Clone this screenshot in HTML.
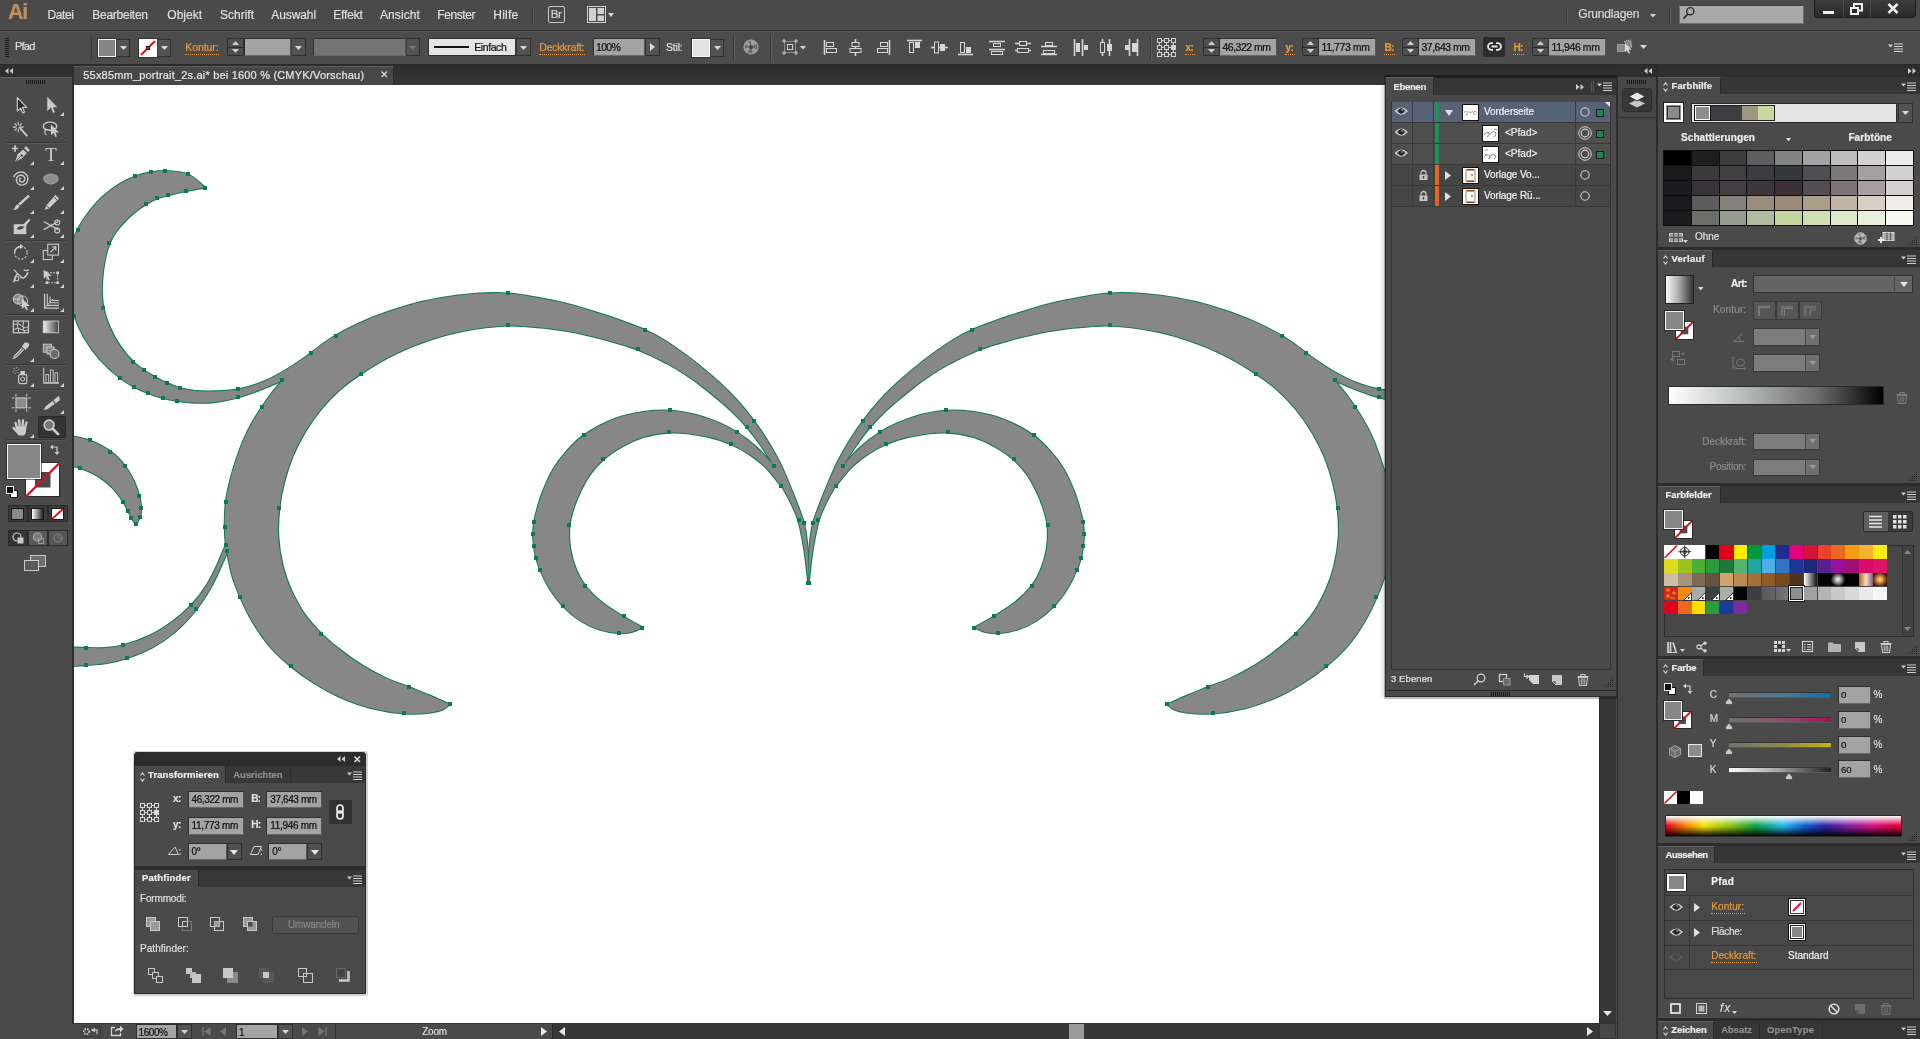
<!DOCTYPE html>
<html lang="de"><head><meta charset="utf-8"><title>55x85mm_portrait_2s.ai* bei 1600 % (CMYK/Vorschau)</title>
<style>
html,body{margin:0;padding:0}
body{width:1920px;height:1039px;overflow:hidden;position:relative;background:#4b4b4b;font-family:"Liberation Sans",sans-serif;}
.a{position:absolute;box-sizing:border-box}
.t{position:absolute;white-space:nowrap;-webkit-text-stroke:0.22px currentColor;}
svg{overflow:visible}
</style></head><body><div id="app" style="position:absolute;left:0;top:0;width:1920px;height:1039px;will-change:transform">
<div class="a" style="left:0px;top:0px;width:1920px;height:30px;background:#4a4a4a;"></div><div class="a" style="left:0px;top:30px;width:1920px;height:1px;background:#2b2b2b;"></div><span class="t" style="left:8.0px;top:2.4px;font-size:21.5px;line-height:21.5px;color:#c48d5f;letter-spacing:-1.25px;font-weight:bold;">Ai</span><span class="t" style="left:47.5px;top:8.8px;font-size:12px;line-height:12px;color:#dedede;letter-spacing:-0.40px;">Datei</span><span class="t" style="left:92.3px;top:8.8px;font-size:12px;line-height:12px;color:#dedede;letter-spacing:-0.26px;">Bearbeiten</span><span class="t" style="left:167.3px;top:8.8px;font-size:12px;line-height:12px;color:#dedede;letter-spacing:0.00px;">Objekt</span><span class="t" style="left:220.0px;top:8.8px;font-size:12px;line-height:12px;color:#dedede;letter-spacing:-0.00px;">Schrift</span><span class="t" style="left:271.3px;top:8.8px;font-size:12px;line-height:12px;color:#dedede;letter-spacing:-0.09px;">Auswahl</span><span class="t" style="left:333.3px;top:8.8px;font-size:12px;line-height:12px;color:#dedede;letter-spacing:-0.18px;">Effekt</span><span class="t" style="left:380.0px;top:8.8px;font-size:12px;line-height:12px;color:#dedede;letter-spacing:0.09px;">Ansicht</span><span class="t" style="left:437.3px;top:8.8px;font-size:12px;line-height:12px;color:#dedede;letter-spacing:-0.43px;">Fenster</span><span class="t" style="left:493.3px;top:8.8px;font-size:12px;line-height:12px;color:#dedede;letter-spacing:0.20px;">Hilfe</span><div class="a" style="left:532px;top:8px;width:1px;height:16px;background:#3a3a3a;"></div><div class="a" style="left:533px;top:8px;width:1px;height:16px;background:#5a5a5a;"></div><div class="a" style="left:548px;top:6px;width:17px;height:17px;background:transparent;border:1px solid #c8c8c8;border-radius:2px"></div><span class="t" style="left:550.7px;top:9.1px;font-size:11.5px;line-height:11.5px;color:#d6d6d6;letter-spacing:-0.25px;">Br</span><svg class="a" style="left:587px;top:6px;" width="19" height="17" viewBox="0 0 19 17"><rect x="0.5" y="0.5" width="18" height="16" fill="none" stroke="#d0d0d0"/><rect x="2" y="2" width="7" height="13" fill="#d0d0d0"/><rect x="10.5" y="2" width="6.5" height="6" fill="#d0d0d0"/><rect x="10.5" y="9.5" width="6.5" height="5.5" fill="#d0d0d0"/></svg><svg class="a" style="left:608px;top:13px;" width="6" height="4" viewBox="0 0 6 4"><path d="M0 0H6 L3 4Z" fill="#d8d8d8"/></svg><div class="a" style="left:1566px;top:6px;width:1px;height:18px;background:#3c3c3c;"></div><div class="a" style="left:1567px;top:6px;width:1px;height:18px;background:#585858;"></div><span class="t" style="left:1578.3px;top:8.1px;font-size:12px;line-height:12px;color:#d4d4d4;letter-spacing:-0.17px;">Grundlagen</span><svg class="a" style="left:1650px;top:13.5px;" width="6" height="3.5" viewBox="0 0 6 3.5"><path d="M0 0H6 L3 3.5Z" fill="#d8d8d8"/></svg><div class="a" style="left:1669px;top:6px;width:1px;height:18px;background:#3c3c3c;"></div><div class="a" style="left:1670px;top:6px;width:1px;height:18px;background:#585858;"></div><div class="a" style="left:1679px;top:5px;width:125px;height:19px;background:#a9a9a9;border:1px solid #6d6d6d;border-top-color:#3d3d3d"></div><svg class="a" style="left:1682px;top:6px;" width="14" height="14" viewBox="0 0 14 14"><circle cx="8.3" cy="5.2" r="3.6" fill="none" stroke="#2a2a2a" stroke-width="1.4"/><path d="M5.8 8L1.5 12.6" stroke="#2a2a2a" stroke-width="1.8"/></svg><div class="a" style="left:1814px;top:0px;width:102px;height:18px;background:#2a2a2a;border-radius:0 0 4px 4px;border:1px solid #1c1c1c;border-top:none;background:linear-gradient(#3c3c3c,#2a2a2a)"></div><div class="a" style="left:1843px;top:0px;width:1px;height:17px;background:#4a4a4a;"></div><div class="a" style="left:1870px;top:0px;width:1px;height:17px;background:#4a4a4a;"></div><div class="a" style="left:1823px;top:11px;width:11px;height:3px;background:#f0f0f0;"></div><svg class="a" style="left:1850px;top:3px;" width="13" height="12" viewBox="0 0 13 12"><rect x="4" y="1" width="8" height="6.5" fill="none" stroke="#f0f0f0" stroke-width="2"/><rect x="1" y="5" width="7" height="6" fill="#2a2a2a" stroke="#f0f0f0" stroke-width="2"/></svg><svg class="a" style="left:1887px;top:3px;" width="12" height="11" viewBox="0 0 12 11"><path d="M1.5 1L10.5 10M10.5 1L1.5 10" stroke="#f0f0f0" stroke-width="2.6"/></svg><div class="a" style="left:0px;top:31px;width:1920px;height:33px;background:#4c4c4c;"></div><div class="a" style="left:0px;top:31px;width:1920px;height:1px;background:#5a5a5a;"></div><div class="a" style="left:0px;top:64px;width:1920px;height:1px;background:#2b2b2b;"></div><div class="a" style="left:5px;top:38px;width:4px;height:19px;background:transparent;background:repeating-linear-gradient(#1e1e1e 0 1px,transparent 1px 2px)"></div><span class="t" style="left:15.0px;top:41.0px;font-size:11px;line-height:11px;color:#dedede;letter-spacing:-0.78px;">Pfad</span><div class="a" style="left:91px;top:36px;width:1px;height:24px;background:#3a3a3a;"></div><div class="a" style="left:97.5px;top:38.5px;width:18px;height:18px;background:#858585;border:1px solid #f4f4f4;outline:1px solid #333"></div><div class="a" style="left:116px;top:38.5px;width:14px;height:18px;background:#535353;border:1px solid #303030;border-left-color:#3c3c3c"></div><svg class="a" style="left:119.5px;top:46px;" width="7" height="4" viewBox="0 0 7 4"><path d="M0 0H7 L3.5 4Z" fill="#d8d8d8"/></svg><div class="a" style="left:138.5px;top:38.5px;width:18px;height:18px;background:#fff;outline:1px solid #333"></div><svg class="a" style="left:138.5px;top:38.5px;" width="18" height="18" viewBox="0 0 18 18"><path d="M2 16L16 2" stroke="#d8121c" stroke-width="2"/><rect x="7.5" y="7.5" width="3" height="3" fill="none" stroke="#111"/></svg><div class="a" style="left:157px;top:38.5px;width:14px;height:18px;background:#535353;border:1px solid #303030;border-left-color:#3c3c3c"></div><svg class="a" style="left:160.5px;top:46px;" width="7" height="4" viewBox="0 0 7 4"><path d="M0 0H7 L3.5 4Z" fill="#d8d8d8"/></svg><span class="t" style="left:185.3px;top:42.1px;font-size:10.5px;line-height:10.5px;color:#e8983a;letter-spacing:-0.09px;">Kontur:</span><div class="a" style="left:185px;top:53.5px;width:34px;height:1px;background:transparent;border-top:1px dotted #e8983a"></div><div class="a" style="left:226.5px;top:38px;width:17px;height:18px;background:#4e4e4e;border:1px solid #2c2c2c;border-radius:2px 0 0 2px"></div><svg class="a" style="left:231.5px;top:41px;" width="7" height="4" viewBox="0 0 7 4"><path d="M0 4H7L3.5 0Z" fill="#d0d0d0"/></svg><svg class="a" style="left:231.5px;top:49px;" width="7" height="4" viewBox="0 0 7 4"><path d="M0 0H7L3.5 4Z" fill="#d0d0d0"/></svg><div class="a" style="left:227.5px;top:46.5px;width:15px;height:1px;background:#2c2c2c;"></div><div class="a" style="left:243.5px;top:37.5px;width:47px;height:18.8px;background:#a3a3a3;border:1px solid #2e2e2e;border-bottom-color:#6a6a6a;border-right-color:#555"></div><div class="a" style="left:290.5px;top:38px;width:15px;height:18px;background:#535353;border:1px solid #303030;border-left-color:#3c3c3c"></div><svg class="a" style="left:294.5px;top:45.5px;" width="7" height="4" viewBox="0 0 7 4"><path d="M0 0H7 L3.5 4Z" fill="#d8d8d8"/></svg><div class="a" style="left:313px;top:37.5px;width:93px;height:18.8px;background:#747474;border:1px solid #2e2e2e;border-bottom-color:#6a6a6a;border-right-color:#555"></div><div class="a" style="left:405.5px;top:38px;width:14px;height:18px;background:#535353;border:1px solid #303030;border-left-color:#3c3c3c"></div><svg class="a" style="left:409px;top:45.5px;" width="7" height="4" viewBox="0 0 7 4"><path d="M0 0H7 L3.5 4Z" fill="#777"/></svg><div class="a" style="left:427.5px;top:38px;width:88px;height:18px;background:#e4e4e4;border:1px solid #2e2e2e"></div><div class="a" style="left:433.5px;top:46px;width:35px;height:2px;background:#111;"></div><span class="t" style="left:474.3px;top:41.7px;font-size:10.5px;line-height:10.5px;color:#111;letter-spacing:-0.43px;">Einfach</span><div class="a" style="left:515.5px;top:38px;width:15px;height:18px;background:#535353;border:1px solid #303030;border-left-color:#3c3c3c"></div><svg class="a" style="left:519.5px;top:45.5px;" width="7" height="4" viewBox="0 0 7 4"><path d="M0 0H7 L3.5 4Z" fill="#d8d8d8"/></svg><span class="t" style="left:539.3px;top:42.1px;font-size:10.5px;line-height:10.5px;color:#e8983a;letter-spacing:-0.23px;">Deckkraft:</span><div class="a" style="left:539px;top:53.5px;width:46px;height:1px;background:transparent;border-top:1px dotted #e8983a"></div><div class="a" style="left:592.5px;top:37.5px;width:52px;height:18.8px;background:#a3a3a3;border:1px solid #2e2e2e;border-bottom-color:#6a6a6a;border-right-color:#555"></div><span class="t" style="left:596.0px;top:41.5px;font-size:10.5px;line-height:10.5px;color:#111;letter-spacing:-0.71px;">100%</span><div class="a" style="left:644.5px;top:38px;width:15px;height:18px;background:#535353;border:1px solid #303030"></div><svg class="a" style="left:650px;top:43px;" width="5" height="8" viewBox="0 0 5 8"><path d="M0 0V8 L5 4Z" fill="#d8d8d8"/></svg><span class="t" style="left:666.0px;top:41.6px;font-size:10.5px;line-height:10.5px;color:#dedede;letter-spacing:-0.20px;">Stil:</span><div class="a" style="left:691.5px;top:38.5px;width:18px;height:18px;background:#e2e2e2;border:1px solid #f8f8f8;outline:1px solid #333"></div><div class="a" style="left:710px;top:38.5px;width:14px;height:18px;background:#535353;border:1px solid #303030;border-left-color:#3c3c3c"></div><svg class="a" style="left:713.5px;top:46px;" width="7" height="4" viewBox="0 0 7 4"><path d="M0 0H7 L3.5 4Z" fill="#d8d8d8"/></svg><div class="a" style="left:732.5px;top:35px;width:1px;height:26px;background:#3a3a3a;"></div><div class="a" style="left:733.5px;top:35px;width:1px;height:26px;background:#5a5a5a;"></div><svg class="a" style="left:743px;top:39px;" width="16" height="16" viewBox="0 0 16 16"><circle cx="8" cy="8" r="7" fill="#6c6c6c" stroke="#b4b4b4" stroke-width="1"/><path d="M8 8L8 1A7 7 0 0 1 14 4.5ZM8 8L14.5 10.5A7 7 0 0 1 10 14.7ZM8 8L4 14A7 7 0 0 1 1.2 9.5ZM8 8L1.5 5A7 7 0 0 1 5 1.7Z" fill="#9c9c9c"/><circle cx="8" cy="8" r="2" fill="#444"/></svg><div class="a" style="left:770px;top:35px;width:1px;height:26px;background:#3a3a3a;"></div><div class="a" style="left:771px;top:35px;width:1px;height:26px;background:#5a5a5a;"></div><svg class="a" style="left:782px;top:39px;" width="16" height="16" viewBox="0 0 16 16"><rect x="2.5" y="2.5" width="11" height="11" fill="none" stroke="#c8c8c8" stroke-dasharray="1 1"/><rect x="5.5" y="5.5" width="5" height="5" fill="none" stroke="#d0d0d0"/><path d="M0 2H4M2 0V4M12 2H16M14 0V4M0 14H4M2 12V16M12 14H16M14 12V16" stroke="#c8c8c8"/></svg><svg class="a" style="left:799.5px;top:46px;" width="6" height="3.5" viewBox="0 0 6 3.5"><path d="M0 0H6 L3 3.5Z" fill="#d8d8d8"/></svg><svg class="a" style="left:823px;top:39px;" width="18" height="17" viewBox="0 0 18 17"><path d="M1.5 1V16" stroke="#d6d6d6" stroke-width="1.6"/><rect x="3.5" y="3.5" width="7" height="4" fill="none" stroke="#d6d6d6"/><rect x="3.5" y="9.500" width="10" height="4" fill="none" stroke="#d6d6d6"/></svg><svg class="a" style="left:847px;top:39px;" width="18" height="17" viewBox="0 0 18 17"><path d="M8.5 0V17" stroke="#d6d6d6" stroke-width="1.6"/><rect x="5" y="3.5" width="7" height="4" fill="#4b4b4b" stroke="#d6d6d6"/><rect x="3" y="9.500" width="11" height="4" fill="#4b4b4b" stroke="#d6d6d6"/></svg><svg class="a" style="left:874px;top:39px;" width="18" height="17" viewBox="0 0 18 17"><path d="M15.500 1V16" stroke="#d6d6d6" stroke-width="1.6"/><rect x="6.500" y="3.5" width="7" height="4" fill="none" stroke="#d6d6d6"/><rect x="3.5" y="9.500" width="10" height="4" fill="none" stroke="#d6d6d6"/></svg><svg class="a" style="left:906px;top:39px;" width="18" height="17" viewBox="0 0 18 17"><path d="M1 1.5H16" stroke="#d6d6d6" stroke-width="1.6"/><rect x="3.5" y="3.5" width="4" height="10" fill="none" stroke="#d6d6d6"/><rect x="9.500" y="3.5" width="4" height="5" fill="#d6d6d6" stroke="#d6d6d6"/></svg><svg class="a" style="left:931px;top:39px;" width="18" height="17" viewBox="0 0 18 17"><path d="M0 8.5H17" stroke="#d6d6d6" stroke-width="1.6"/><rect x="3.5" y="3" width="4" height="11" fill="#4b4b4b" stroke="#d6d6d6"/><rect x="9.500" y="5.500" width="4" height="6" fill="#d6d6d6" stroke="#d6d6d6"/></svg><svg class="a" style="left:957px;top:39px;" width="18" height="17" viewBox="0 0 18 17"><path d="M1 15.500H16" stroke="#d6d6d6" stroke-width="1.6"/><rect x="3.5" y="3.5" width="4" height="10" fill="none" stroke="#d6d6d6"/><rect x="9.500" y="8.500" width="4" height="5" fill="#d6d6d6" stroke="#d6d6d6"/></svg><svg class="a" style="left:988px;top:39px;" width="18" height="17" viewBox="0 0 18 17"><path d="M1 2.500H17M1 10.500H17" stroke="#d6d6d6" stroke-width="1.6"/><rect x="5.500" y="4.500" width="7" height="3" fill="none" stroke="#d6d6d6"/><rect x="3.5" y="12.500" width="11" height="3" fill="none" stroke="#d6d6d6"/></svg><svg class="a" style="left:1014px;top:39px;" width="18" height="17" viewBox="0 0 18 17"><path d="M1 4.500H17M1 11.500H17" stroke="#d6d6d6" stroke-width="1.6"/><rect x="5.500" y="2.500" width="7" height="4" fill="#4b4b4b" stroke="#d6d6d6"/><rect x="3.5" y="9.500" width="11" height="4" fill="#4b4b4b" stroke="#d6d6d6"/></svg><svg class="a" style="left:1040px;top:39px;" width="18" height="17" viewBox="0 0 18 17"><path d="M1 7.500H17M1 15.500H17" stroke="#d6d6d6" stroke-width="1.6"/><rect x="5.500" y="3.500" width="7" height="3" fill="none" stroke="#d6d6d6"/><rect x="3.5" y="11.500" width="11" height="3" fill="none" stroke="#d6d6d6"/></svg><svg class="a" style="left:1072px;top:39px;" width="18" height="17" viewBox="0 0 18 17"><path d="M2.500 0V17M10.500 0V17" stroke="#d6d6d6" stroke-width="1.6"/><rect x="4.500" y="4.500" width="3" height="8" fill="#d6d6d6" stroke="#d6d6d6"/><rect x="12.500" y="6.500" width="3" height="4" fill="#d6d6d6" stroke="#d6d6d6"/></svg><svg class="a" style="left:1098px;top:39px;" width="18" height="17" viewBox="0 0 18 17"><path d="M4.500 0V17M11.500 0V17" stroke="#d6d6d6" stroke-width="1.6"/><rect x="2.500" y="3.500" width="4" height="10" fill="#4b4b4b" stroke="#d6d6d6"/><rect x="9.500" y="5.500" width="4" height="6" fill="#d6d6d6" stroke="#d6d6d6"/></svg><svg class="a" style="left:1123px;top:39px;" width="18" height="17" viewBox="0 0 18 17"><path d="M6.500 0V17M14.500 0V17" stroke="#d6d6d6" stroke-width="1.6"/><rect x="2.500" y="6.500" width="3" height="4" fill="#d6d6d6" stroke="#d6d6d6"/><rect x="9.500" y="4.500" width="4" height="8" fill="#d6d6d6" stroke="#d6d6d6"/></svg><div class="a" style="left:1150px;top:35px;width:1px;height:26px;background:#3a3a3a;"></div><div class="a" style="left:1151px;top:35px;width:1px;height:26px;background:#5a5a5a;"></div><svg class="a" style="left:1157px;top:38px;" width="19" height="19" viewBox="0 0 19 19"><rect x="0.5" y="0.5" width="4" height="4" fill="none" stroke="#d0d0d0"/><rect x="0.5" y="7.5" width="4" height="4" fill="none" stroke="#d0d0d0"/><rect x="0.5" y="14.5" width="4" height="4" fill="none" stroke="#d0d0d0"/><rect x="7.5" y="0.5" width="4" height="4" fill="none" stroke="#d0d0d0"/><rect x="7.5" y="7.5" width="4" height="4" fill="none" stroke="#d0d0d0"/><rect x="7.5" y="14.5" width="4" height="4" fill="none" stroke="#d0d0d0"/><rect x="14.5" y="0.5" width="4" height="4" fill="none" stroke="#d0d0d0"/><rect x="14.5" y="7.5" width="4" height="4" fill="none" stroke="#d0d0d0"/><rect x="14.5" y="14.5" width="4" height="4" fill="none" stroke="#d0d0d0"/><path d="M5 2.500H7M12 2.500H14M5 9.500H7M12 9.500H14M5 16.500H7M12 16.500H14M2.500 5V7M2.500 12V14M9.500 5V7M9.500 12V14M16.500 5V7M16.500 12V14" stroke="#d0d0d0"/><rect x="14.500" y="7.500" width="4" height="4" fill="#d0d0d0"/></svg><span class="t" style="left:1185.5px;top:42.5px;font-size:10px;line-height:10px;color:#e8983a;letter-spacing:-0.45px;font-weight:bold;">x:</span><div class="a" style="left:1185px;top:53.5px;width:10px;height:1px;background:transparent;border-top:1px dotted #e8983a"></div><div class="a" style="left:1202.5px;top:38px;width:17px;height:18px;background:#4e4e4e;border:1px solid #2c2c2c;border-radius:2px 0 0 2px"></div><svg class="a" style="left:1207.5px;top:41px;" width="7" height="4" viewBox="0 0 7 4"><path d="M0 4H7L3.5 0Z" fill="#d0d0d0"/></svg><svg class="a" style="left:1207.5px;top:49px;" width="7" height="4" viewBox="0 0 7 4"><path d="M0 0H7L3.5 4Z" fill="#d0d0d0"/></svg><div class="a" style="left:1203.5px;top:46.5px;width:15px;height:1px;background:#2c2c2c;"></div><div class="a" style="left:1219px;top:37.5px;width:57.5px;height:18.8px;background:#a3a3a3;border:1px solid #2e2e2e;border-bottom-color:#6a6a6a;border-right-color:#555"></div><span class="t" style="left:1222.5px;top:41.5px;font-size:10.5px;line-height:10.5px;color:#111;letter-spacing:-0.50px;">46,322 mm</span><span class="t" style="left:1285.5px;top:42.5px;font-size:10px;line-height:10px;color:#e8983a;letter-spacing:-0.45px;font-weight:bold;">y:</span><div class="a" style="left:1285px;top:53.5px;width:10px;height:1px;background:transparent;border-top:1px dotted #e8983a"></div><div class="a" style="left:1301.5px;top:38px;width:17px;height:18px;background:#4e4e4e;border:1px solid #2c2c2c;border-radius:2px 0 0 2px"></div><svg class="a" style="left:1306.5px;top:41px;" width="7" height="4" viewBox="0 0 7 4"><path d="M0 4H7L3.5 0Z" fill="#d0d0d0"/></svg><svg class="a" style="left:1306.5px;top:49px;" width="7" height="4" viewBox="0 0 7 4"><path d="M0 0H7L3.5 4Z" fill="#d0d0d0"/></svg><div class="a" style="left:1302.5px;top:46.5px;width:15px;height:1px;background:#2c2c2c;"></div><div class="a" style="left:1318px;top:37.5px;width:57.5px;height:18.8px;background:#a3a3a3;border:1px solid #2e2e2e;border-bottom-color:#6a6a6a;border-right-color:#555"></div><span class="t" style="left:1321.5px;top:41.5px;font-size:10.5px;line-height:10.5px;color:#111;letter-spacing:-0.42px;">11,773 mm</span><span class="t" style="left:1384.5px;top:42.5px;font-size:10px;line-height:10px;color:#e8983a;letter-spacing:-0.78px;font-weight:bold;">B:</span><div class="a" style="left:1384px;top:53.5px;width:11px;height:1px;background:transparent;border-top:1px dotted #e8983a"></div><div class="a" style="left:1401.5px;top:38px;width:17px;height:18px;background:#4e4e4e;border:1px solid #2c2c2c;border-radius:2px 0 0 2px"></div><svg class="a" style="left:1406.5px;top:41px;" width="7" height="4" viewBox="0 0 7 4"><path d="M0 4H7L3.5 0Z" fill="#d0d0d0"/></svg><svg class="a" style="left:1406.5px;top:49px;" width="7" height="4" viewBox="0 0 7 4"><path d="M0 0H7L3.5 4Z" fill="#d0d0d0"/></svg><div class="a" style="left:1402.5px;top:46.5px;width:15px;height:1px;background:#2c2c2c;"></div><div class="a" style="left:1418px;top:37.5px;width:57.5px;height:18.8px;background:#a3a3a3;border:1px solid #2e2e2e;border-bottom-color:#6a6a6a;border-right-color:#555"></div><span class="t" style="left:1421.5px;top:41.5px;font-size:10.5px;line-height:10.5px;color:#111;letter-spacing:-0.50px;">37,643 mm</span><div class="a" style="left:1483px;top:37px;width:22px;height:20px;background:#2c2c2c;border-radius:2px"></div><svg class="a" style="left:1486.5px;top:42.3px;" width="15" height="9" viewBox="0 0 15 9"><path d="M6 1.200H4.300A3.200 3.200 0 0 0 4.300 7.800H6M9 1.200H10.700A3.200 3.200 0 0 1 10.700 7.800H9M4.500 4.500H10.500" fill="none" stroke="#e6e6e6" stroke-width="1.800"/></svg><span class="t" style="left:1513.5px;top:42.5px;font-size:10px;line-height:10px;color:#e8983a;letter-spacing:-0.78px;font-weight:bold;">H:</span><div class="a" style="left:1513px;top:53.5px;width:11px;height:1px;background:transparent;border-top:1px dotted #e8983a"></div><div class="a" style="left:1531.5px;top:38px;width:17px;height:18px;background:#4e4e4e;border:1px solid #2c2c2c;border-radius:2px 0 0 2px"></div><svg class="a" style="left:1536.5px;top:41px;" width="7" height="4" viewBox="0 0 7 4"><path d="M0 4H7L3.5 0Z" fill="#d0d0d0"/></svg><svg class="a" style="left:1536.5px;top:49px;" width="7" height="4" viewBox="0 0 7 4"><path d="M0 0H7L3.5 4Z" fill="#d0d0d0"/></svg><div class="a" style="left:1532.5px;top:46.5px;width:15px;height:1px;background:#2c2c2c;"></div><div class="a" style="left:1548px;top:37.5px;width:57.5px;height:18.8px;background:#a3a3a3;border:1px solid #2e2e2e;border-bottom-color:#6a6a6a;border-right-color:#555"></div><span class="t" style="left:1551.5px;top:41.5px;font-size:10.5px;line-height:10.5px;color:#111;letter-spacing:-0.42px;">11,946 mm</span><svg class="a" style="left:1616px;top:38px;" width="19" height="18" viewBox="0 0 19 18"><rect x="1.500" y="6.500" width="7" height="7" fill="#8a8a8a" stroke="#c8c8c8" stroke-dasharray="1 1"/><path d="M8 3.500L14.500 2L16 9L12 10" fill="#8a8a8a" stroke="#c8c8c8" stroke-dasharray="1 1"/><path d="M9 5L15.500 11.500L12.500 11.700L14 15L12.500 15.700L11 12.500L9 14Z" fill="#d8d8d8"/></svg><svg class="a" style="left:1640px;top:45px;" width="7" height="4" viewBox="0 0 7 4"><path d="M0 0H7 L3.5 4Z" fill="#d8d8d8"/></svg><svg class="a" style="left:1888px;top:43px;" width="16" height="9" viewBox="0 0 16 9"><path d="M0 1.500H5L2.500 4.500Z" fill="#cfcfcf"/><path d="M6 1H15M6 3.500H15M6 6H15M6 8.500H15" stroke="#cfcfcf" stroke-width="1"/></svg><div class="a" style="left:0px;top:65px;width:1920px;height:20px;background:#343434;background:linear-gradient(#2b2b2b,#373737)"></div><div class="a" style="left:74px;top:66px;width:320px;height:19px;background:#474747;border-top:1px solid #5e5e5e;border-right:1px solid #2a2a2a"></div><span class="t" style="left:83.3px;top:69.7px;font-size:11px;line-height:11px;color:#e4e4e4;letter-spacing:0.19px;">55x85mm_portrait_2s.ai* bei 1600 % (CMYK/Vorschau)</span><svg class="a" style="left:381px;top:71px;" width="7" height="7" viewBox="0 0 7 7"><path d="M0.500 0.500L6 6M6 0.500L0.500 6" stroke="#d8d8d8" stroke-width="1.3"/></svg><div class="a" style="left:0px;top:65px;width:72px;height:974px;background:#4a4a4a;"></div><div class="a" style="left:0px;top:65px;width:72px;height:12px;background:#2f2f2f;"></div><svg class="a" style="left:5px;top:68px;" width="8" height="6" viewBox="0 0 8 6"><path d="M3.500 0V6L0 3ZM8 0V6L4.500 3Z" fill="#c8c8c8"/></svg><div class="a" style="left:0px;top:77px;width:72px;height:1px;background:#5c5c5c;"></div><div class="a" style="left:26px;top:80px;width:20px;height:4px;background:transparent;background:repeating-linear-gradient(90deg,#1c1c1c 0 1px,transparent 1px 2px)"></div><div class="a" style="left:6px;top:142.3px;width:60px;height:1px;background:#3a3a3a;"></div><div class="a" style="left:6px;top:143.3px;width:60px;height:1px;background:#565656;"></div><div class="a" style="left:6px;top:239.5px;width:60px;height:1px;background:#3a3a3a;"></div><div class="a" style="left:6px;top:240.5px;width:60px;height:1px;background:#565656;"></div><div class="a" style="left:6px;top:314px;width:60px;height:1px;background:#3a3a3a;"></div><div class="a" style="left:6px;top:315px;width:60px;height:1px;background:#565656;"></div><div class="a" style="left:6px;top:364px;width:60px;height:1px;background:#3a3a3a;"></div><div class="a" style="left:6px;top:365px;width:60px;height:1px;background:#565656;"></div><div class="a" style="left:6px;top:389px;width:60px;height:1px;background:#3a3a3a;"></div><div class="a" style="left:6px;top:390px;width:60px;height:1px;background:#565656;"></div><div class="a" style="left:6px;top:438.5px;width:60px;height:1px;background:#3a3a3a;"></div><div class="a" style="left:6px;top:439.5px;width:60px;height:1px;background:#565656;"></div><div class="a" style="left:37.5px;top:416px;width:28px;height:22px;background:#343434;border-radius:2px;border:1px solid #2a2a2a"></div><svg class="a" style="left:10.6px;top:94.9px" width="19.8" height="19.8" viewBox="0 0 22 22"><path d="M7 3V18L10.500 14.500L13 20L15 19L12.700 13.700H17.500Z" fill="#2a2a2a" stroke="#cbcbcb" stroke-width="1.3" stroke-linejoin="round"/></svg><svg class="a" style="left:40.6px;top:94.9px" width="19.8" height="19.8" viewBox="0 0 22 22"><path d="M7 2V18L11 14L13.500 20L15.500 19L13 13.500H18Z" fill="#cbcbcb"/></svg><svg class="a" style="left:59.5px;top:111.8px;" width="4" height="4" viewBox="0 0 4 4"><path d="M4 0V4H0Z" fill="#d0d0d0"/></svg><svg class="a" style="left:10.6px;top:119.4px" width="19.8" height="19.8" viewBox="0 0 22 22"><path d="M9 9L18 19" stroke="#cbcbcb" stroke-width="2.2"/><path d="M8 3V7M8 11V15M2 9H6M10 9H14M4 5L6.500 7.500M12 5L9.500 7.500M4 13L6.500 10.500" stroke="#cbcbcb" stroke-width="1.2"/></svg><svg class="a" style="left:40.6px;top:119.4px" width="19.8" height="19.8" viewBox="0 0 22 22"><ellipse cx="10" cy="8" rx="7.500" ry="4.500" fill="none" stroke="#cbcbcb" stroke-width="1.5"/><path d="M5 11.500Q3 15 6 18" fill="none" stroke="#cbcbcb" stroke-width="1.3"/><path d="M11 6V18L14 15.500L16 20L17.700 19.200L16 15H20Z" fill="#cbcbcb"/></svg><svg class="a" style="left:10.6px;top:144px" width="19.8" height="19.8" viewBox="0 0 22 22"><path d="M1 5H8M4.500 1.500V8.500" stroke="#cbcbcb" stroke-width="1.900"/><path d="M4.500 20L7.500 11.500L13.500 6L17.500 10L12 16Z" fill="#cbcbcb"/><path d="M14.500 4.500L16.500 2.500L21 7L19 9Z" fill="#cbcbcb"/><path d="M5 19.500L11 13.500" stroke="#4a4a4a" stroke-width="1"/><circle cx="11.800" cy="12.700" r="1.300" fill="#4a4a4a"/></svg><svg class="a" style="left:29.5px;top:160.9px;" width="4" height="4" viewBox="0 0 4 4"><path d="M4 0V4H0Z" fill="#d0d0d0"/></svg><svg class="a" style="left:40.6px;top:144px" width="19.8" height="19.8" viewBox="0 0 22 22"><text x="11" y="19" font-family="Liberation Serif,serif" font-size="21" fill="#cbcbcb" text-anchor="middle">T</text></svg><svg class="a" style="left:59.5px;top:160.9px;" width="4" height="4" viewBox="0 0 4 4"><path d="M4 0V4H0Z" fill="#d0d0d0"/></svg><svg class="a" style="left:10.6px;top:169.1px" width="19.8" height="19.8" viewBox="0 0 22 22"><path d="M3.0 9.2L3.9 7.4L5.1 5.8L6.6 4.6L8.4 3.8L10.2 3.4L12.1 3.5L13.9 3.9L15.5 4.8L16.8 6.0L17.8 7.4L18.5 9.0L18.7 10.7L18.6 12.3L18.1 13.9L17.3 15.3L16.2 16.4L14.9 17.2L13.4 17.7L12.0 17.9L10.5 17.7L9.2 17.2L8.0 16.4L7.1 15.4L6.4 14.2L6.1 13.0L6.0 11.7L6.2 10.4L6.7 9.3L7.4 8.4L8.4 7.6L9.4 7.1L10.5 6.9L11.5 6.9L12.6 7.1L13.5 7.6L14.2 8.3L14.8 9.0L15.2 9.9L15.3 10.8L15.2 11.7L15.0 12.5L14.5 13.2L14.0 13.8L13.3 14.2L12.6 14.4L11.9 14.4L11.2 14.3L10.6 14.1L10.1 13.7L9.8 13.2L9.5 12.7L9.4 12.2L9.4 11.7L9.6 11.2L9.8 10.8L10.1 10.5L10.4 10.3L10.8 10.2L11.1 10.2L11.4 10.3" fill="none" stroke="#cbcbcb" stroke-width="1.5"/></svg><svg class="a" style="left:29.5px;top:186px;" width="4" height="4" viewBox="0 0 4 4"><path d="M4 0V4H0Z" fill="#d0d0d0"/></svg><svg class="a" style="left:40.6px;top:169.1px" width="19.8" height="19.8" viewBox="0 0 22 22"><ellipse cx="11" cy="11" rx="8" ry="5.500" fill="#8e8e8e" stroke="#9c9c9c" stroke-width="1.2"/></svg><svg class="a" style="left:59.5px;top:186px;" width="4" height="4" viewBox="0 0 4 4"><path d="M4 0V4H0Z" fill="#d0d0d0"/></svg><svg class="a" style="left:10.6px;top:193.1px" width="19.8" height="19.8" viewBox="0 0 22 22"><path d="M19 2L21 4L10 14L8 12Z" fill="#cbcbcb"/><path d="M7.500 12.500L9.500 14.500Q8 19 2 19Q5 17 5 14.500Q6 13 7.500 12.500Z" fill="#cbcbcb"/></svg><svg class="a" style="left:29.5px;top:210px;" width="4" height="4" viewBox="0 0 4 4"><path d="M4 0V4H0Z" fill="#d0d0d0"/></svg><svg class="a" style="left:40.6px;top:193.1px" width="19.8" height="19.8" viewBox="0 0 22 22"><path d="M16 2L20 6L9 17L4 19L6 14Z" fill="#cbcbcb"/><path d="M6 14L9 17" stroke="#4a4a4a" stroke-width="1"/><path d="M14 4L18 8" stroke="#4a4a4a" stroke-width="1"/></svg><svg class="a" style="left:59.5px;top:210px;" width="4" height="4" viewBox="0 0 4 4"><path d="M4 0V4H0Z" fill="#d0d0d0"/></svg><svg class="a" style="left:10.6px;top:217.1px" width="19.8" height="19.8" viewBox="0 0 22 22"><path d="M3 8H17V19H3Z" fill="#cbcbcb"/><path d="M6 13Q10 8 15 11Q11 16 6 13Z" fill="#4a4a4a"/><path d="M13 9L20 2L21.500 3.500L15 11Z" fill="#cbcbcb"/></svg><svg class="a" style="left:29.5px;top:234px;" width="4" height="4" viewBox="0 0 4 4"><path d="M4 0V4H0Z" fill="#d0d0d0"/></svg><svg class="a" style="left:40.6px;top:217.1px" width="19.8" height="19.8" viewBox="0 0 22 22"><path d="M3 5L19 14M3 14L19 5" stroke="#cbcbcb" stroke-width="1.5"/><circle cx="18" cy="6" r="2.700" fill="none" stroke="#cbcbcb" stroke-width="1.3"/><circle cx="18" cy="15" r="2.700" fill="none" stroke="#cbcbcb" stroke-width="1.3"/></svg><svg class="a" style="left:59.5px;top:234px;" width="4" height="4" viewBox="0 0 4 4"><path d="M4 0V4H0Z" fill="#d0d0d0"/></svg><svg class="a" style="left:10.6px;top:242.1px" width="19.8" height="19.8" viewBox="0 0 22 22"><circle cx="11" cy="12" r="7" fill="none" stroke="#cbcbcb" stroke-width="1.4" stroke-dasharray="2 2"/><path d="M4 12A7 7 0 0 1 11 5" fill="none" stroke="#cbcbcb" stroke-width="1.5"/><path d="M10 2L14 5L10 8Z" fill="#cbcbcb"/></svg><svg class="a" style="left:29.5px;top:259px;" width="4" height="4" viewBox="0 0 4 4"><path d="M4 0V4H0Z" fill="#d0d0d0"/></svg><svg class="a" style="left:40.6px;top:242.1px" width="19.8" height="19.8" viewBox="0 0 22 22"><rect x="2.500" y="9.500" width="10" height="10" fill="none" stroke="#cbcbcb" stroke-width="1.2"/><rect x="7.500" y="2.500" width="12" height="12" fill="#4a4a4a" stroke="#cbcbcb" stroke-width="1.2"/><path d="M10.500 11.500L16 6M12.500 5.500H16.500V9.500" fill="none" stroke="#cbcbcb" stroke-width="1.3"/></svg><svg class="a" style="left:59.5px;top:259px;" width="4" height="4" viewBox="0 0 4 4"><path d="M4 0V4H0Z" fill="#d0d0d0"/></svg><svg class="a" style="left:10.6px;top:266.7px" width="19.8" height="19.8" viewBox="0 0 22 22"><path d="M3 17Q6 4 10 10Q14 16 19 6" fill="none" stroke="#cbcbcb" stroke-width="1.6"/><circle cx="6.500" cy="13" r="2.200" fill="none" stroke="#cbcbcb" stroke-width="1.2"/><path d="M3 3L8 8M14 3Q17 5 20 3" stroke="#cbcbcb" stroke-width="1.200" fill="none"/></svg><svg class="a" style="left:29.5px;top:283.6px;" width="4" height="4" viewBox="0 0 4 4"><path d="M4 0V4H0Z" fill="#d0d0d0"/></svg><svg class="a" style="left:40.6px;top:266.7px" width="19.8" height="19.8" viewBox="0 0 22 22"><rect x="6.500" y="6.500" width="12" height="11" fill="none" stroke="#cbcbcb" stroke-width="1.2" stroke-dasharray="2 1.500"/><path d="M5 5H8V8H5ZM17 5H20V8H17ZM5 16H8V19H5ZM17 16H20V19H17Z" fill="#cbcbcb"/><path d="M3 3V13L6 10.500L8 15L9.700 14.200L8 10H12Z" fill="#cbcbcb"/></svg><svg class="a" style="left:59.5px;top:283.6px;" width="4" height="4" viewBox="0 0 4 4"><path d="M4 0V4H0Z" fill="#d0d0d0"/></svg><svg class="a" style="left:10.6px;top:291.1px" width="19.8" height="19.8" viewBox="0 0 22 22"><circle cx="8" cy="9" r="5.500" fill="#8a8a8a" stroke="#cbcbcb" stroke-width="1.100"/><circle cx="13" cy="11" r="5.500" fill="none" stroke="#cbcbcb" stroke-width="1.100"/><path d="M3 9H10" stroke="#fff" stroke-width="1" stroke-dasharray="1 1"/><path d="M12 8V20L15 17.500L17 21.500L18.700 20.700L17 16.700H21Z" fill="#cbcbcb"/></svg><svg class="a" style="left:29.5px;top:308px;" width="4" height="4" viewBox="0 0 4 4"><path d="M4 0V4H0Z" fill="#d0d0d0"/></svg><svg class="a" style="left:40.6px;top:291.1px" width="19.8" height="19.8" viewBox="0 0 22 22"><path d="M4 3V19H20" fill="none" stroke="#cbcbcb" stroke-width="1.4"/><path d="M7 3V16H20M10 6V13H20M13 9V10.500H20" fill="none" stroke="#cbcbcb" stroke-width="1.2"/><path d="M4 19L13 9" stroke="#cbcbcb" stroke-width="1"/></svg><svg class="a" style="left:59.5px;top:308px;" width="4" height="4" viewBox="0 0 4 4"><path d="M4 0V4H0Z" fill="#d0d0d0"/></svg><svg class="a" style="left:10.6px;top:317.1px" width="19.8" height="19.8" viewBox="0 0 22 22"><rect x="2.500" y="4.500" width="17" height="13" fill="none" stroke="#cbcbcb" stroke-width="1.3"/><path d="M2.500 9Q8 6 12 10T19.500 10M2.500 14Q8 11 12 14T19.500 14M8 4.500Q6 10 9 17.500M14 4.500Q12 10 15 17.500" fill="none" stroke="#cbcbcb" stroke-width="1.100"/></svg><svg class="a" style="left:40.6px;top:317.1px" width="19.8" height="19.8" viewBox="0 0 22 22"><defs><linearGradient id="tg"><stop offset="0" stop-color="#f0f0f0"/><stop offset="1" stop-color="#404040"/></linearGradient></defs><rect x="2.500" y="4.500" width="17" height="13" fill="url(#tg)" stroke="#cbcbcb" stroke-width="1"/></svg><svg class="a" style="left:10.6px;top:340.9px" width="19.8" height="19.8" viewBox="0 0 22 22"><path d="M15 2Q18 1 20 3Q21 5 19 7L16 10L12 6Z" fill="#cbcbcb"/><path d="M12.500 8L4 16.500L3 19L5.500 18L14 9.500" fill="none" stroke="#cbcbcb" stroke-width="1.400"/></svg><svg class="a" style="left:29.5px;top:357.8px;" width="4" height="4" viewBox="0 0 4 4"><path d="M4 0V4H0Z" fill="#d0d0d0"/></svg><svg class="a" style="left:40.6px;top:340.9px" width="19.8" height="19.8" viewBox="0 0 22 22"><rect x="2.500" y="3.500" width="9" height="9" fill="#8a8a8a" stroke="#cbcbcb"/><rect x="6.500" y="6.500" width="8" height="8" fill="#8a8a8a" stroke="#cbcbcb"/><circle cx="15" cy="14.500" r="5" fill="#6a6a6a" stroke="#cbcbcb" stroke-width="1.200"/></svg><svg class="a" style="left:10.6px;top:366.1px" width="19.8" height="19.8" viewBox="0 0 22 22"><rect x="8.500" y="9.500" width="9" height="10" rx="1.500" fill="none" stroke="#cbcbcb" stroke-width="1.300"/><rect x="10.500" y="5.500" width="5" height="4" fill="#cbcbcb"/><circle cx="13" cy="14.500" r="2.200" fill="none" stroke="#cbcbcb" stroke-width="1.100"/><path d="M3 3H4M6 2H7M2 6H3M5 5H6M7 7H8M4 8H5M8 4H9" stroke="#cbcbcb" stroke-width="1.100"/></svg><svg class="a" style="left:29.5px;top:383px;" width="4" height="4" viewBox="0 0 4 4"><path d="M4 0V4H0Z" fill="#d0d0d0"/></svg><svg class="a" style="left:40.6px;top:366.1px" width="19.8" height="19.8" viewBox="0 0 22 22"><path d="M3 2V19H20" fill="none" stroke="#cbcbcb" stroke-width="1.200"/><rect x="5.500" y="9.500" width="3" height="9" fill="none" stroke="#cbcbcb"/><rect x="10.500" y="4.500" width="3" height="14" fill="none" stroke="#cbcbcb"/><rect x="15.500" y="7.500" width="3" height="11" fill="none" stroke="#cbcbcb"/></svg><svg class="a" style="left:59.5px;top:383px;" width="4" height="4" viewBox="0 0 4 4"><path d="M4 0V4H0Z" fill="#d0d0d0"/></svg><svg class="a" style="left:10.6px;top:392.9px" width="19.8" height="19.8" viewBox="0 0 22 22"><rect x="5.500" y="5.500" width="12" height="11" fill="#8a8a8a" stroke="#cbcbcb" stroke-width="1.200"/><path d="M1 5.500H4M19 5.500H22M1 16.500H4M19 16.500H22M5.500 1V4M5.500 18V21M17.500 1V4M17.500 18V21" stroke="#cbcbcb" stroke-width="1.100"/></svg><svg class="a" style="left:40.6px;top:392.9px" width="19.8" height="19.8" viewBox="0 0 22 22"><path d="M20 3L21 8L7 18L3 19L5 15Z" fill="#cbcbcb"/><path d="M13 8L16 12" stroke="#4a4a4a" stroke-width="1.200"/></svg><svg class="a" style="left:59.5px;top:409.8px;" width="4" height="4" viewBox="0 0 4 4"><path d="M4 0V4H0Z" fill="#d0d0d0"/></svg><svg class="a" style="left:10.6px;top:416.9px" width="19.8" height="19.8" viewBox="0 0 22 22"><g fill="#cbcbcb"><rect x="5.200" y="5" width="2.600" height="9" rx="1.300" transform="rotate(-14 6.500 12)"/><rect x="8.300" y="2.500" width="2.600" height="10" rx="1.300" transform="rotate(-5 9.600 11)"/><rect x="11.400" y="2.500" width="2.600" height="10" rx="1.300" transform="rotate(5 12.700 11)"/><rect x="14.300" y="4.500" width="2.500" height="9" rx="1.250" transform="rotate(15 15.500 12)"/><path d="M5.500 10.500H17V14Q17 18 14.500 20.500H8.500Q7.500 18.500 4 15.500L1.800 12.800Q1 11.300 2.400 10.800Q3.500 10.600 4.300 11.600L5.500 13Z"/></g></svg><svg class="a" style="left:29.5px;top:433.8px;" width="4" height="4" viewBox="0 0 4 4"><path d="M4 0V4H0Z" fill="#d0d0d0"/></svg><svg class="a" style="left:40.6px;top:416.9px" width="19.8" height="19.8" viewBox="0 0 22 22"><circle cx="9" cy="9" r="5.500" fill="#777" stroke="#cbcbcb" stroke-width="1.800"/><path d="M13 13L19 19" stroke="#cbcbcb" stroke-width="3" stroke-linecap="round"/></svg><div class="a" style="left:24.5px;top:461.5px;width:35.5px;height:35.5px;background:#fff;border:1px solid #2a2a2a"></div><svg class="a" style="left:24.5px;top:461.5px;" width="35.5" height="35.5" viewBox="0 0 35.5 35.5"><rect x="10" y="10" width="15.500" height="15.500" fill="#4a4a4a"/><path d="M1 34.500L34.500 1" stroke="#d8121c" stroke-width="2.400"/></svg><div class="a" style="left:6.5px;top:444px;width:34.5px;height:34.5px;background:#868686;border:1px solid #f4f4f4;box-shadow:0 0 0 1px rgba(30,30,30,0.6)"></div><svg class="a" style="left:50px;top:444px;" width="11" height="11" viewBox="0 0 11 11"><path d="M2 3H7V9" fill="none" stroke="#cbcbcb" stroke-width="1.200"/><path d="M0 3L3 0.500V5.500ZM7 11L4.500 8H9.500Z" fill="#cbcbcb"/></svg><svg class="a" style="left:6px;top:486px;" width="12" height="12" viewBox="0 0 12 12"><rect x="4.500" y="4.500" width="7" height="7" fill="#fff" stroke="#111"/><rect x="0.500" y="0.500" width="7" height="7" fill="#111" stroke="#e8e8e8"/></svg><div class="a" style="left:8px;top:505px;width:20px;height:17px;background:#3c3c3c;border:1px solid #2c2c2c"></div><div class="a" style="left:28px;top:505px;width:20px;height:17px;background:#3c3c3c;border:1px solid #2c2c2c"></div><div class="a" style="left:48px;top:505px;width:20px;height:17px;background:#3c3c3c;border:1px solid #2c2c2c"></div><div class="a" style="left:11px;top:507.5px;width:13px;height:12px;background:#8a8a8a;border:1px solid #1a1a1a"></div><div class="a" style="left:31px;top:507.5px;width:13px;height:12px;background:transparent;border:1px solid #1a1a1a;background:linear-gradient(90deg,#fff,#222)"></div><div class="a" style="left:51px;top:507.5px;width:13px;height:12px;background:#fff;border:1px solid #1a1a1a"></div><svg class="a" style="left:51px;top:507.5px;" width="13" height="12" viewBox="0 0 13 12"><path d="M1 11L12 1" stroke="#d8121c" stroke-width="1.800"/></svg><div class="a" style="left:8px;top:530px;width:20px;height:16px;background:#343434;border:1px solid #2a2a2a"></div><div class="a" style="left:28px;top:530px;width:20px;height:16px;background:#5a5a5a;border:1px solid #2c2c2c"></div><div class="a" style="left:48px;top:530px;width:20px;height:16px;background:#565656;border:1px solid #2c2c2c"></div><svg class="a" style="left:12px;top:532px;" width="13" height="12" viewBox="0 0 13 12"><circle cx="5" cy="5" r="4" fill="none" stroke="#cbcbcb" stroke-width="1.200"/><rect x="5.500" y="5.500" width="6" height="6" fill="#cbcbcb"/></svg><svg class="a" style="left:32px;top:532px;" width="13" height="12" viewBox="0 0 13 12"><circle cx="5.500" cy="5" r="4" fill="#777" stroke="#aaa" stroke-width="1.200"/><rect x="6.500" y="6.500" width="5" height="5" fill="none" stroke="#999"/></svg><svg class="a" style="left:52px;top:532px;" width="13" height="12" viewBox="0 0 13 12"><circle cx="6" cy="6" r="4" fill="none" stroke="#7a7a7a" stroke-width="1.200"/><path d="M6 2V6H10" stroke="#7a7a7a" fill="none"/></svg><svg class="a" style="left:24px;top:555px;" width="22" height="17" viewBox="0 0 22 17"><rect x="6.500" y="0.500" width="15" height="11" fill="#6e6e6e" stroke="#cbcbcb"/><rect x="0.500" y="5.500" width="14" height="10" fill="#5a5a5a" stroke="#cbcbcb"/></svg><svg class="a" style="left:74px;top:85px;overflow:hidden" width="1525" height="938" viewBox="74 85 1525 938"><rect x="0" y="0" width="1920" height="1039" fill="#fff"/><g stroke="#0e7a58" stroke-width="2.1" fill="#0e7a58" stroke-linejoin="round"><path d="M449.8 704.4C447.6 706.0 445.9 707.9 443.2 709.2C439.5 710.9 434.7 711.9 429.4 712.7C422.2 713.6 413.0 714.0 404.0 713.4C393.9 712.7 382.3 711.0 371.7 708.3C360.8 705.5 349.4 701.3 339.4 696.8C330.3 692.7 322.1 688.0 314.0 682.9C306.0 677.9 298.4 672.6 291.2 666.6C283.8 660.6 276.6 654.2 270.3 646.9C263.7 639.4 257.7 630.3 252.6 621.8C247.8 613.8 243.9 605.4 240.4 597.4C237.2 590.0 234.4 583.1 232.2 575.5C229.9 567.7 228.1 556.7 227.1 551.3C226.5 548.5 226.2 547.6 225.9 545.0C225.4 540.6 224.9 533.8 224.8 527.4C224.7 519.7 224.9 510.3 225.9 502.0C226.9 494.0 228.7 486.4 230.7 478.7C232.6 470.9 234.9 463.4 237.7 455.6C240.6 447.2 244.1 438.4 248.2 430.3C252.3 422.1 257.0 414.5 262.3 406.5C268.2 397.9 274.7 389.0 282.3 380.5C290.7 371.1 301.5 360.8 311.0 353.0C319.2 346.2 326.4 341.1 335.6 335.6C346.2 329.3 359.6 323.0 371.6 318.0C383.2 313.2 394.7 309.3 406.4 305.9C417.9 302.6 429.4 300.0 441.0 298.0C452.5 296.0 464.4 294.6 475.7 293.8C486.5 293.1 497.9 292.9 507.5 293.5C515.3 293.9 522.0 295.1 528.9 296.2C535.5 297.2 541.7 298.4 548.1 299.7C554.5 301.1 561.0 302.5 567.4 304.1C573.8 305.7 580.2 307.5 586.6 309.4C593.0 311.3 599.5 313.4 605.9 315.6C612.3 317.7 618.7 319.9 625.1 322.3C631.8 324.8 638.8 327.3 645.3 330.3C651.6 333.2 657.7 336.3 663.5 339.8C669.3 343.3 674.6 347.2 680.1 351.1C685.6 355.0 690.6 358.6 696.4 363.2C703.5 368.9 712.4 376.2 719.5 382.8C726.2 388.9 732.1 394.9 737.9 401.3C743.7 407.8 749.2 414.6 754.2 421.4C759.2 428.0 763.7 434.8 768.0 441.7C772.2 448.5 776.1 455.5 779.6 462.5C783.0 469.4 785.9 476.3 788.8 483.3C791.7 490.2 794.6 497.2 797.2 504.0C799.6 510.5 802.1 516.3 803.9 523.3C805.8 531.2 806.9 540.0 807.6 549.2C808.5 559.8 808.1 571.9 808.4 583.3L808.4 583.3C807.0 571.9 806.0 560.1 804.2 549.2C802.5 538.9 800.7 528.0 798.1 519.7C796.1 513.3 793.7 508.7 791.1 503.1C788.4 497.4 784.8 491.7 782.0 485.7C779.0 479.5 777.1 472.7 773.8 466.2C770.3 459.5 765.8 452.7 761.4 446.2C756.9 439.7 752.2 433.3 747.1 427.3C742.0 421.4 737.0 416.2 731.0 410.5C724.1 404.0 715.8 397.0 707.9 390.8C700.4 384.9 692.0 378.8 684.8 374.0C678.8 370.1 673.4 366.8 668.0 363.9C663.2 361.2 658.9 359.2 654.1 356.9C648.8 354.4 642.6 351.5 637.4 349.5C633.1 347.7 629.7 346.8 625.1 345.3C619.4 343.6 612.3 341.5 605.9 339.7C599.5 338.0 593.0 336.4 586.6 334.9C580.2 333.4 573.8 332.1 567.4 331.0C561.0 329.9 554.5 328.9 548.1 328.2C541.7 327.4 535.5 326.9 528.9 326.4C521.9 326.0 515.8 325.2 507.5 325.5C495.5 326.0 477.7 328.1 464.2 330.8C451.9 333.1 440.9 336.2 429.5 340.0C417.8 343.9 406.1 348.5 394.9 354.0C383.4 359.6 371.1 367.0 361.2 373.5C353.0 378.9 346.3 383.9 339.5 389.9C332.8 395.8 326.6 402.4 320.9 409.4C315.0 416.5 309.5 424.4 304.7 432.5C299.9 440.6 295.5 449.3 292.0 457.9C288.6 466.2 286.0 474.8 283.9 483.3C281.8 491.6 280.2 499.9 279.3 508.5C278.3 517.5 277.7 526.8 278.2 536.2C278.8 546.0 280.5 556.9 282.8 566.2C284.9 574.5 287.4 581.7 290.8 589.4C294.6 597.8 299.5 607.1 304.8 614.7C309.8 621.8 315.5 627.9 321.3 633.7C327.0 639.4 332.9 644.3 339.4 649.4C346.5 655.0 354.6 660.8 362.5 665.7C370.1 670.3 377.8 674.5 385.7 678.1C393.4 681.7 401.7 684.3 409.3 687.3C416.3 690.1 422.8 692.6 429.5 695.4C436.3 698.2 443.0 701.4 449.8 704.4Z"/><path d="M1167.2 704.4C1169.4 706.0 1171.1 707.9 1173.8 709.2C1177.5 710.9 1182.3 711.9 1187.6 712.7C1194.8 713.6 1204.0 714.0 1213.0 713.4C1223.1 712.7 1234.7 711.0 1245.3 708.3C1256.2 705.5 1267.6 701.3 1277.6 696.8C1286.7 692.7 1294.9 688.0 1303.0 682.9C1311.0 677.9 1318.6 672.6 1325.8 666.6C1333.2 660.6 1340.4 654.2 1346.7 646.9C1353.3 639.4 1359.3 630.3 1364.4 621.8C1369.2 613.8 1373.1 605.4 1376.6 597.4C1379.8 590.0 1382.6 583.1 1384.8 575.5C1387.1 567.7 1388.9 556.7 1389.9 551.3C1390.5 548.5 1390.8 547.6 1391.1 545.0C1391.6 540.6 1392.1 533.8 1392.2 527.4C1392.3 519.7 1392.1 510.3 1391.1 502.0C1390.1 494.0 1388.3 486.4 1386.3 478.7C1384.4 470.9 1382.1 463.4 1379.3 455.6C1376.4 447.2 1372.9 438.4 1368.8 430.3C1364.7 422.1 1360.0 414.5 1354.7 406.5C1348.8 397.9 1342.3 389.0 1334.7 380.5C1326.3 371.1 1315.5 360.8 1306.0 353.0C1297.8 346.2 1290.6 341.1 1281.4 335.6C1270.8 329.3 1257.4 323.0 1245.4 318.0C1233.8 313.2 1222.3 309.3 1210.6 305.9C1199.1 302.6 1187.6 300.0 1176.0 298.0C1164.5 296.0 1152.6 294.6 1141.3 293.8C1130.5 293.1 1119.1 292.9 1109.5 293.5C1101.7 293.9 1095.0 295.1 1088.1 296.2C1081.5 297.2 1075.3 298.4 1068.9 299.7C1062.5 301.1 1056.0 302.5 1049.6 304.1C1043.2 305.7 1036.8 307.5 1030.4 309.4C1024.0 311.3 1017.5 313.4 1011.1 315.6C1004.7 317.7 998.3 319.9 991.9 322.3C985.2 324.8 978.2 327.3 971.7 330.3C965.4 333.2 959.3 336.3 953.5 339.8C947.7 343.3 942.4 347.2 936.9 351.1C931.4 355.0 926.4 358.6 920.6 363.2C913.5 368.9 904.6 376.2 897.5 382.8C890.8 388.9 884.9 394.9 879.1 401.3C873.3 407.8 867.8 414.6 862.8 421.4C857.8 428.0 853.3 434.8 849.0 441.7C844.8 448.5 840.9 455.5 837.4 462.5C834.0 469.4 831.1 476.3 828.2 483.3C825.3 490.2 822.4 497.2 819.8 504.0C817.4 510.5 814.9 516.3 813.1 523.3C811.2 531.2 810.1 540.0 809.4 549.2C808.5 559.8 808.9 571.9 808.6 583.3L808.6 583.3C810.0 571.9 811.0 560.1 812.8 549.2C814.5 538.9 816.3 528.0 818.9 519.7C820.9 513.3 823.3 508.7 825.9 503.1C828.6 497.4 832.2 491.7 835.0 485.7C838.0 479.5 839.9 472.7 843.2 466.2C846.7 459.5 851.2 452.7 855.6 446.2C860.1 439.7 864.8 433.3 869.9 427.3C875.0 421.4 880.0 416.2 886.0 410.5C892.9 404.0 901.2 397.0 909.1 390.8C916.6 384.9 925.0 378.8 932.2 374.0C938.2 370.1 943.6 366.8 949.0 363.9C953.8 361.2 958.1 359.2 962.9 356.9C968.2 354.4 974.4 351.5 979.6 349.5C983.9 347.7 987.3 346.8 991.9 345.3C997.6 343.6 1004.7 341.5 1011.1 339.7C1017.5 338.0 1024.0 336.4 1030.4 334.9C1036.8 333.4 1043.2 332.1 1049.6 331.0C1056.0 329.9 1062.5 328.9 1068.9 328.2C1075.3 327.4 1081.5 326.9 1088.1 326.4C1095.1 326.0 1101.2 325.2 1109.5 325.5C1121.5 326.0 1139.3 328.1 1152.8 330.8C1165.1 333.1 1176.1 336.2 1187.5 340.0C1199.2 343.9 1210.9 348.5 1222.1 354.0C1233.6 359.6 1245.9 367.0 1255.8 373.5C1264.0 378.9 1270.7 383.9 1277.5 389.9C1284.2 395.8 1290.4 402.4 1296.1 409.4C1302.0 416.5 1307.5 424.4 1312.3 432.5C1317.1 440.6 1321.5 449.3 1325.0 457.9C1328.4 466.2 1331.0 474.8 1333.1 483.3C1335.2 491.6 1336.8 499.9 1337.7 508.5C1338.7 517.5 1339.3 526.8 1338.8 536.2C1338.2 546.0 1336.5 556.9 1334.2 566.2C1332.1 574.5 1329.6 581.7 1326.2 589.4C1322.4 597.8 1317.5 607.1 1312.2 614.7C1307.2 621.8 1301.5 627.9 1295.7 633.7C1290.0 639.4 1284.1 644.3 1277.6 649.4C1270.5 655.0 1262.4 660.8 1254.5 665.7C1246.9 670.3 1239.2 674.5 1231.3 678.1C1223.6 681.7 1215.3 684.3 1207.7 687.3C1200.7 690.1 1194.2 692.6 1187.5 695.4C1180.7 698.2 1174.0 701.4 1167.2 704.4Z"/><path d="M774.3 466.0C768.4 459.8 762.8 453.0 756.5 447.4C750.4 441.9 743.7 436.7 737.2 432.6C731.4 428.8 725.9 426.1 719.5 423.3C712.4 420.2 704.4 417.2 696.4 415.1C688.1 412.9 679.2 411.2 670.5 410.7C661.5 410.2 652.3 410.8 643.2 412.0C634.0 413.4 624.8 415.1 615.5 418.7C605.0 422.6 592.2 429.4 583.6 435.4C576.8 440.3 572.0 445.3 567.0 450.9C561.9 456.6 557.2 462.8 553.2 469.5C549.0 476.6 545.4 485.3 542.6 492.5C540.2 498.6 538.5 504.6 537.0 510.0C535.8 514.4 534.8 518.2 534.2 522.3C533.5 526.3 533.2 530.4 533.2 534.4C533.1 538.4 533.5 542.3 534.0 546.3C534.5 550.4 535.2 554.5 536.3 558.5C537.4 562.5 538.6 566.0 540.4 570.2C542.7 575.8 546.0 582.7 549.7 588.7C553.6 594.8 558.2 601.1 563.4 606.4C568.6 611.8 574.7 617.0 580.9 620.9C586.8 624.6 592.9 627.6 599.4 629.6C605.8 631.7 613.5 632.9 619.3 633.1C623.9 633.3 627.7 632.8 631.6 631.9C635.4 631.0 638.9 629.0 642.5 627.5L642.5 627.5C636.1 623.9 629.8 620.6 623.3 616.6C616.2 612.2 608.2 607.6 601.8 602.3C595.7 597.4 589.8 591.8 585.4 586.1C581.5 581.0 578.7 575.9 576.3 570.1C573.6 563.7 571.5 556.5 570.3 549.3C569.1 541.7 568.7 532.8 569.5 525.5C570.1 519.2 571.8 513.8 573.7 508.0C575.6 502.0 578.1 495.9 580.9 490.3C583.6 484.7 586.5 479.2 590.2 474.1C594.0 468.9 598.3 464.0 603.4 459.5C608.9 454.6 615.8 450.0 622.5 446.3C629.1 442.6 635.9 439.4 643.4 437.1C651.5 434.7 659.9 432.9 669.4 432.6C680.9 432.2 696.7 434.4 707.9 436.8C716.7 438.7 724.0 441.3 731.2 444.4C737.8 447.2 743.8 450.5 749.5 454.3C755.3 458.1 760.5 462.2 765.6 467.2C771.2 472.6 776.1 479.7 781.4 486.0L786.0 480.0Z"/><path d="M842.7 466.0C848.6 459.8 854.2 453.0 860.5 447.4C866.6 441.9 873.3 436.7 879.8 432.6C885.6 428.8 891.1 426.1 897.5 423.3C904.6 420.2 912.6 417.2 920.6 415.1C928.9 412.9 937.8 411.2 946.5 410.7C955.5 410.2 964.7 410.8 973.8 412.0C983.0 413.4 992.2 415.1 1001.5 418.7C1012.0 422.6 1024.8 429.4 1033.4 435.4C1040.2 440.3 1045.0 445.3 1050.0 450.9C1055.1 456.6 1059.8 462.8 1063.8 469.5C1068.0 476.6 1071.6 485.3 1074.4 492.5C1076.8 498.6 1078.5 504.6 1080.0 510.0C1081.2 514.4 1082.2 518.2 1082.8 522.3C1083.5 526.3 1083.8 530.4 1083.8 534.4C1083.9 538.4 1083.5 542.3 1083.0 546.3C1082.5 550.4 1081.8 554.5 1080.7 558.5C1079.6 562.5 1078.4 566.0 1076.6 570.2C1074.3 575.8 1071.0 582.7 1067.3 588.7C1063.4 594.8 1058.8 601.1 1053.6 606.4C1048.4 611.8 1042.3 617.0 1036.1 620.9C1030.2 624.6 1024.1 627.6 1017.6 629.6C1011.2 631.7 1003.5 632.9 997.7 633.1C993.1 633.3 989.3 632.8 985.4 631.9C981.6 631.0 978.1 629.0 974.5 627.5L974.5 627.5C980.9 623.9 987.2 620.6 993.7 616.6C1000.8 612.2 1008.8 607.6 1015.2 602.3C1021.3 597.4 1027.2 591.8 1031.6 586.1C1035.5 581.0 1038.3 575.9 1040.7 570.1C1043.4 563.7 1045.5 556.5 1046.7 549.3C1047.9 541.7 1048.3 532.8 1047.5 525.5C1046.9 519.2 1045.2 513.8 1043.3 508.0C1041.4 502.0 1038.9 495.9 1036.1 490.3C1033.4 484.7 1030.5 479.2 1026.8 474.1C1023.0 468.9 1018.7 464.0 1013.6 459.5C1008.1 454.6 1001.2 450.0 994.5 446.3C987.9 442.6 981.1 439.4 973.6 437.1C965.5 434.7 957.1 432.9 947.6 432.6C936.1 432.2 920.3 434.4 909.1 436.8C900.3 438.7 893.0 441.3 885.8 444.4C879.2 447.2 873.2 450.5 867.5 454.3C861.7 458.1 856.5 462.2 851.4 467.2C845.8 472.6 840.9 479.7 835.6 486.0L831.0 480.0Z"/><path d="M205.3 187.5C199.6 183.2 194.7 177.3 188.3 174.6C181.6 171.7 172.2 171.2 165.5 171.0C160.2 170.8 156.1 171.5 151.3 172.3C146.1 173.2 140.6 174.4 135.3 176.4C129.8 178.4 124.3 181.2 119.1 184.5C113.5 187.9 107.5 192.5 102.7 196.8C98.4 200.7 94.7 204.9 91.3 209.1C88.2 212.8 85.4 216.8 83.0 220.5C81.0 223.6 79.4 226.1 77.7 229.6C75.6 234.0 73.6 238.9 72.1 245.1C70.0 253.7 68.1 267.2 67.9 277.0C67.8 285.3 68.8 293.0 70.1 299.9C71.1 305.9 72.4 310.6 74.5 316.3C77.0 323.2 80.6 331.2 84.6 338.1C88.8 345.2 93.5 352.0 99.2 358.5C105.3 365.4 113.7 373.0 120.3 378.0C125.3 381.9 129.6 384.4 134.4 387.0C139.0 389.4 143.7 391.4 148.5 393.2C153.3 395.1 158.3 396.8 163.2 398.1C167.9 399.3 172.4 400.3 177.3 401.0C182.6 401.8 188.6 402.4 194.0 402.6C199.0 402.9 203.7 402.9 208.5 402.6C213.4 402.3 218.2 401.7 223.1 400.8C228.2 399.9 232.9 398.8 238.4 397.3C244.9 395.4 252.5 392.7 259.6 390.0C267.1 387.2 274.7 383.7 282.2 380.6L335.4 335.6C327.2 341.5 319.5 347.3 310.9 353.3C301.5 359.8 290.6 367.6 281.3 372.8C273.7 377.2 266.9 380.5 259.6 383.2C252.6 385.9 245.0 388.0 238.4 389.3C232.9 390.4 228.2 390.6 223.1 391.0C218.2 391.4 213.4 391.5 208.5 391.5C203.6 391.5 198.7 391.4 194.0 390.9C189.4 390.3 184.9 389.4 180.4 388.2C176.0 386.9 171.5 385.2 167.3 383.3C163.2 381.6 159.2 379.5 155.3 377.4C151.5 375.2 147.7 372.9 144.1 370.4C140.4 367.8 137.0 365.5 133.4 362.0C128.8 357.6 123.6 351.4 119.6 345.4C115.6 339.5 112.1 332.9 109.4 326.5C106.8 320.5 104.8 314.4 103.5 308.3C102.3 302.5 102.0 296.6 101.8 290.9C101.7 285.4 102.1 280.0 102.7 274.5C103.2 269.0 104.0 263.4 105.2 258.2C106.3 253.1 107.6 248.0 109.5 243.5C111.2 239.3 113.4 235.6 115.8 232.0C118.2 228.5 120.9 225.4 124.0 222.2C127.3 218.6 131.5 214.7 135.4 211.6C139.0 208.7 142.7 206.2 146.4 204.0C150.0 201.8 153.7 199.8 157.4 198.3C161.0 196.9 164.2 196.3 168.3 195.2C173.5 193.8 180.2 192.1 186.3 190.9C192.5 189.6 199.0 188.6 205.3 187.5Z"/><path d="M1411.7 187.5C1417.4 183.2 1422.3 177.3 1428.7 174.6C1435.4 171.7 1444.8 171.2 1451.5 171.0C1456.8 170.8 1460.9 171.5 1465.7 172.3C1470.9 173.2 1476.4 174.4 1481.7 176.4C1487.2 178.4 1492.7 181.2 1497.9 184.5C1503.5 187.9 1509.5 192.5 1514.3 196.8C1518.6 200.7 1522.3 204.9 1525.7 209.1C1528.8 212.8 1531.6 216.8 1534.0 220.5C1536.0 223.6 1537.6 226.1 1539.3 229.6C1541.4 234.0 1543.4 238.9 1544.9 245.1C1547.0 253.7 1548.9 267.2 1549.1 277.0C1549.2 285.3 1548.2 293.0 1546.9 299.9C1545.9 305.9 1544.6 310.6 1542.5 316.3C1540.0 323.2 1536.4 331.2 1532.4 338.1C1528.2 345.2 1523.5 352.0 1517.8 358.5C1511.7 365.4 1503.3 373.0 1496.7 378.0C1491.7 381.9 1487.4 384.4 1482.6 387.0C1478.0 389.4 1473.3 391.4 1468.5 393.2C1463.7 395.1 1458.7 396.8 1453.8 398.1C1449.1 399.3 1444.6 400.3 1439.7 401.0C1434.4 401.8 1428.4 402.4 1423.0 402.6C1418.0 402.9 1413.3 402.9 1408.5 402.6C1403.6 402.3 1398.8 401.7 1393.9 400.8C1388.8 399.9 1384.1 398.8 1378.6 397.3C1372.1 395.4 1364.5 392.7 1357.4 390.0C1349.9 387.2 1342.3 383.7 1334.8 380.6L1281.6 335.6C1289.8 341.5 1297.5 347.3 1306.1 353.3C1315.5 359.8 1326.4 367.6 1335.7 372.8C1343.3 377.2 1350.1 380.5 1357.4 383.2C1364.4 385.9 1372.0 388.0 1378.6 389.3C1384.1 390.4 1388.8 390.6 1393.9 391.0C1398.8 391.4 1403.6 391.5 1408.5 391.5C1413.4 391.5 1418.3 391.4 1423.0 390.9C1427.6 390.3 1432.1 389.4 1436.6 388.2C1441.0 386.9 1445.5 385.2 1449.7 383.3C1453.8 381.6 1457.8 379.5 1461.7 377.4C1465.5 375.2 1469.3 372.9 1472.9 370.4C1476.6 367.8 1480.0 365.5 1483.6 362.0C1488.2 357.6 1493.4 351.4 1497.4 345.4C1501.4 339.5 1504.9 332.9 1507.6 326.5C1510.2 320.5 1512.2 314.4 1513.5 308.3C1514.7 302.5 1515.0 296.6 1515.2 290.9C1515.3 285.4 1514.9 280.0 1514.3 274.5C1513.8 269.0 1513.0 263.4 1511.8 258.2C1510.7 253.1 1509.4 248.0 1507.5 243.5C1505.8 239.3 1503.6 235.6 1501.2 232.0C1498.8 228.5 1496.1 225.4 1493.0 222.2C1489.7 218.6 1485.5 214.7 1481.6 211.6C1478.0 208.7 1474.3 206.2 1470.6 204.0C1467.0 201.8 1463.3 199.8 1459.6 198.3C1456.0 196.9 1452.8 196.3 1448.7 195.2C1443.5 193.8 1436.8 192.1 1430.7 190.9C1424.5 189.6 1418.0 188.6 1411.7 187.5Z"/><path d="M60.0 432.0C64.7 433.6 69.4 435.4 74.2 436.8C79.2 438.2 84.1 438.4 89.5 440.4C96.1 442.8 104.3 446.9 110.3 451.4C116.1 455.6 121.2 461.1 125.2 466.3C128.7 470.9 131.2 475.5 133.6 480.4C135.9 485.4 138.0 491.3 139.3 496.3C140.3 500.4 141.1 504.3 141.1 508.0C141.2 511.1 140.8 514.1 139.9 516.9C139.1 519.6 137.3 521.8 136.0 524.3L136.0 524.3C134.5 522.2 132.8 520.1 131.5 517.9C130.2 515.7 129.5 513.4 128.3 511.0C126.8 508.2 125.4 505.2 123.4 501.9C120.6 497.7 117.0 492.2 112.9 488.0C108.6 483.6 103.5 479.4 98.1 476.0C92.6 472.7 84.8 469.6 80.4 468.0C77.8 467.0 76.6 466.6 74.0 466.1C70.3 465.4 64.7 465.4 60.0 465.0Z"/><path d="M1557.0 432.0C1552.3 433.6 1547.6 435.4 1542.8 436.8C1537.8 438.2 1532.9 438.4 1527.5 440.4C1520.9 442.8 1512.7 446.9 1506.7 451.4C1500.9 455.6 1495.8 461.1 1491.8 466.3C1488.3 470.9 1485.8 475.5 1483.4 480.4C1481.1 485.4 1479.0 491.3 1477.7 496.3C1476.7 500.4 1475.9 504.3 1475.9 508.0C1475.8 511.1 1476.2 514.1 1477.1 516.9C1477.9 519.6 1479.7 521.8 1481.0 524.3L1481.0 524.3C1482.5 522.2 1484.2 520.1 1485.5 517.9C1486.8 515.7 1487.5 513.4 1488.7 511.0C1490.2 508.2 1491.6 505.2 1493.6 501.9C1496.4 497.7 1500.0 492.2 1504.1 488.0C1508.4 483.6 1513.5 479.4 1518.9 476.0C1524.4 472.7 1532.2 469.6 1536.6 468.0C1539.2 467.0 1540.4 466.6 1543.0 466.1C1546.7 465.4 1552.3 465.4 1557.0 465.0Z"/><path d="M232.0 540.0C230.1 541.7 228.0 542.6 226.2 545.1C223.3 549.0 221.1 556.8 218.1 563.1C214.8 570.1 211.3 578.0 206.9 585.0C202.4 592.1 197.1 599.1 191.3 605.3C185.5 611.4 178.9 617.0 172.0 622.1C165.1 627.1 157.9 631.7 150.0 635.5C141.7 639.5 131.5 643.1 123.3 645.2C116.8 646.9 111.2 647.5 105.0 648.0C98.9 648.5 91.9 648.2 86.3 648.1C81.8 648.0 78.8 647.8 74.0 647.5C67.3 647.2 58.0 646.5 50.0 646.0L50.0 668.0C58.0 667.3 67.3 666.5 74.0 666.0C78.8 665.6 81.7 665.5 86.3 665.1C92.3 664.6 100.2 664.1 107.0 663.0C113.9 661.8 120.3 660.3 127.3 658.0C135.3 655.4 144.2 651.8 152.1 647.5C160.1 643.1 167.7 638.0 174.9 631.9C182.6 625.5 190.2 617.2 196.3 609.4C202.0 602.2 206.7 594.5 211.0 587.0C214.9 580.1 218.2 572.5 221.1 566.1C223.6 560.8 225.6 555.9 227.5 551.3C229.1 547.3 230.5 543.8 232.0 540.0Z"/><path d="M1385.0 540.0C1386.9 541.7 1389.0 542.6 1390.8 545.1C1393.7 549.0 1395.9 556.8 1398.9 563.1C1402.2 570.1 1405.7 578.0 1410.1 585.0C1414.6 592.1 1419.9 599.1 1425.7 605.3C1431.5 611.4 1438.1 617.0 1445.0 622.1C1451.9 627.1 1459.1 631.7 1467.0 635.5C1475.3 639.5 1485.5 643.1 1493.7 645.2C1500.2 646.9 1505.8 647.5 1512.0 648.0C1518.1 648.5 1525.1 648.2 1530.7 648.1C1535.2 648.0 1538.2 647.8 1543.0 647.5C1549.7 647.2 1559.0 646.5 1567.0 646.0L1567.0 668.0C1559.0 667.3 1549.7 666.5 1543.0 666.0C1538.2 665.6 1535.3 665.5 1530.7 665.1C1524.7 664.6 1516.8 664.1 1510.0 663.0C1503.1 661.8 1496.7 660.3 1489.7 658.0C1481.7 655.4 1472.8 651.8 1464.9 647.5C1456.9 643.1 1449.3 638.0 1442.1 631.9C1434.4 625.5 1426.8 617.2 1420.7 609.4C1415.0 602.2 1410.3 594.5 1406.0 587.0C1402.1 580.1 1398.8 572.5 1395.9 566.1C1393.4 560.8 1391.4 555.9 1389.5 551.3C1387.9 547.3 1386.5 543.8 1385.0 540.0Z"/></g><g fill="#878787"><path d="M449.8 704.4C447.6 706.0 445.9 707.9 443.2 709.2C439.5 710.9 434.7 711.9 429.4 712.7C422.2 713.6 413.0 714.0 404.0 713.4C393.9 712.7 382.3 711.0 371.7 708.3C360.8 705.5 349.4 701.3 339.4 696.8C330.3 692.7 322.1 688.0 314.0 682.9C306.0 677.9 298.4 672.6 291.2 666.6C283.8 660.6 276.6 654.2 270.3 646.9C263.7 639.4 257.7 630.3 252.6 621.8C247.8 613.8 243.9 605.4 240.4 597.4C237.2 590.0 234.4 583.1 232.2 575.5C229.9 567.7 228.1 556.7 227.1 551.3C226.5 548.5 226.2 547.6 225.9 545.0C225.4 540.6 224.9 533.8 224.8 527.4C224.7 519.7 224.9 510.3 225.9 502.0C226.9 494.0 228.7 486.4 230.7 478.7C232.6 470.9 234.9 463.4 237.7 455.6C240.6 447.2 244.1 438.4 248.2 430.3C252.3 422.1 257.0 414.5 262.3 406.5C268.2 397.9 274.7 389.0 282.3 380.5C290.7 371.1 301.5 360.8 311.0 353.0C319.2 346.2 326.4 341.1 335.6 335.6C346.2 329.3 359.6 323.0 371.6 318.0C383.2 313.2 394.7 309.3 406.4 305.9C417.9 302.6 429.4 300.0 441.0 298.0C452.5 296.0 464.4 294.6 475.7 293.8C486.5 293.1 497.9 292.9 507.5 293.5C515.3 293.9 522.0 295.1 528.9 296.2C535.5 297.2 541.7 298.4 548.1 299.7C554.5 301.1 561.0 302.5 567.4 304.1C573.8 305.7 580.2 307.5 586.6 309.4C593.0 311.3 599.5 313.4 605.9 315.6C612.3 317.7 618.7 319.9 625.1 322.3C631.8 324.8 638.8 327.3 645.3 330.3C651.6 333.2 657.7 336.3 663.5 339.8C669.3 343.3 674.6 347.2 680.1 351.1C685.6 355.0 690.6 358.6 696.4 363.2C703.5 368.9 712.4 376.2 719.5 382.8C726.2 388.9 732.1 394.9 737.9 401.3C743.7 407.8 749.2 414.6 754.2 421.4C759.2 428.0 763.7 434.8 768.0 441.7C772.2 448.5 776.1 455.5 779.6 462.5C783.0 469.4 785.9 476.3 788.8 483.3C791.7 490.2 794.6 497.2 797.2 504.0C799.6 510.5 802.1 516.3 803.9 523.3C805.8 531.2 806.9 540.0 807.6 549.2C808.5 559.8 808.1 571.9 808.4 583.3L808.4 583.3C807.0 571.9 806.0 560.1 804.2 549.2C802.5 538.9 800.7 528.0 798.1 519.7C796.1 513.3 793.7 508.7 791.1 503.1C788.4 497.4 784.8 491.7 782.0 485.7C779.0 479.5 777.1 472.7 773.8 466.2C770.3 459.5 765.8 452.7 761.4 446.2C756.9 439.7 752.2 433.3 747.1 427.3C742.0 421.4 737.0 416.2 731.0 410.5C724.1 404.0 715.8 397.0 707.9 390.8C700.4 384.9 692.0 378.8 684.8 374.0C678.8 370.1 673.4 366.8 668.0 363.9C663.2 361.2 658.9 359.2 654.1 356.9C648.8 354.4 642.6 351.5 637.4 349.5C633.1 347.7 629.7 346.8 625.1 345.3C619.4 343.6 612.3 341.5 605.9 339.7C599.5 338.0 593.0 336.4 586.6 334.9C580.2 333.4 573.8 332.1 567.4 331.0C561.0 329.9 554.5 328.9 548.1 328.2C541.7 327.4 535.5 326.9 528.9 326.4C521.9 326.0 515.8 325.2 507.5 325.5C495.5 326.0 477.7 328.1 464.2 330.8C451.9 333.1 440.9 336.2 429.5 340.0C417.8 343.9 406.1 348.5 394.9 354.0C383.4 359.6 371.1 367.0 361.2 373.5C353.0 378.9 346.3 383.9 339.5 389.9C332.8 395.8 326.6 402.4 320.9 409.4C315.0 416.5 309.5 424.4 304.7 432.5C299.9 440.6 295.5 449.3 292.0 457.9C288.6 466.2 286.0 474.8 283.9 483.3C281.8 491.6 280.2 499.9 279.3 508.5C278.3 517.5 277.7 526.8 278.2 536.2C278.8 546.0 280.5 556.9 282.8 566.2C284.9 574.5 287.4 581.7 290.8 589.4C294.6 597.8 299.5 607.1 304.8 614.7C309.8 621.8 315.5 627.9 321.3 633.7C327.0 639.4 332.9 644.3 339.4 649.4C346.5 655.0 354.6 660.8 362.5 665.7C370.1 670.3 377.8 674.5 385.7 678.1C393.4 681.7 401.7 684.3 409.3 687.3C416.3 690.1 422.8 692.6 429.5 695.4C436.3 698.2 443.0 701.4 449.8 704.4Z"/><path d="M1167.2 704.4C1169.4 706.0 1171.1 707.9 1173.8 709.2C1177.5 710.9 1182.3 711.9 1187.6 712.7C1194.8 713.6 1204.0 714.0 1213.0 713.4C1223.1 712.7 1234.7 711.0 1245.3 708.3C1256.2 705.5 1267.6 701.3 1277.6 696.8C1286.7 692.7 1294.9 688.0 1303.0 682.9C1311.0 677.9 1318.6 672.6 1325.8 666.6C1333.2 660.6 1340.4 654.2 1346.7 646.9C1353.3 639.4 1359.3 630.3 1364.4 621.8C1369.2 613.8 1373.1 605.4 1376.6 597.4C1379.8 590.0 1382.6 583.1 1384.8 575.5C1387.1 567.7 1388.9 556.7 1389.9 551.3C1390.5 548.5 1390.8 547.6 1391.1 545.0C1391.6 540.6 1392.1 533.8 1392.2 527.4C1392.3 519.7 1392.1 510.3 1391.1 502.0C1390.1 494.0 1388.3 486.4 1386.3 478.7C1384.4 470.9 1382.1 463.4 1379.3 455.6C1376.4 447.2 1372.9 438.4 1368.8 430.3C1364.7 422.1 1360.0 414.5 1354.7 406.5C1348.8 397.9 1342.3 389.0 1334.7 380.5C1326.3 371.1 1315.5 360.8 1306.0 353.0C1297.8 346.2 1290.6 341.1 1281.4 335.6C1270.8 329.3 1257.4 323.0 1245.4 318.0C1233.8 313.2 1222.3 309.3 1210.6 305.9C1199.1 302.6 1187.6 300.0 1176.0 298.0C1164.5 296.0 1152.6 294.6 1141.3 293.8C1130.5 293.1 1119.1 292.9 1109.5 293.5C1101.7 293.9 1095.0 295.1 1088.1 296.2C1081.5 297.2 1075.3 298.4 1068.9 299.7C1062.5 301.1 1056.0 302.5 1049.6 304.1C1043.2 305.7 1036.8 307.5 1030.4 309.4C1024.0 311.3 1017.5 313.4 1011.1 315.6C1004.7 317.7 998.3 319.9 991.9 322.3C985.2 324.8 978.2 327.3 971.7 330.3C965.4 333.2 959.3 336.3 953.5 339.8C947.7 343.3 942.4 347.2 936.9 351.1C931.4 355.0 926.4 358.6 920.6 363.2C913.5 368.9 904.6 376.2 897.5 382.8C890.8 388.9 884.9 394.9 879.1 401.3C873.3 407.8 867.8 414.6 862.8 421.4C857.8 428.0 853.3 434.8 849.0 441.7C844.8 448.5 840.9 455.5 837.4 462.5C834.0 469.4 831.1 476.3 828.2 483.3C825.3 490.2 822.4 497.2 819.8 504.0C817.4 510.5 814.9 516.3 813.1 523.3C811.2 531.2 810.1 540.0 809.4 549.2C808.5 559.8 808.9 571.9 808.6 583.3L808.6 583.3C810.0 571.9 811.0 560.1 812.8 549.2C814.5 538.9 816.3 528.0 818.9 519.7C820.9 513.3 823.3 508.7 825.9 503.1C828.6 497.4 832.2 491.7 835.0 485.7C838.0 479.5 839.9 472.7 843.2 466.2C846.7 459.5 851.2 452.7 855.6 446.2C860.1 439.7 864.8 433.3 869.9 427.3C875.0 421.4 880.0 416.2 886.0 410.5C892.9 404.0 901.2 397.0 909.1 390.8C916.6 384.9 925.0 378.8 932.2 374.0C938.2 370.1 943.6 366.8 949.0 363.9C953.8 361.2 958.1 359.2 962.9 356.9C968.2 354.4 974.4 351.5 979.6 349.5C983.9 347.7 987.3 346.8 991.9 345.3C997.6 343.6 1004.7 341.5 1011.1 339.7C1017.5 338.0 1024.0 336.4 1030.4 334.9C1036.8 333.4 1043.2 332.1 1049.6 331.0C1056.0 329.9 1062.5 328.9 1068.9 328.2C1075.3 327.4 1081.5 326.9 1088.1 326.4C1095.1 326.0 1101.2 325.2 1109.5 325.5C1121.5 326.0 1139.3 328.1 1152.8 330.8C1165.1 333.1 1176.1 336.2 1187.5 340.0C1199.2 343.9 1210.9 348.5 1222.1 354.0C1233.6 359.6 1245.9 367.0 1255.8 373.5C1264.0 378.9 1270.7 383.9 1277.5 389.9C1284.2 395.8 1290.4 402.4 1296.1 409.4C1302.0 416.5 1307.5 424.4 1312.3 432.5C1317.1 440.6 1321.5 449.3 1325.0 457.9C1328.4 466.2 1331.0 474.8 1333.1 483.3C1335.2 491.6 1336.8 499.9 1337.7 508.5C1338.7 517.5 1339.3 526.8 1338.8 536.2C1338.2 546.0 1336.5 556.9 1334.2 566.2C1332.1 574.5 1329.6 581.7 1326.2 589.4C1322.4 597.8 1317.5 607.1 1312.2 614.7C1307.2 621.8 1301.5 627.9 1295.7 633.7C1290.0 639.4 1284.1 644.3 1277.6 649.4C1270.5 655.0 1262.4 660.8 1254.5 665.7C1246.9 670.3 1239.2 674.5 1231.3 678.1C1223.6 681.7 1215.3 684.3 1207.7 687.3C1200.7 690.1 1194.2 692.6 1187.5 695.4C1180.7 698.2 1174.0 701.4 1167.2 704.4Z"/><path d="M774.3 466.0C768.4 459.8 762.8 453.0 756.5 447.4C750.4 441.9 743.7 436.7 737.2 432.6C731.4 428.8 725.9 426.1 719.5 423.3C712.4 420.2 704.4 417.2 696.4 415.1C688.1 412.9 679.2 411.2 670.5 410.7C661.5 410.2 652.3 410.8 643.2 412.0C634.0 413.4 624.8 415.1 615.5 418.7C605.0 422.6 592.2 429.4 583.6 435.4C576.8 440.3 572.0 445.3 567.0 450.9C561.9 456.6 557.2 462.8 553.2 469.5C549.0 476.6 545.4 485.3 542.6 492.5C540.2 498.6 538.5 504.6 537.0 510.0C535.8 514.4 534.8 518.2 534.2 522.3C533.5 526.3 533.2 530.4 533.2 534.4C533.1 538.4 533.5 542.3 534.0 546.3C534.5 550.4 535.2 554.5 536.3 558.5C537.4 562.5 538.6 566.0 540.4 570.2C542.7 575.8 546.0 582.7 549.7 588.7C553.6 594.8 558.2 601.1 563.4 606.4C568.6 611.8 574.7 617.0 580.9 620.9C586.8 624.6 592.9 627.6 599.4 629.6C605.8 631.7 613.5 632.9 619.3 633.1C623.9 633.3 627.7 632.8 631.6 631.9C635.4 631.0 638.9 629.0 642.5 627.5L642.5 627.5C636.1 623.9 629.8 620.6 623.3 616.6C616.2 612.2 608.2 607.6 601.8 602.3C595.7 597.4 589.8 591.8 585.4 586.1C581.5 581.0 578.7 575.9 576.3 570.1C573.6 563.7 571.5 556.5 570.3 549.3C569.1 541.7 568.7 532.8 569.5 525.5C570.1 519.2 571.8 513.8 573.7 508.0C575.6 502.0 578.1 495.9 580.9 490.3C583.6 484.7 586.5 479.2 590.2 474.1C594.0 468.9 598.3 464.0 603.4 459.5C608.9 454.6 615.8 450.0 622.5 446.3C629.1 442.6 635.9 439.4 643.4 437.1C651.5 434.7 659.9 432.9 669.4 432.6C680.9 432.2 696.7 434.4 707.9 436.8C716.7 438.7 724.0 441.3 731.2 444.4C737.8 447.2 743.8 450.5 749.5 454.3C755.3 458.1 760.5 462.2 765.6 467.2C771.2 472.6 776.1 479.7 781.4 486.0L786.0 480.0Z"/><path d="M842.7 466.0C848.6 459.8 854.2 453.0 860.5 447.4C866.6 441.9 873.3 436.7 879.8 432.6C885.6 428.8 891.1 426.1 897.5 423.3C904.6 420.2 912.6 417.2 920.6 415.1C928.9 412.9 937.8 411.2 946.5 410.7C955.5 410.2 964.7 410.8 973.8 412.0C983.0 413.4 992.2 415.1 1001.5 418.7C1012.0 422.6 1024.8 429.4 1033.4 435.4C1040.2 440.3 1045.0 445.3 1050.0 450.9C1055.1 456.6 1059.8 462.8 1063.8 469.5C1068.0 476.6 1071.6 485.3 1074.4 492.5C1076.8 498.6 1078.5 504.6 1080.0 510.0C1081.2 514.4 1082.2 518.2 1082.8 522.3C1083.5 526.3 1083.8 530.4 1083.8 534.4C1083.9 538.4 1083.5 542.3 1083.0 546.3C1082.5 550.4 1081.8 554.5 1080.7 558.5C1079.6 562.5 1078.4 566.0 1076.6 570.2C1074.3 575.8 1071.0 582.7 1067.3 588.7C1063.4 594.8 1058.8 601.1 1053.6 606.4C1048.4 611.8 1042.3 617.0 1036.1 620.9C1030.2 624.6 1024.1 627.6 1017.6 629.6C1011.2 631.7 1003.5 632.9 997.7 633.1C993.1 633.3 989.3 632.8 985.4 631.9C981.6 631.0 978.1 629.0 974.5 627.5L974.5 627.5C980.9 623.9 987.2 620.6 993.7 616.6C1000.8 612.2 1008.8 607.6 1015.2 602.3C1021.3 597.4 1027.2 591.8 1031.6 586.1C1035.5 581.0 1038.3 575.9 1040.7 570.1C1043.4 563.7 1045.5 556.5 1046.7 549.3C1047.9 541.7 1048.3 532.8 1047.5 525.5C1046.9 519.2 1045.2 513.8 1043.3 508.0C1041.4 502.0 1038.9 495.9 1036.1 490.3C1033.4 484.7 1030.5 479.2 1026.8 474.1C1023.0 468.9 1018.7 464.0 1013.6 459.5C1008.1 454.6 1001.2 450.0 994.5 446.3C987.9 442.6 981.1 439.4 973.6 437.1C965.5 434.7 957.1 432.9 947.6 432.6C936.1 432.2 920.3 434.4 909.1 436.8C900.3 438.7 893.0 441.3 885.8 444.4C879.2 447.2 873.2 450.5 867.5 454.3C861.7 458.1 856.5 462.2 851.4 467.2C845.8 472.6 840.9 479.7 835.6 486.0L831.0 480.0Z"/><path d="M205.3 187.5C199.6 183.2 194.7 177.3 188.3 174.6C181.6 171.7 172.2 171.2 165.5 171.0C160.2 170.8 156.1 171.5 151.3 172.3C146.1 173.2 140.6 174.4 135.3 176.4C129.8 178.4 124.3 181.2 119.1 184.5C113.5 187.9 107.5 192.5 102.7 196.8C98.4 200.7 94.7 204.9 91.3 209.1C88.2 212.8 85.4 216.8 83.0 220.5C81.0 223.6 79.4 226.1 77.7 229.6C75.6 234.0 73.6 238.9 72.1 245.1C70.0 253.7 68.1 267.2 67.9 277.0C67.8 285.3 68.8 293.0 70.1 299.9C71.1 305.9 72.4 310.6 74.5 316.3C77.0 323.2 80.6 331.2 84.6 338.1C88.8 345.2 93.5 352.0 99.2 358.5C105.3 365.4 113.7 373.0 120.3 378.0C125.3 381.9 129.6 384.4 134.4 387.0C139.0 389.4 143.7 391.4 148.5 393.2C153.3 395.1 158.3 396.8 163.2 398.1C167.9 399.3 172.4 400.3 177.3 401.0C182.6 401.8 188.6 402.4 194.0 402.6C199.0 402.9 203.7 402.9 208.5 402.6C213.4 402.3 218.2 401.7 223.1 400.8C228.2 399.9 232.9 398.8 238.4 397.3C244.9 395.4 252.5 392.7 259.6 390.0C267.1 387.2 274.7 383.7 282.2 380.6L335.4 335.6C327.2 341.5 319.5 347.3 310.9 353.3C301.5 359.8 290.6 367.6 281.3 372.8C273.7 377.2 266.9 380.5 259.6 383.2C252.6 385.9 245.0 388.0 238.4 389.3C232.9 390.4 228.2 390.6 223.1 391.0C218.2 391.4 213.4 391.5 208.5 391.5C203.6 391.5 198.7 391.4 194.0 390.9C189.4 390.3 184.9 389.4 180.4 388.2C176.0 386.9 171.5 385.2 167.3 383.3C163.2 381.6 159.2 379.5 155.3 377.4C151.5 375.2 147.7 372.9 144.1 370.4C140.4 367.8 137.0 365.5 133.4 362.0C128.8 357.6 123.6 351.4 119.6 345.4C115.6 339.5 112.1 332.9 109.4 326.5C106.8 320.5 104.8 314.4 103.5 308.3C102.3 302.5 102.0 296.6 101.8 290.9C101.7 285.4 102.1 280.0 102.7 274.5C103.2 269.0 104.0 263.4 105.2 258.2C106.3 253.1 107.6 248.0 109.5 243.5C111.2 239.3 113.4 235.6 115.8 232.0C118.2 228.5 120.9 225.4 124.0 222.2C127.3 218.6 131.5 214.7 135.4 211.6C139.0 208.7 142.7 206.2 146.4 204.0C150.0 201.8 153.7 199.8 157.4 198.3C161.0 196.9 164.2 196.3 168.3 195.2C173.5 193.8 180.2 192.1 186.3 190.9C192.5 189.6 199.0 188.6 205.3 187.5Z"/><path d="M1411.7 187.5C1417.4 183.2 1422.3 177.3 1428.7 174.6C1435.4 171.7 1444.8 171.2 1451.5 171.0C1456.8 170.8 1460.9 171.5 1465.7 172.3C1470.9 173.2 1476.4 174.4 1481.7 176.4C1487.2 178.4 1492.7 181.2 1497.9 184.5C1503.5 187.9 1509.5 192.5 1514.3 196.8C1518.6 200.7 1522.3 204.9 1525.7 209.1C1528.8 212.8 1531.6 216.8 1534.0 220.5C1536.0 223.6 1537.6 226.1 1539.3 229.6C1541.4 234.0 1543.4 238.9 1544.9 245.1C1547.0 253.7 1548.9 267.2 1549.1 277.0C1549.2 285.3 1548.2 293.0 1546.9 299.9C1545.9 305.9 1544.6 310.6 1542.5 316.3C1540.0 323.2 1536.4 331.2 1532.4 338.1C1528.2 345.2 1523.5 352.0 1517.8 358.5C1511.7 365.4 1503.3 373.0 1496.7 378.0C1491.7 381.9 1487.4 384.4 1482.6 387.0C1478.0 389.4 1473.3 391.4 1468.5 393.2C1463.7 395.1 1458.7 396.8 1453.8 398.1C1449.1 399.3 1444.6 400.3 1439.7 401.0C1434.4 401.8 1428.4 402.4 1423.0 402.6C1418.0 402.9 1413.3 402.9 1408.5 402.6C1403.6 402.3 1398.8 401.7 1393.9 400.8C1388.8 399.9 1384.1 398.8 1378.6 397.3C1372.1 395.4 1364.5 392.7 1357.4 390.0C1349.9 387.2 1342.3 383.7 1334.8 380.6L1281.6 335.6C1289.8 341.5 1297.5 347.3 1306.1 353.3C1315.5 359.8 1326.4 367.6 1335.7 372.8C1343.3 377.2 1350.1 380.5 1357.4 383.2C1364.4 385.9 1372.0 388.0 1378.6 389.3C1384.1 390.4 1388.8 390.6 1393.9 391.0C1398.8 391.4 1403.6 391.5 1408.5 391.5C1413.4 391.5 1418.3 391.4 1423.0 390.9C1427.6 390.3 1432.1 389.4 1436.6 388.2C1441.0 386.9 1445.5 385.2 1449.7 383.3C1453.8 381.6 1457.8 379.5 1461.7 377.4C1465.5 375.2 1469.3 372.9 1472.9 370.4C1476.6 367.8 1480.0 365.5 1483.6 362.0C1488.2 357.6 1493.4 351.4 1497.4 345.4C1501.4 339.5 1504.9 332.9 1507.6 326.5C1510.2 320.5 1512.2 314.4 1513.5 308.3C1514.7 302.5 1515.0 296.6 1515.2 290.9C1515.3 285.4 1514.9 280.0 1514.3 274.5C1513.8 269.0 1513.0 263.4 1511.8 258.2C1510.7 253.1 1509.4 248.0 1507.5 243.5C1505.8 239.3 1503.6 235.6 1501.2 232.0C1498.8 228.5 1496.1 225.4 1493.0 222.2C1489.7 218.6 1485.5 214.7 1481.6 211.6C1478.0 208.7 1474.3 206.2 1470.6 204.0C1467.0 201.8 1463.3 199.8 1459.6 198.3C1456.0 196.9 1452.8 196.3 1448.7 195.2C1443.5 193.8 1436.8 192.1 1430.7 190.9C1424.5 189.6 1418.0 188.6 1411.7 187.5Z"/><path d="M60.0 432.0C64.7 433.6 69.4 435.4 74.2 436.8C79.2 438.2 84.1 438.4 89.5 440.4C96.1 442.8 104.3 446.9 110.3 451.4C116.1 455.6 121.2 461.1 125.2 466.3C128.7 470.9 131.2 475.5 133.6 480.4C135.9 485.4 138.0 491.3 139.3 496.3C140.3 500.4 141.1 504.3 141.1 508.0C141.2 511.1 140.8 514.1 139.9 516.9C139.1 519.6 137.3 521.8 136.0 524.3L136.0 524.3C134.5 522.2 132.8 520.1 131.5 517.9C130.2 515.7 129.5 513.4 128.3 511.0C126.8 508.2 125.4 505.2 123.4 501.9C120.6 497.7 117.0 492.2 112.9 488.0C108.6 483.6 103.5 479.4 98.1 476.0C92.6 472.7 84.8 469.6 80.4 468.0C77.8 467.0 76.6 466.6 74.0 466.1C70.3 465.4 64.7 465.4 60.0 465.0Z"/><path d="M1557.0 432.0C1552.3 433.6 1547.6 435.4 1542.8 436.8C1537.8 438.2 1532.9 438.4 1527.5 440.4C1520.9 442.8 1512.7 446.9 1506.7 451.4C1500.9 455.6 1495.8 461.1 1491.8 466.3C1488.3 470.9 1485.8 475.5 1483.4 480.4C1481.1 485.4 1479.0 491.3 1477.7 496.3C1476.7 500.4 1475.9 504.3 1475.9 508.0C1475.8 511.1 1476.2 514.1 1477.1 516.9C1477.9 519.6 1479.7 521.8 1481.0 524.3L1481.0 524.3C1482.5 522.2 1484.2 520.1 1485.5 517.9C1486.8 515.7 1487.5 513.4 1488.7 511.0C1490.2 508.2 1491.6 505.2 1493.6 501.9C1496.4 497.7 1500.0 492.2 1504.1 488.0C1508.4 483.6 1513.5 479.4 1518.9 476.0C1524.4 472.7 1532.2 469.6 1536.6 468.0C1539.2 467.0 1540.4 466.6 1543.0 466.1C1546.7 465.4 1552.3 465.4 1557.0 465.0Z"/><path d="M232.0 540.0C230.1 541.7 228.0 542.6 226.2 545.1C223.3 549.0 221.1 556.8 218.1 563.1C214.8 570.1 211.3 578.0 206.9 585.0C202.4 592.1 197.1 599.1 191.3 605.3C185.5 611.4 178.9 617.0 172.0 622.1C165.1 627.1 157.9 631.7 150.0 635.5C141.7 639.5 131.5 643.1 123.3 645.2C116.8 646.9 111.2 647.5 105.0 648.0C98.9 648.5 91.9 648.2 86.3 648.1C81.8 648.0 78.8 647.8 74.0 647.5C67.3 647.2 58.0 646.5 50.0 646.0L50.0 668.0C58.0 667.3 67.3 666.5 74.0 666.0C78.8 665.6 81.7 665.5 86.3 665.1C92.3 664.6 100.2 664.1 107.0 663.0C113.9 661.8 120.3 660.3 127.3 658.0C135.3 655.4 144.2 651.8 152.1 647.5C160.1 643.1 167.7 638.0 174.9 631.9C182.6 625.5 190.2 617.2 196.3 609.4C202.0 602.2 206.7 594.5 211.0 587.0C214.9 580.1 218.2 572.5 221.1 566.1C223.6 560.8 225.6 555.9 227.5 551.3C229.1 547.3 230.5 543.8 232.0 540.0Z"/><path d="M1385.0 540.0C1386.9 541.7 1389.0 542.6 1390.8 545.1C1393.7 549.0 1395.9 556.8 1398.9 563.1C1402.2 570.1 1405.7 578.0 1410.1 585.0C1414.6 592.1 1419.9 599.1 1425.7 605.3C1431.5 611.4 1438.1 617.0 1445.0 622.1C1451.9 627.1 1459.1 631.7 1467.0 635.5C1475.3 639.5 1485.5 643.1 1493.7 645.2C1500.2 646.9 1505.8 647.5 1512.0 648.0C1518.1 648.5 1525.1 648.2 1530.7 648.1C1535.2 648.0 1538.2 647.8 1543.0 647.5C1549.7 647.2 1559.0 646.5 1567.0 646.0L1567.0 668.0C1559.0 667.3 1549.7 666.5 1543.0 666.0C1538.2 665.6 1535.3 665.5 1530.7 665.1C1524.7 664.6 1516.8 664.1 1510.0 663.0C1503.1 661.8 1496.7 660.3 1489.7 658.0C1481.7 655.4 1472.8 651.8 1464.9 647.5C1456.9 643.1 1449.3 638.0 1442.1 631.9C1434.4 625.5 1426.8 617.2 1420.7 609.4C1415.0 602.2 1410.3 594.5 1406.0 587.0C1402.1 580.1 1398.8 572.5 1395.9 566.1C1393.4 560.8 1391.4 555.9 1389.5 551.3C1387.9 547.3 1386.5 543.8 1385.0 540.0Z"/></g><path d="M72 314h4v4h-4zM76 228h4v4h-4zM78 466h4v4h-4zM84 646h4v4h-4zM84 663h4v4h-4zM88 438h4v4h-4zM101 306h4v4h-4zM107 241h4v4h-4zM108 450h4v4h-4zM118 376h4v4h-4zM121 500h4v4h-4zM121 643h4v4h-4zM123 464h4v4h-4zM125 656h4v4h-4zM126 509h4v4h-4zM129 516h4v4h-4zM131 360h4v4h-4zM132 385h4v4h-4zM133 174h4v4h-4zM134 522h4v4h-4zM137 494h4v4h-4zM138 515h4v4h-4zM139 506h4v4h-4zM142 368h4v4h-4zM144 202h4v4h-4zM146 391h4v4h-4zM149 170h4v4h-4zM153 375h4v4h-4zM155 196h4v4h-4zM161 396h4v4h-4zM163 169h4v4h-4zM165 381h4v4h-4zM166 193h4v4h-4zM175 399h4v4h-4zM178 386h4v4h-4zM184 189h4v4h-4zM186 172h4v4h-4zM189 603h4v4h-4zM194 607h4v4h-4zM203 186h4v4h-4zM223 525h4v4h-4zM224 500h4v4h-4zM224 543h4v4h-4zM225 549h4v4h-4zM236 387h4v4h-4zM236 395h4v4h-4zM238 595h4v4h-4zM260 405h4v4h-4zM277 506h4v4h-4zM280 378h4v4h-4zM289 664h4v4h-4zM309 351h4v4h-4zM319 632h4v4h-4zM334 334h4v4h-4zM359 372h4v4h-4zM402 711h4v4h-4zM407 685h4v4h-4zM448 702h4v4h-4zM506 291h4v4h-4zM506 323h4v4h-4zM531 532h4v4h-4zM532 520h4v4h-4zM532 544h4v4h-4zM534 556h4v4h-4zM538 568h4v4h-4zM561 604h4v4h-4zM567 523h4v4h-4zM582 433h4v4h-4zM583 584h4v4h-4zM601 457h4v4h-4zM617 631h4v4h-4zM622 614h4v4h-4zM636 347h4v4h-4zM640 626h4v4h-4zM643 328h4v4h-4zM667 430h4v4h-4zM668 408h4v4h-4zM729 442h4v4h-4zM735 430h4v4h-4zM745 425h4v4h-4zM752 419h4v4h-4zM772 464h4v4h-4zM779 484h4v4h-4zM797 518h4v4h-4zM802 521h4v4h-4zM806 581h4v4h-4zM807 581h4v4h-4zM811 521h4v4h-4zM816 518h4v4h-4zM834 484h4v4h-4zM841 464h4v4h-4zM861 419h4v4h-4zM868 425h4v4h-4zM878 430h4v4h-4zM884 442h4v4h-4zM944 408h4v4h-4zM946 430h4v4h-4zM970 328h4v4h-4zM972 626h4v4h-4zM978 347h4v4h-4zM992 614h4v4h-4zM996 631h4v4h-4zM1012 457h4v4h-4zM1030 584h4v4h-4zM1032 433h4v4h-4zM1046 523h4v4h-4zM1052 604h4v4h-4zM1075 568h4v4h-4zM1079 556h4v4h-4zM1081 520h4v4h-4zM1081 544h4v4h-4zM1082 532h4v4h-4zM1108 291h4v4h-4zM1108 323h4v4h-4zM1165 702h4v4h-4zM1206 685h4v4h-4zM1211 711h4v4h-4zM1254 372h4v4h-4zM1280 334h4v4h-4zM1294 632h4v4h-4zM1304 351h4v4h-4zM1324 664h4v4h-4zM1333 378h4v4h-4zM1336 506h4v4h-4zM1353 405h4v4h-4zM1374 595h4v4h-4zM1377 387h4v4h-4zM1377 395h4v4h-4zM1388 549h4v4h-4zM1389 500h4v4h-4zM1389 543h4v4h-4zM1390 525h4v4h-4zM1410 186h4v4h-4zM1419 607h4v4h-4zM1424 603h4v4h-4zM1426 172h4v4h-4zM1429 189h4v4h-4zM1435 386h4v4h-4zM1438 399h4v4h-4zM1447 193h4v4h-4zM1448 381h4v4h-4zM1450 169h4v4h-4zM1452 396h4v4h-4zM1458 196h4v4h-4zM1460 375h4v4h-4zM1464 170h4v4h-4zM1466 391h4v4h-4zM1468 202h4v4h-4zM1471 368h4v4h-4zM1474 506h4v4h-4zM1475 515h4v4h-4zM1476 494h4v4h-4zM1479 522h4v4h-4zM1480 174h4v4h-4zM1481 385h4v4h-4zM1482 360h4v4h-4zM1484 516h4v4h-4zM1487 509h4v4h-4zM1488 656h4v4h-4zM1490 464h4v4h-4zM1492 500h4v4h-4zM1492 643h4v4h-4zM1495 376h4v4h-4zM1505 450h4v4h-4zM1506 241h4v4h-4zM1512 306h4v4h-4zM1526 438h4v4h-4zM1529 646h4v4h-4zM1529 663h4v4h-4zM1535 466h4v4h-4zM1537 228h4v4h-4zM1540 314h4v4h-4z" fill="#0a7b52"/></svg><div class="a" style="left:72px;top:65px;width:2px;height:974px;background:#2e2e2e;"></div><div class="a" style="left:72px;top:1023px;width:1545px;height:16px;background:#4a4a4a;"></div><div class="a" style="left:72px;top:1023px;width:1545px;height:1px;background:#333;"></div><svg class="a" style="left:81px;top:1026px;" width="20" height="11" viewBox="0 0 20 11"><rect x="0.500" y="0.500" width="19" height="10" rx="1.500" fill="none" stroke="#3a3a3a"/><circle cx="5.500" cy="5.500" r="2.600" fill="none" stroke="#d2d2d2" stroke-width="1.600" stroke-dasharray="1.500 1"/><path d="M11 4H16V8M14 2.500L11 4L14 5.500" fill="none" stroke="#d2d2d2" stroke-width="1.100"/></svg><svg class="a" style="left:110px;top:1025px;" width="14" height="12" viewBox="0 0 14 12"><path d="M5 2.500H1.500V10.500H10.500V8" fill="none" stroke="#d2d2d2" stroke-width="1.300"/><path d="M5 7Q5 3 10 3V0.500L13.500 4L10 7.500V5Q7 5 5 7Z" fill="#d2d2d2"/></svg><div class="a" style="left:136px;top:1024px;width:41px;height:15px;background:#a3a3a3;border:1px solid #2e2e2e"></div><span class="t" style="left:138.5px;top:1027.5px;font-size:10px;line-height:10px;color:#111;letter-spacing:-0.43px;">1600%</span><div class="a" style="left:177px;top:1024px;width:15px;height:15px;background:#535353;border:1px solid #303030"></div><svg class="a" style="left:181px;top:1030px;" width="7" height="4" viewBox="0 0 7 4"><path d="M0 0H7 L3.5 4Z" fill="#d8d8d8"/></svg><svg class="a" style="left:202px;top:1027px;" width="9" height="9" viewBox="0 0 9 9"><path d="M1 0V9" stroke="#767676" stroke-width="1.400"/><path d="M8.500 0V9L2.500 4.500Z" fill="#767676"/></svg><svg class="a" style="left:220px;top:1027px;" width="6" height="9" viewBox="0 0 6 9"><path d="M6 0V9 L0 4.5Z" fill="#767676"/></svg><div class="a" style="left:236px;top:1024px;width:42px;height:15px;background:#a3a3a3;border:1px solid #2e2e2e"></div><span class="t" style="left:239.0px;top:1027.5px;font-size:10px;line-height:10px;color:#111;">1</span><div class="a" style="left:278px;top:1024px;width:15px;height:15px;background:#535353;border:1px solid #303030"></div><svg class="a" style="left:282px;top:1030px;" width="7" height="4" viewBox="0 0 7 4"><path d="M0 0H7 L3.5 4Z" fill="#d8d8d8"/></svg><svg class="a" style="left:302px;top:1027px;" width="6" height="9" viewBox="0 0 6 9"><path d="M0 0V9 L6 4.5Z" fill="#767676"/></svg><svg class="a" style="left:318px;top:1027px;" width="9" height="9" viewBox="0 0 9 9"><path d="M8 0V9" stroke="#767676" stroke-width="1.400"/><path d="M0.500 0V9L6.500 4.500Z" fill="#767676"/></svg><div class="a" style="left:335px;top:1024px;width:1px;height:15px;background:#333;"></div><span class="t" style="left:422.3px;top:1027.2px;font-size:10px;line-height:10px;color:#dedede;letter-spacing:-0.29px;">Zoom</span><svg class="a" style="left:541px;top:1027px;" width="6" height="9" viewBox="0 0 6 9"><path d="M0 0V9 L6 4.5Z" fill="#e8e8e8"/></svg><div class="a" style="left:552px;top:1024px;width:1047px;height:15px;background:#373737;border-left:1px solid #2a2a2a"></div><svg class="a" style="left:559px;top:1027px;" width="6" height="9" viewBox="0 0 6 9"><path d="M6 0V9 L0 4.5Z" fill="#e8e8e8"/></svg><svg class="a" style="left:1587px;top:1027px;" width="6" height="9" viewBox="0 0 6 9"><path d="M0 0V9 L6 4.5Z" fill="#e8e8e8"/></svg><div class="a" style="left:1069px;top:1024px;width:15px;height:15px;background:#9a9a9a;"></div><div class="a" style="left:1599px;top:697px;width:17px;height:326px;background:#373737;border-left:1px solid #2a2a2a"></div><svg class="a" style="left:1603px;top:1011px;" width="9" height="5" viewBox="0 0 9 5"><path d="M0 0H9 L4.5 5Z" fill="#e8e8e8"/></svg><div class="a" style="left:1599px;top:1023px;width:17px;height:16px;background:#474747;border:1px solid #333"></div><div class="a" style="left:1384px;top:75px;width:234px;height:624px;background:rgba(0,0,0,0.25);"></div><div class="a" style="left:1385px;top:76px;width:232px;height:621px;background:#4a4a4a;border:1px solid #2c2c2c"></div><div class="a" style="left:1386px;top:77px;width:230px;height:18px;background:#363636;"></div><div class="a" style="left:1385px;top:74.5px;width:232px;height:3.5px;background:#1e1e1e;"></div><div class="a" style="left:1379px;top:85px;width:6px;height:612px;background:transparent;background:linear-gradient(90deg,rgba(0,0,0,0),rgba(0,0,0,0.130))"></div><div class="a" style="left:1386px;top:77px;width:48px;height:18px;background:#4a4a4a;border-top:1px solid #606060;border-right:1px solid #2a2a2a"></div><span class="t" style="left:1393.5px;top:82.0px;font-size:9.5px;line-height:9.5px;color:#e6e6e6;letter-spacing:-0.30px;font-weight:bold;">Ebenen</span><svg class="a" style="left:1576px;top:83.5px;" width="8" height="6" viewBox="0 0 8 6"><path d="M0 0V6L3.500 3ZM4.500 0V6L8 3Z" fill="#cfcfcf"/></svg><div class="a" style="left:1591px;top:81px;width:1px;height:11px;background:#555;"></div><div class="a" style="left:1593px;top:81px;width:1px;height:11px;background:#555;"></div><svg class="a" style="left:1597px;top:82px;" width="16" height="9" viewBox="0 0 16 9"><path d="M0 1.500H5L2.500 4.500Z" fill="#cfcfcf"/><path d="M6 1H15M6 3.500H15M6 6H15M6 8.500H15" stroke="#cfcfcf" stroke-width="1"/></svg><div class="a" style="left:1391px;top:101.5px;width:219.5px;height:568px;background:#4a4a4a;border:1px solid #333"></div><div class="a" style="left:1392px;top:102px;width:217.5px;height:21px;background:#586276;border-bottom:1px solid #383838"></div><div class="a" style="left:1412px;top:102px;width:1px;height:21px;background:#3a3a3a;"></div><div class="a" style="left:1433px;top:102px;width:1px;height:21px;background:#3a3a3a;"></div><div class="a" style="left:1575px;top:102px;width:1px;height:21px;background:#3a3a3a;"></div><div class="a" style="left:1434.5px;top:102px;width:4px;height:20px;background:#1a9254;"></div><svg class="a" style="left:1577.4px;top:104.3px;" width="16" height="16" viewBox="0 0 16 16"><circle cx="8" cy="8" r="4.200" fill="none" stroke="#d0d0d0" stroke-width="1.100"/></svg><div class="a" style="left:1596px;top:108.5px;width:8px;height:8px;background:#17894f;border:1px solid #1a1a1a"></div><svg class="a" style="left:1395px;top:106.7px" width="12.5" height="8.03571" viewBox="0 0 14 9"><path d="M0.600 4.500Q7 -2.300 13.400 4.500Q7 11.300 0.600 4.500Z" fill="none" stroke="#d6d6d6" stroke-width="1.350"/><circle cx="7" cy="4.400" r="2.900" fill="#242424"/><circle cx="8" cy="3.300" r="0.900" fill="#d6d6d6"/></svg><div class="a" style="left:1392px;top:123px;width:217.5px;height:21px;background:#4f4f4f;border-bottom:1px solid #383838"></div><div class="a" style="left:1412px;top:123px;width:1px;height:21px;background:#3a3a3a;"></div><div class="a" style="left:1433px;top:123px;width:1px;height:21px;background:#3a3a3a;"></div><div class="a" style="left:1575px;top:123px;width:1px;height:21px;background:#3a3a3a;"></div><div class="a" style="left:1434.5px;top:123px;width:4px;height:20px;background:#1a9254;"></div><svg class="a" style="left:1577.4px;top:125.3px;" width="16" height="16" viewBox="0 0 16 16"><circle cx="8" cy="8" r="6.300" fill="none" stroke="#d0d0d0" stroke-width="1"/><circle cx="8" cy="8" r="3.800" fill="none" stroke="#d0d0d0" stroke-width="1.200"/></svg><div class="a" style="left:1596px;top:129.5px;width:8px;height:8px;background:#17894f;border:1px solid #1a1a1a"></div><svg class="a" style="left:1395px;top:127.7px" width="12.5" height="8.03571" viewBox="0 0 14 9"><path d="M0.600 4.500Q7 -2.300 13.400 4.500Q7 11.300 0.600 4.500Z" fill="none" stroke="#d6d6d6" stroke-width="1.350"/><circle cx="7" cy="4.400" r="2.900" fill="#242424"/><circle cx="8" cy="3.300" r="0.900" fill="#d6d6d6"/></svg><div class="a" style="left:1392px;top:144px;width:217.5px;height:21px;background:#4f4f4f;border-bottom:1px solid #383838"></div><div class="a" style="left:1412px;top:144px;width:1px;height:21px;background:#3a3a3a;"></div><div class="a" style="left:1433px;top:144px;width:1px;height:21px;background:#3a3a3a;"></div><div class="a" style="left:1575px;top:144px;width:1px;height:21px;background:#3a3a3a;"></div><div class="a" style="left:1434.5px;top:144px;width:4px;height:20px;background:#1a9254;"></div><svg class="a" style="left:1577.4px;top:146.3px;" width="16" height="16" viewBox="0 0 16 16"><circle cx="8" cy="8" r="6.300" fill="none" stroke="#d0d0d0" stroke-width="1"/><circle cx="8" cy="8" r="3.800" fill="none" stroke="#d0d0d0" stroke-width="1.200"/></svg><div class="a" style="left:1596px;top:150.5px;width:8px;height:8px;background:#17894f;border:1px solid #1a1a1a"></div><svg class="a" style="left:1395px;top:148.7px" width="12.5" height="8.03571" viewBox="0 0 14 9"><path d="M0.600 4.500Q7 -2.300 13.400 4.500Q7 11.300 0.600 4.500Z" fill="none" stroke="#d6d6d6" stroke-width="1.350"/><circle cx="7" cy="4.400" r="2.900" fill="#242424"/><circle cx="8" cy="3.300" r="0.900" fill="#d6d6d6"/></svg><div class="a" style="left:1392px;top:165px;width:217.5px;height:21px;background:#464646;border-bottom:1px solid #383838"></div><div class="a" style="left:1412px;top:165px;width:1px;height:21px;background:#3a3a3a;"></div><div class="a" style="left:1433px;top:165px;width:1px;height:21px;background:#3a3a3a;"></div><div class="a" style="left:1575px;top:165px;width:1px;height:21px;background:#3a3a3a;"></div><div class="a" style="left:1434.5px;top:165px;width:4px;height:20px;background:#e8641e;"></div><svg class="a" style="left:1577.4px;top:167.3px;" width="16" height="16" viewBox="0 0 16 16"><circle cx="8" cy="8" r="4.200" fill="none" stroke="#d0d0d0" stroke-width="1.100"/></svg><svg class="a" style="left:1418.5px;top:170px;" width="9" height="10" viewBox="0 0 9 10"><path d="M2 4.500V3A2.500 2.500 0 0 1 7 3V4.500" fill="none" stroke="#c4c4c4" stroke-width="1.300"/><rect x="0.500" y="4.500" width="8" height="5.500" fill="#c4c4c4"/><rect x="3.800" y="6" width="1.400" height="2.500" fill="#444"/></svg><div class="a" style="left:1392px;top:186px;width:217.5px;height:21px;background:#464646;border-bottom:1px solid #383838"></div><div class="a" style="left:1412px;top:186px;width:1px;height:21px;background:#3a3a3a;"></div><div class="a" style="left:1433px;top:186px;width:1px;height:21px;background:#3a3a3a;"></div><div class="a" style="left:1575px;top:186px;width:1px;height:21px;background:#3a3a3a;"></div><div class="a" style="left:1434.5px;top:186px;width:4px;height:20px;background:#e8641e;"></div><svg class="a" style="left:1577.4px;top:188.3px;" width="16" height="16" viewBox="0 0 16 16"><circle cx="8" cy="8" r="4.200" fill="none" stroke="#d0d0d0" stroke-width="1.100"/></svg><svg class="a" style="left:1418.5px;top:191px;" width="9" height="10" viewBox="0 0 9 10"><path d="M2 4.500V3A2.500 2.500 0 0 1 7 3V4.500" fill="none" stroke="#c4c4c4" stroke-width="1.300"/><rect x="0.500" y="4.500" width="8" height="5.500" fill="#c4c4c4"/><rect x="3.800" y="6" width="1.400" height="2.500" fill="#444"/></svg><svg class="a" style="left:1604.5px;top:102px;" width="5" height="5" viewBox="0 0 5 5"><path d="M0 0H5V5Z" fill="#e8e8e8"/></svg><svg class="a" style="left:1444.5px;top:109.5px;" width="8" height="6" viewBox="0 0 8 6"><path d="M0 0H8 L4 6Z" fill="#e0e0e0"/></svg><svg class="a" style="left:1445px;top:170.5px;" width="6" height="9" viewBox="0 0 6 9"><path d="M0 0V9 L6 4.5Z" fill="#e0e0e0"/></svg><svg class="a" style="left:1445px;top:191.5px;" width="6" height="9" viewBox="0 0 6 9"><path d="M0 0V9 L6 4.5Z" fill="#e0e0e0"/></svg><div class="a" style="left:1461.5px;top:103.8px;width:17px;height:17px;background:#fff;border:1px solid #111"></div><svg class="a" style="left:1461.5px;top:103.8px;" width="17" height="17" viewBox="0 0 17 17"><path d="M2 8.500Q4 6 5.500 8.500Q7 6 8.500 9Q10 6 11.500 8.500Q13 6 15 8.500M3 10Q5 11 6 9.500M11 9.500Q12 11 14 10" fill="none" stroke="#888" stroke-width="0.800"/></svg><div class="a" style="left:1481.5px;top:124.8px;width:17px;height:17px;background:#fff;border:1px solid #111"></div><svg class="a" style="left:1481.5px;top:124.8px;" width="17" height="17" viewBox="0 0 17 17"><path d="M2 10Q4 6 7 8Q8 11 5 12M8 9Q11 5 14 8Q14 11 12 12M12 5Q14 3 15 5" fill="none" stroke="#777" stroke-width="0.900"/></svg><div class="a" style="left:1481.5px;top:145.8px;width:17px;height:17px;background:#fff;border:1px solid #111"></div><svg class="a" style="left:1481.5px;top:145.8px;" width="17" height="17" viewBox="0 0 17 17"><path d="M3 5Q4 3 6 4M2 11Q5 7 8 10Q8 13 6 13M8 10Q11 7 14 10Q14 12 12 13M4 8Q3 9 4 10" fill="none" stroke="#777" stroke-width="0.900"/></svg><div class="a" style="left:1461.5px;top:166.8px;width:17px;height:17px;background:#fff;border:1px solid #111"></div><svg class="a" style="left:1461.5px;top:166.8px;" width="17" height="17" viewBox="0 0 17 17"><rect x="4" y="2.500" width="9" height="12" fill="none" stroke="#c8a070" stroke-width="1.300"/><rect x="5" y="2" width="7" height="1.500" fill="#7a4a2a"/><rect x="5" y="13.500" width="7" height="1.500" fill="#7a4a2a"/><rect x="9" y="7" width="2" height="2" fill="#8aa0c0"/></svg><div class="a" style="left:1461.5px;top:187.8px;width:17px;height:17px;background:#fff;border:1px solid #111"></div><svg class="a" style="left:1461.5px;top:187.8px;" width="17" height="17" viewBox="0 0 17 17"><rect x="4" y="2.500" width="9" height="12" fill="none" stroke="#c8a070" stroke-width="1.300"/><rect x="5" y="2" width="7" height="1.500" fill="#7a4a2a"/><rect x="5" y="13.500" width="7" height="1.500" fill="#7a4a2a"/><rect x="9" y="7" width="2" height="2" fill="#8aa0c0"/></svg><span class="t" style="left:1484.0px;top:106.5px;font-size:10px;line-height:10px;color:#eeeeee;letter-spacing:-0.05px;">Vorderseite</span><span class="t" style="left:1505.0px;top:127.5px;font-size:10px;line-height:10px;color:#eeeeee;letter-spacing:0.02px;">&lt;Pfad&gt;</span><span class="t" style="left:1505.0px;top:148.5px;font-size:10px;line-height:10px;color:#eeeeee;letter-spacing:0.02px;">&lt;Pfad&gt;</span><span class="t" style="left:1484.0px;top:169.5px;font-size:10px;line-height:10px;color:#eeeeee;letter-spacing:-0.08px;">Vorlage Vo...</span><span class="t" style="left:1484.0px;top:190.5px;font-size:10px;line-height:10px;color:#eeeeee;letter-spacing:-0.10px;">Vorlage Rü...</span><span class="t" style="left:1391.0px;top:674.0px;font-size:9.5px;line-height:9.5px;color:#e0e0e0;letter-spacing:0.09px;">3 Ebenen</span><svg class="a" style="left:1473px;top:673px;" width="13" height="13" viewBox="0 0 13 13"><circle cx="8" cy="5" r="3.800" fill="none" stroke="#d2d2d2" stroke-width="1.300"/><path d="M5.500 7.500L1 12" stroke="#d2d2d2" stroke-width="1.500"/></svg><svg class="a" style="left:1498.5px;top:674px;" width="12" height="12" viewBox="0 0 12 12"><rect x="0.500" y="0.500" width="7" height="7" fill="#4a4a4a" stroke="#d2d2d2" stroke-width="1.300"/><rect x="4.500" y="4.500" width="6.500" height="6.500" fill="#6a6a6a" stroke="#9a9a9a"/></svg><svg class="a" style="left:1524px;top:673px;" width="15" height="12" viewBox="0 0 15 12"><path d="M5 2H15V11H9L5 7Z" fill="#d2d2d2"/><path d="M0.500 0.500V3.500H4M2.500 2L4.500 3.500L2.500 5.500" fill="none" stroke="#d2d2d2" stroke-width="1.200"/></svg><svg class="a" style="left:1551px;top:674px;" width="12" height="12" viewBox="0 0 12 12"><path d="M1 1H11V11H5L1 7Z" fill="#c8c8c8"/><path d="M1 7H5V11Z" fill="#4b4b4b" stroke="#c8c8c8" stroke-width="0.8"/></svg><svg class="a" style="left:1577px;top:673px;" width="12" height="13" viewBox="0 0 12 13"><path d="M0.500 3.500H11.500M4 3V1.500H8V3" fill="none" stroke="#c8c8c8" stroke-width="1.2"/><path d="M1.500 4.500H10.500L9.500 12.500H2.500Z" fill="none" stroke="#c8c8c8" stroke-width="1.1"/><path d="M4.300 5.500V11.500M6 5.500V11.500M7.700 5.500V11.500" stroke="#c8c8c8" stroke-width="0.9"/></svg><div class="a" style="left:1386px;top:689.5px;width:230px;height:1px;background:#2c2c2c;"></div><div class="a" style="left:1491px;top:692px;width:20px;height:4px;background:transparent;background:repeating-linear-gradient(90deg,#1c1c1c 0 1px,transparent 1px 2px)"></div><svg class="a" style="left:1604px;top:678px;" width="10" height="10" viewBox="0 0 10 10"><path d="M8 0h1v1h-1zM6 2h1v1h-1zM8 2h1v1h-1zM4 4h1v1h-1zM6 4h1v1h-1zM8 4h1v1h-1zM2 6h1v1h-1zM4 6h1v1h-1zM6 6h1v1h-1zM8 6h1v1h-1zM0 8h1v1h-1zM2 8h1v1h-1zM4 8h1v1h-1zM6 8h1v1h-1zM8 8h1v1h-1z" fill="#262626"/></svg><div class="a" style="left:1617px;top:65px;width:41px;height:974px;background:#474747;border-left:1px solid #2c2c2c;border-right:2px solid #2c2c2c"></div><div class="a" style="left:1617px;top:65px;width:39px;height:12px;background:#2f2f2f;"></div><svg class="a" style="left:1644px;top:68px;" width="8" height="6" viewBox="0 0 8 6"><path d="M3.500 0V6L0 3ZM8 0V6L4.500 3Z" fill="#cfcfcf"/></svg><div class="a" style="left:1627px;top:80px;width:20px;height:4px;background:transparent;background:repeating-linear-gradient(90deg,#1c1c1c 0 1px,transparent 1px 2px)"></div><div class="a" style="left:1622px;top:88px;width:30px;height:24px;background:#383838;border-radius:3px;border:1px solid #2c2c2c"></div><svg class="a" style="left:1628px;top:91px;" width="18" height="18" viewBox="0 0 18 18"><path d="M9 8.500L1 12.500L9 16.500L17 12.500Z" fill="#c8c8c8"/><path d="M9 1L1 5.500L9 10L17 5.500Z" fill="#e8e8e8" stroke="#383838" stroke-width="1"/></svg><div class="a" style="left:1617px;top:116.5px;width:39px;height:1px;background:#333;"></div><div class="a" style="left:1658px;top:65px;width:262px;height:12px;background:#2f2f2f;"></div><svg class="a" style="left:1908px;top:68px;" width="8" height="6" viewBox="0 0 8 6"><path d="M0 0V6L3.500 3ZM4.500 0V6L8 3Z" fill="#cfcfcf"/></svg><div class="a" style="left:1658px;top:77px;width:262px;height:170px;background:#4a4a4a;"></div><div class="a" style="left:1658px;top:247px;width:262px;height:3px;background:#2c2c2c;"></div><div class="a" style="left:1658px;top:77px;width:262px;height:17px;background:#363636;"></div><div class="a" style="left:1658px;top:77px;width:62.5px;height:17px;background:#4a4a4a;border-top:1px solid #5e5e5e;border-right:1px solid #2a2a2a"></div><svg class="a" style="left:1901px;top:81.5px;" width="16" height="9" viewBox="0 0 16 9"><path d="M0 1.500H5L2.500 4.500Z" fill="#cfcfcf"/><path d="M6 1H15M6 3.500H15M6 6H15M6 8.500H15" stroke="#cfcfcf" stroke-width="1"/></svg><svg class="a" style="left:1663px;top:81.5px;" width="5" height="10" viewBox="0 0 5 10"><path d="M0.500 3.500L2.500 1L4.500 3.500M0.500 6.500L2.500 9L4.500 6.500" fill="none" stroke="#d8d8d8" stroke-width="1.1"/></svg><span class="t" style="left:1671.6px;top:81.0px;font-size:9.5px;line-height:9.5px;color:#ececec;letter-spacing:0.05px;font-weight:bold;">Farbhilfe</span><div class="a" style="left:1663.5px;top:102.5px;width:19.5px;height:19.5px;background:#8c8c8c;border:2px solid #fff;outline:1px solid #222"></div><div class="a" style="left:1667px;top:106px;width:12.5px;height:12.5px;background:#8c8c8c;border:1px solid #333"></div><div class="a" style="left:1691px;top:102.5px;width:205.5px;height:20.5px;background:#e4e4e4;border:1px solid #2a2a2a"></div><div class="a" style="left:1693.5px;top:104.5px;width:81.5px;height:16.5px;background:#222;"></div><div class="a" style="left:1710px;top:105.5px;width:32px;height:14.5px;background:#3e3e44;"></div><div class="a" style="left:1742px;top:105.5px;width:16px;height:14.5px;background:#a09482;"></div><div class="a" style="left:1758px;top:105.5px;width:16px;height:14.5px;background:#c8d8a0;"></div><div class="a" style="left:1694.5px;top:105.5px;width:15.5px;height:14.5px;background:#8e8e8e;border:1px solid #fff;outline:1px solid #111"></div><div class="a" style="left:1897.5px;top:102.5px;width:15px;height:20.5px;background:#535353;border:1px solid #303030"></div><svg class="a" style="left:1901.5px;top:111px;" width="7" height="4" viewBox="0 0 7 4"><path d="M0 0H7 L3.5 4Z" fill="#d8d8d8"/></svg><span class="t" style="left:1681.0px;top:132.5px;font-size:10px;line-height:10px;color:#ececec;letter-spacing:0.09px;font-weight:bold;">Schattierungen</span><svg class="a" style="left:1786px;top:137.5px;" width="5" height="3.5" viewBox="0 0 5 3.5"><path d="M0 0H5 L2.5 3.5Z" fill="#d8d8d8"/></svg><span class="t" style="left:1848.4px;top:132.5px;font-size:10px;line-height:10px;color:#ececec;letter-spacing:0.10px;font-weight:bold;">Farbtöne</span><div class="a" style="left:1663px;top:150px;width:250.93px;height:75.7px;background:#0e0e0e;"></div><div class="a" style="left:1664px;top:151px;width:26.8px;height:13.9px;background:#000000;"></div><div class="a" style="left:1691.8px;top:151px;width:26.8px;height:13.9px;background:#1e1e1e;"></div><div class="a" style="left:1719.5px;top:151px;width:26.8px;height:13.9px;background:#3e3e3e;"></div><div class="a" style="left:1747.3px;top:151px;width:26.8px;height:13.9px;background:#5e5e5e;"></div><div class="a" style="left:1775.1px;top:151px;width:26.8px;height:13.9px;background:#848484;"></div><div class="a" style="left:1802.8px;top:151px;width:26.8px;height:13.9px;background:#a2a2a2;"></div><div class="a" style="left:1830.6px;top:151px;width:26.8px;height:13.9px;background:#bcbcbc;"></div><div class="a" style="left:1858.4px;top:151px;width:26.8px;height:13.9px;background:#d2d2d2;"></div><div class="a" style="left:1886.2px;top:151px;width:26.8px;height:13.9px;background:#ececec;"></div><div class="a" style="left:1664px;top:165.9px;width:26.8px;height:13.9px;background:#1a1a1c;"></div><div class="a" style="left:1691.8px;top:165.9px;width:26.8px;height:13.9px;background:#3a3a3c;"></div><div class="a" style="left:1719.5px;top:165.9px;width:26.8px;height:13.9px;background:#404042;"></div><div class="a" style="left:1747.3px;top:165.9px;width:26.8px;height:13.9px;background:#3c3c40;"></div><div class="a" style="left:1775.1px;top:165.9px;width:26.8px;height:13.9px;background:#34383c;"></div><div class="a" style="left:1802.8px;top:165.9px;width:26.8px;height:13.9px;background:#4e4e52;"></div><div class="a" style="left:1830.6px;top:165.9px;width:26.8px;height:13.9px;background:#7c787c;"></div><div class="a" style="left:1858.4px;top:165.9px;width:26.8px;height:13.9px;background:#a4a0a2;"></div><div class="a" style="left:1886.2px;top:165.9px;width:26.8px;height:13.9px;background:#d2d0d2;"></div><div class="a" style="left:1664px;top:180.9px;width:26.8px;height:13.9px;background:#1c1a1e;"></div><div class="a" style="left:1691.8px;top:180.9px;width:26.8px;height:13.9px;background:#383438;"></div><div class="a" style="left:1719.5px;top:180.9px;width:26.8px;height:13.9px;background:#423e42;"></div><div class="a" style="left:1747.3px;top:180.9px;width:26.8px;height:13.9px;background:#3e363c;"></div><div class="a" style="left:1775.1px;top:180.9px;width:26.8px;height:13.9px;background:#3a3036;"></div><div class="a" style="left:1802.8px;top:180.9px;width:26.8px;height:13.9px;background:#564c54;"></div><div class="a" style="left:1830.6px;top:180.9px;width:26.8px;height:13.9px;background:#7e7478;"></div><div class="a" style="left:1858.4px;top:180.9px;width:26.8px;height:13.9px;background:#a69ea0;"></div><div class="a" style="left:1886.2px;top:180.9px;width:26.8px;height:13.9px;background:#d4d0d2;"></div><div class="a" style="left:1664px;top:195.8px;width:26.8px;height:13.9px;background:#1a1a1c;"></div><div class="a" style="left:1691.8px;top:195.8px;width:26.8px;height:13.9px;background:#5c5c5c;"></div><div class="a" style="left:1719.5px;top:195.8px;width:26.8px;height:13.9px;background:#84827c;"></div><div class="a" style="left:1747.3px;top:195.8px;width:26.8px;height:13.9px;background:#9a8c7c;"></div><div class="a" style="left:1775.1px;top:195.8px;width:26.8px;height:13.9px;background:#9c8a78;"></div><div class="a" style="left:1802.8px;top:195.8px;width:26.8px;height:13.9px;background:#ac9c8a;"></div><div class="a" style="left:1830.6px;top:195.8px;width:26.8px;height:13.9px;background:#c2b4a4;"></div><div class="a" style="left:1858.4px;top:195.8px;width:26.8px;height:13.9px;background:#d8cec6;"></div><div class="a" style="left:1886.2px;top:195.8px;width:26.8px;height:13.9px;background:#f0ecea;"></div><div class="a" style="left:1664px;top:210.8px;width:26.8px;height:13.9px;background:#1a1a1c;"></div><div class="a" style="left:1691.8px;top:210.8px;width:26.8px;height:13.9px;background:#6c6e6a;"></div><div class="a" style="left:1719.5px;top:210.8px;width:26.8px;height:13.9px;background:#949c90;"></div><div class="a" style="left:1747.3px;top:210.8px;width:26.8px;height:13.9px;background:#b0bca0;"></div><div class="a" style="left:1775.1px;top:210.8px;width:26.8px;height:13.9px;background:#c4d6a0;"></div><div class="a" style="left:1802.8px;top:210.8px;width:26.8px;height:13.9px;background:#d0deb4;"></div><div class="a" style="left:1830.6px;top:210.8px;width:26.8px;height:13.9px;background:#dce8c8;"></div><div class="a" style="left:1858.4px;top:210.8px;width:26.8px;height:13.9px;background:#e8f0dc;"></div><div class="a" style="left:1886.2px;top:210.8px;width:26.8px;height:13.9px;background:#f6f8f2;"></div><svg class="a" style="left:1669px;top:232.5px;" width="14" height="10" viewBox="0 0 14 10"><rect x="0.500" y="0.500" width="13" height="8" fill="#9a9a9a" stroke="#c8c8c8"/><path d="M0 4.500H14M4.700 0V9M9.300 0V9" stroke="#4a4a4a" stroke-width="1"/></svg><svg class="a" style="left:1683px;top:240px;" width="5" height="3" viewBox="0 0 5 3"><path d="M0 0H5 L2.5 3Z" fill="#d8d8d8"/></svg><span class="t" style="left:1695.0px;top:231.5px;font-size:10px;line-height:10px;color:#dedede;letter-spacing:-0.02px;">Ohne</span><svg class="a" style="left:1854px;top:231.5px;" width="13" height="13" viewBox="0 0 13 13"><circle cx="6.500" cy="6.500" r="5.700" fill="#808080" stroke="#c8c8c8"/><path d="M6.500 6.500L6.500 1A5.500 5.500 0 0 1 11 3.500ZM6.500 6.500L12 8.500A5.500 5.500 0 0 1 8.500 11.700ZM6.500 6.500L3 11A5.500 5.500 0 0 1 1 8ZM6.500 6.500L1.300 4.500A5.500 5.500 0 0 1 4 1.500Z" fill="#b8b8b8"/><circle cx="6.500" cy="6.500" r="1.600" fill="#555"/></svg><svg class="a" style="left:1878px;top:232px;" width="17" height="11" viewBox="0 0 17 11"><rect x="5" y="0.500" width="11" height="8" fill="#aaa" stroke="#d8d8d8"/><path d="M9 0.500V8.500M12.500 0.500V8.500" stroke="#555"/><path d="M0 8H6M3 5V11" stroke="#f0f0f0" stroke-width="1.800"/></svg><svg class="a" style="left:1908px;top:236px;" width="10" height="10" viewBox="0 0 10 10"><path d="M8 0h1v1h-1zM6 2h1v1h-1zM8 2h1v1h-1zM4 4h1v1h-1zM6 4h1v1h-1zM8 4h1v1h-1zM2 6h1v1h-1zM4 6h1v1h-1zM6 6h1v1h-1zM8 6h1v1h-1zM0 8h1v1h-1zM2 8h1v1h-1zM4 8h1v1h-1zM6 8h1v1h-1zM8 8h1v1h-1z" fill="#262626"/></svg><div class="a" style="left:1658px;top:250px;width:262px;height:233px;background:#4a4a4a;"></div><div class="a" style="left:1658px;top:483px;width:262px;height:3px;background:#2c2c2c;"></div><div class="a" style="left:1658px;top:250px;width:262px;height:17px;background:#363636;"></div><div class="a" style="left:1658px;top:250px;width:55px;height:17px;background:#4a4a4a;border-top:1px solid #5e5e5e;border-right:1px solid #2a2a2a"></div><svg class="a" style="left:1901px;top:254.5px;" width="16" height="9" viewBox="0 0 16 9"><path d="M0 1.500H5L2.500 4.500Z" fill="#cfcfcf"/><path d="M6 1H15M6 3.500H15M6 6H15M6 8.500H15" stroke="#cfcfcf" stroke-width="1"/></svg><svg class="a" style="left:1663px;top:254.5px;" width="5" height="10" viewBox="0 0 5 10"><path d="M0.500 3.500L2.500 1L4.500 3.500M0.500 6.500L2.500 9L4.500 6.500" fill="none" stroke="#d8d8d8" stroke-width="1.1"/></svg><span class="t" style="left:1671.5px;top:254.0px;font-size:9.5px;line-height:9.5px;color:#ececec;letter-spacing:0.26px;font-weight:bold;">Verlauf</span><div class="a" style="left:1664.5px;top:274.5px;width:29px;height:29px;background:transparent;border:1px solid #222;background:linear-gradient(90deg,#fafafa,#b0b0b0 45%,#333)"></div><svg class="a" style="left:1698px;top:287px;" width="5.5" height="3.5" viewBox="0 0 5.5 3.5"><path d="M0 0H5.5 L2.75 3.5Z" fill="#d8d8d8"/></svg><div class="a" style="left:1674.5px;top:320.5px;width:19px;height:19px;background:#fff;border:1px solid #2a2a2a"></div><svg class="a" style="left:1674.5px;top:320.5px;" width="19" height="19" viewBox="0 0 19 19"><rect x="5.7" y="5.7" width="7.6" height="7.6" fill="#4a4a4a"/><path d="M1 18L18 1" stroke="#d8121c" stroke-width="1.8"/></svg><div class="a" style="left:1664.5px;top:310.5px;width:19px;height:19px;background:#868686;border:1px solid #f2f2f2;outline:1px solid #2a2a2a"></div><svg class="a" style="left:1670px;top:350.5px;" width="17" height="14" viewBox="0 0 17 14"><rect x="2.500" y="0.500" width="7" height="5" fill="none" stroke="#767676"/><path d="M11 2H15L13 4.500Z" fill="#767676"/><rect x="7.500" y="8.500" width="7" height="5" fill="none" stroke="#767676"/><path d="M0 8.500L3.500 6V11Z" fill="#767676"/></svg><span class="t" style="left:1731.0px;top:278.5px;font-size:10px;line-height:10px;color:#ececec;letter-spacing:-0.49px;font-weight:bold;">Art:</span><div class="a" style="left:1752.5px;top:275px;width:160.5px;height:17.5px;background:#636363;border:1px solid #333"></div><div class="a" style="left:1893.5px;top:277px;width:1px;height:13.5px;background:#444;"></div><svg class="a" style="left:1899.5px;top:282px;" width="8" height="5" viewBox="0 0 8 5"><path d="M0 0H8 L4 5Z" fill="#e8e8e8"/></svg><span class="t" style="left:1713.0px;top:304.5px;font-size:10px;line-height:10px;color:#8a8a8a;letter-spacing:0.15px;">Kontur:</span><div class="a" style="left:1752.8px;top:300.5px;width:23px;height:19px;background:#555;border:1px solid #3a3a3a"></div><svg class="a" style="left:1756.8px;top:304px;" width="15" height="12" viewBox="0 0 15 12"><path d="M2 12V3H13" fill="none" stroke="#6e6e6e" stroke-width="2.500"/><path d="M2 12V3 H13" fill="none" stroke="#7e7e7e" stroke-width="1"/></svg><div class="a" style="left:1775.8px;top:300.5px;width:23px;height:19px;background:#555;border:1px solid #3a3a3a"></div><svg class="a" style="left:1779.8px;top:304px;" width="15" height="12" viewBox="0 0 15 12"><path d="M2 12V3H13" fill="none" stroke="#6e6e6e" stroke-width="2.500"/><path d="M4.5 12V4.5 H13" fill="none" stroke="#7e7e7e" stroke-width="1"/></svg><div class="a" style="left:1798.8px;top:300.5px;width:23px;height:19px;background:#555;border:1px solid #3a3a3a"></div><svg class="a" style="left:1802.8px;top:304px;" width="15" height="12" viewBox="0 0 15 12"><path d="M2 12V3H13" fill="none" stroke="#6e6e6e" stroke-width="2.500"/><path d="M7 12V6 H13" fill="none" stroke="#7e7e7e" stroke-width="1"/></svg><svg class="a" style="left:1733px;top:332.5px;" width="12" height="9" viewBox="0 0 12 9"><path d="M0.500 8.500H11.500M0.500 8.500L9 1" fill="none" stroke="#767676" stroke-width="1"/><path d="M7 8.500A6 6 0 0 0 5.500 4" fill="none" stroke="#767676"/></svg><div class="a" style="left:1752.5px;top:328px;width:67px;height:17.5px;background:#7c7c7c;border:1px solid #3a3a3a"></div><div class="a" style="left:1804.5px;top:329px;width:14px;height:15.5px;background:#707070;border-left:1px solid #4a4a4a"></div><svg class="a" style="left:1808.5px;top:334.5px;" width="7" height="4" viewBox="0 0 7 4"><path d="M0 0H7 L3.5 4Z" fill="#9a9a9a"/></svg><svg class="a" style="left:1732px;top:356px;" width="14" height="14" viewBox="0 0 14 14"><path d="M1 0V13M1 2.500H3M1 10.500H3" stroke="#767676"/><ellipse cx="8.500" cy="6.500" rx="4" ry="3.500" fill="none" stroke="#767676"/><path d="M4 12.500H13M4 11V14M13 11V14" stroke="#767676"/></svg><div class="a" style="left:1752.5px;top:354px;width:67px;height:17.5px;background:#7c7c7c;border:1px solid #3a3a3a"></div><div class="a" style="left:1804.5px;top:355px;width:14px;height:15.5px;background:#707070;border-left:1px solid #4a4a4a"></div><svg class="a" style="left:1808.5px;top:360.5px;" width="7" height="4" viewBox="0 0 7 4"><path d="M0 0H7 L3.5 4Z" fill="#9a9a9a"/></svg><div class="a" style="left:1667.8px;top:386px;width:216.5px;height:19px;background:transparent;border:1px solid #2a2a2a;background:linear-gradient(90deg,#fff,#b8bcbc 35%,#6a6a6a 70%,#000)"></div><svg class="a" style="left:1896px;top:391px;" width="12" height="13" viewBox="0 0 12 13"><path d="M0.500 3.500H11.500M4 3V1.500H8V3" fill="none" stroke="#7a7a7a" stroke-width="1.2"/><path d="M1.500 4.500H10.500L9.500 12.500H2.500Z" fill="none" stroke="#7a7a7a" stroke-width="1.1"/><path d="M4.300 5.500V11.500M6 5.500V11.500M7.700 5.500V11.500" stroke="#7a7a7a" stroke-width="0.9"/></svg><span class="t" style="left:1702.3px;top:436.5px;font-size:10px;line-height:10px;color:#8a8a8a;letter-spacing:-0.05px;">Deckkraft:</span><div class="a" style="left:1752.5px;top:432.5px;width:67px;height:17.5px;background:#7c7c7c;border:1px solid #3a3a3a"></div><div class="a" style="left:1804.5px;top:433.5px;width:14px;height:15.5px;background:#707070;border-left:1px solid #4a4a4a"></div><svg class="a" style="left:1808.5px;top:439px;" width="7" height="4" viewBox="0 0 7 4"><path d="M0 0H7 L3.5 4Z" fill="#9a9a9a"/></svg><span class="t" style="left:1709.5px;top:462.0px;font-size:10px;line-height:10px;color:#8a8a8a;letter-spacing:-0.17px;">Position:</span><div class="a" style="left:1752.5px;top:458.5px;width:67px;height:17.5px;background:#7c7c7c;border:1px solid #3a3a3a"></div><div class="a" style="left:1804.5px;top:459.5px;width:14px;height:15.5px;background:#707070;border-left:1px solid #4a4a4a"></div><svg class="a" style="left:1808.5px;top:465px;" width="7" height="4" viewBox="0 0 7 4"><path d="M0 0H7 L3.5 4Z" fill="#9a9a9a"/></svg><svg class="a" style="left:1908px;top:472px;" width="10" height="10" viewBox="0 0 10 10"><path d="M8 0h1v1h-1zM6 2h1v1h-1zM8 2h1v1h-1zM4 4h1v1h-1zM6 4h1v1h-1zM8 4h1v1h-1zM2 6h1v1h-1zM4 6h1v1h-1zM6 6h1v1h-1zM8 6h1v1h-1zM0 8h1v1h-1zM2 8h1v1h-1zM4 8h1v1h-1zM6 8h1v1h-1zM8 8h1v1h-1z" fill="#262626"/></svg><div class="a" style="left:1658px;top:486px;width:262px;height:170px;background:#4a4a4a;"></div><div class="a" style="left:1658px;top:656px;width:262px;height:3px;background:#2c2c2c;"></div><div class="a" style="left:1658px;top:486px;width:262px;height:17px;background:#363636;"></div><div class="a" style="left:1658px;top:486px;width:62.5px;height:17px;background:#4a4a4a;border-top:1px solid #5e5e5e;border-right:1px solid #2a2a2a"></div><svg class="a" style="left:1901px;top:490.5px;" width="16" height="9" viewBox="0 0 16 9"><path d="M0 1.500H5L2.500 4.500Z" fill="#cfcfcf"/><path d="M6 1H15M6 3.500H15M6 6H15M6 8.500H15" stroke="#cfcfcf" stroke-width="1"/></svg><span class="t" style="left:1665.5px;top:490.0px;font-size:9.5px;line-height:9.5px;color:#ececec;letter-spacing:-0.03px;font-weight:bold;">Farbfelder</span><div class="a" style="left:1673.5px;top:519.5px;width:19px;height:19px;background:#fff;border:1px solid #2a2a2a"></div><svg class="a" style="left:1673.5px;top:519.5px;" width="19" height="19" viewBox="0 0 19 19"><rect x="5.7" y="5.7" width="7.6" height="7.6" fill="#4a4a4a"/><path d="M1 18L18 1" stroke="#d8121c" stroke-width="1.8"/></svg><div class="a" style="left:1663.5px;top:509.5px;width:19px;height:19px;background:#868686;border:1px solid #f2f2f2;outline:1px solid #2a2a2a"></div><div class="a" style="left:1862.5px;top:510.5px;width:50px;height:21.5px;background:#3a3a3a;border:1px solid #2c2c2c;border-radius:2px"></div><div class="a" style="left:1863.5px;top:511.5px;width:24.5px;height:19.5px;background:#5e5e5e;"></div><svg class="a" style="left:1868.5px;top:514.5px;" width="14" height="14" viewBox="0 0 14 14"><path d="M0 1.500H13M0 5H13M0 8.500H13M0 12H13" stroke="#e8e8e8" stroke-width="1.600"/></svg><svg class="a" style="left:1893px;top:514.5px;" width="14" height="14" viewBox="0 0 14 14"><path d="M0 0H3.500V3.500H0ZM5 0H8.500V3.500H5ZM10 0H13.500V3.500H10ZM0 5H3.500V8.500H0ZM5 5H8.500V8.500H5ZM10 5H13.500V8.500H10ZM0 10H3.500V13.500H0ZM5 10H8.500V13.500H5ZM10 10H13.500V13.500H10Z" fill="#e0e0e0"/></svg><div class="a" style="left:1663.5px;top:544.5px;width:250px;height:92px;background:#474747;border:1px solid #2e2e2e"></div><div class="a" style="left:1901.5px;top:545.5px;width:11px;height:90px;background:#424242;border-left:1px solid #333"></div><svg class="a" style="left:1904px;top:550px;" width="7" height="4" viewBox="0 0 7 4"><path d="M0 4H7 L3.5 0Z" fill="#8a8a8a"/></svg><svg class="a" style="left:1904px;top:627px;" width="7" height="4" viewBox="0 0 7 4"><path d="M0 0H7 L3.5 4Z" fill="#8a8a8a"/></svg><div class="a" style="left:1664px;top:545px;width:13.5px;height:13.5px;background:#fff;"></div><svg class="a" style="left:1664px;top:545px;" width="13.5" height="13.5" viewBox="0 0 13.5 13.5"><path d="M0.500 13L13 0.500" stroke="#d8121c" stroke-width="1.600"/></svg><div class="a" style="left:1678px;top:545px;width:13.5px;height:13.5px;background:#fff;"></div><svg class="a" style="left:1678px;top:545px;" width="13.5" height="13.5" viewBox="0 0 13.5 13.5"><circle cx="6.750" cy="6.750" r="4.200" fill="none" stroke="#111" stroke-width="0.900"/><circle cx="6.750" cy="6.750" r="1.800" fill="none" stroke="#111" stroke-width="0.900"/><path d="M6.750 0.500V13M0.500 6.750H13" stroke="#111" stroke-width="0.900"/></svg><div class="a" style="left:1691.9px;top:545px;width:13.5px;height:13.5px;background:#ffffff;"></div><div class="a" style="left:1705.8px;top:545px;width:13.5px;height:13.5px;background:#000000;"></div><div class="a" style="left:1719.8px;top:545px;width:13.5px;height:13.5px;background:#e2001a;"></div><div class="a" style="left:1733.8px;top:545px;width:13.5px;height:13.5px;background:#ffed00;"></div><div class="a" style="left:1747.7px;top:545px;width:13.5px;height:13.5px;background:#009a3d;"></div><div class="a" style="left:1761.7px;top:545px;width:13.5px;height:13.5px;background:#009ee0;"></div><div class="a" style="left:1775.6px;top:545px;width:13.5px;height:13.5px;background:#1d2f8f;"></div><div class="a" style="left:1789.5px;top:545px;width:13.5px;height:13.5px;background:#e5007d;"></div><div class="a" style="left:1803.5px;top:545px;width:13.5px;height:13.5px;background:#d4133a;"></div><div class="a" style="left:1817.5px;top:545px;width:13.5px;height:13.5px;background:#e8412c;"></div><div class="a" style="left:1831.4px;top:545px;width:13.5px;height:13.5px;background:#ec6726;"></div><div class="a" style="left:1845.3px;top:545px;width:13.5px;height:13.5px;background:#f59c10;"></div><div class="a" style="left:1859.3px;top:545px;width:13.5px;height:13.5px;background:#f8b133;"></div><div class="a" style="left:1873.2px;top:545px;width:13.5px;height:13.5px;background:#fcea10;"></div><div class="a" style="left:1664px;top:559px;width:13.5px;height:13.5px;background:#dfdb1a;"></div><div class="a" style="left:1678px;top:559px;width:13.5px;height:13.5px;background:#9bc31c;"></div><div class="a" style="left:1691.9px;top:559px;width:13.5px;height:13.5px;background:#4cae34;"></div><div class="a" style="left:1705.8px;top:559px;width:13.5px;height:13.5px;background:#2a9a3c;"></div><div class="a" style="left:1719.8px;top:559px;width:13.5px;height:13.5px;background:#1b7a3a;"></div><div class="a" style="left:1733.8px;top:559px;width:13.5px;height:13.5px;background:#56b26e;"></div><div class="a" style="left:1747.7px;top:559px;width:13.5px;height:13.5px;background:#22a59a;"></div><div class="a" style="left:1761.7px;top:559px;width:13.5px;height:13.5px;background:#4eaee6;"></div><div class="a" style="left:1775.6px;top:559px;width:13.5px;height:13.5px;background:#2f77c4;"></div><div class="a" style="left:1789.5px;top:559px;width:13.5px;height:13.5px;background:#1e3694;"></div><div class="a" style="left:1803.5px;top:559px;width:13.5px;height:13.5px;background:#1d2a78;"></div><div class="a" style="left:1817.5px;top:559px;width:13.5px;height:13.5px;background:#5a1f8e;"></div><div class="a" style="left:1831.4px;top:559px;width:13.5px;height:13.5px;background:#96109a;"></div><div class="a" style="left:1845.3px;top:559px;width:13.5px;height:13.5px;background:#a30d78;"></div><div class="a" style="left:1859.3px;top:559px;width:13.5px;height:13.5px;background:#d60b6a;"></div><div class="a" style="left:1873.2px;top:559px;width:13.5px;height:13.5px;background:#df1367;"></div><div class="a" style="left:1664px;top:572.9px;width:13.5px;height:13.5px;background:#cdbfa5;"></div><div class="a" style="left:1678px;top:572.9px;width:13.5px;height:13.5px;background:#a8937c;"></div><div class="a" style="left:1691.9px;top:572.9px;width:13.5px;height:13.5px;background:#7d6a57;"></div><div class="a" style="left:1705.8px;top:572.9px;width:13.5px;height:13.5px;background:#645243;"></div><div class="a" style="left:1719.8px;top:572.9px;width:13.5px;height:13.5px;background:#cfa46a;"></div><div class="a" style="left:1733.8px;top:572.9px;width:13.5px;height:13.5px;background:#b98a52;"></div><div class="a" style="left:1747.7px;top:572.9px;width:13.5px;height:13.5px;background:#a5703a;"></div><div class="a" style="left:1761.7px;top:572.9px;width:13.5px;height:13.5px;background:#8f5c28;"></div><div class="a" style="left:1775.6px;top:572.9px;width:13.5px;height:13.5px;background:#774a1e;"></div><div class="a" style="left:1789.5px;top:572.9px;width:13.5px;height:13.5px;background:#4f3220;"></div><div class="a" style="left:1803.5px;top:572.9px;width:13.5px;height:13.5px;background:transparent;background:linear-gradient(90deg,#fff,#111)"></div><div class="a" style="left:1817.5px;top:572.9px;width:13.5px;height:13.5px;background:#050505;"></div><div class="a" style="left:1831.4px;top:572.9px;width:13.5px;height:13.5px;background:transparent;background:radial-gradient(circle,#fff 0,#888 40%,#050505 75%)"></div><div class="a" style="left:1845.3px;top:572.9px;width:13.5px;height:13.5px;background:#050505;"></div><div class="a" style="left:1859.3px;top:572.9px;width:13.5px;height:13.5px;background:transparent;background:linear-gradient(90deg,#b0621a,#f8dcc0 50%,#7a5a8a)"></div><div class="a" style="left:1873.2px;top:572.9px;width:13.5px;height:13.5px;background:transparent;background:radial-gradient(circle,#fff0c0 0,#d08030 35%,#3a1808 80%)"></div><div class="a" style="left:1664px;top:586.9px;width:13.5px;height:13.5px;background:#d8261c;"></div><svg class="a" style="left:1664px;top:586.9px;" width="13.5" height="13.5" viewBox="0 0 13.5 13.5"><path d="M2 3H6M4 1V5M8 6H12M10 4V8M2 9H6M4 7V11M7 11H11" stroke="#f0a020" stroke-width="1"/></svg><div class="a" style="left:1678px;top:586.9px;width:13.5px;height:13.5px;background:#f08a10;"></div><svg class="a" style="left:1678px;top:586.9px;" width="13.5" height="13.5" viewBox="0 0 13.5 13.5"><path d="M13.500 5.500V13.500H5.500Z" fill="#fff" stroke="#111" stroke-width="0.800"/><circle cx="10.800" cy="11" r="0.900" fill="#111"/></svg><div class="a" style="left:1691.9px;top:586.9px;width:13.5px;height:13.5px;background:#a8aaa6;"></div><svg class="a" style="left:1691.9px;top:586.9px;" width="13.5" height="13.5" viewBox="0 0 13.5 13.5"><path d="M13.500 5.500V13.500H5.500Z" fill="#fff" stroke="#111" stroke-width="0.800"/><circle cx="10.800" cy="11" r="0.900" fill="#111"/></svg><div class="a" style="left:1705.8px;top:586.9px;width:13.5px;height:13.5px;background:#3c403c;"></div><svg class="a" style="left:1705.8px;top:586.9px;" width="13.5" height="13.5" viewBox="0 0 13.5 13.5"><path d="M13.500 5.500V13.500H5.500Z" fill="#fff" stroke="#111" stroke-width="0.800"/><circle cx="10.800" cy="11" r="0.900" fill="#111"/></svg><div class="a" style="left:1719.8px;top:586.9px;width:13.5px;height:13.5px;background:#a8aea8;"></div><svg class="a" style="left:1719.8px;top:586.9px;" width="13.5" height="13.5" viewBox="0 0 13.5 13.5"><path d="M13.500 5.500V13.500H5.500Z" fill="#fff" stroke="#111" stroke-width="0.800"/><circle cx="10.800" cy="11" r="0.900" fill="#111"/></svg><div class="a" style="left:1733.8px;top:586.9px;width:13.5px;height:13.5px;background:#050508;"></div><div class="a" style="left:1747.7px;top:586.9px;width:13.5px;height:13.5px;background:#3c3c42;"></div><div class="a" style="left:1761.7px;top:586.9px;width:13.5px;height:13.5px;background:transparent;background:linear-gradient(90deg,#58585a,#646466)"></div><div class="a" style="left:1775.6px;top:586.9px;width:13.5px;height:13.5px;background:transparent;background:linear-gradient(90deg,#666668,#7c7c7c)"></div><div class="a" style="left:1789px;top:586.4px;width:14.5px;height:14.5px;background:#8c8e90;border:1px solid #fff;outline:1px solid #111;box-shadow:inset 0 0 0 1px #222"></div><div class="a" style="left:1803.5px;top:586.9px;width:13.5px;height:13.5px;background:#a0a0a0;"></div><div class="a" style="left:1817.5px;top:586.9px;width:13.5px;height:13.5px;background:#b4b4b4;"></div><div class="a" style="left:1831.4px;top:586.9px;width:13.5px;height:13.5px;background:#c8c8c8;"></div><div class="a" style="left:1845.3px;top:586.9px;width:13.5px;height:13.5px;background:#d8d8d8;"></div><div class="a" style="left:1859.3px;top:586.9px;width:13.5px;height:13.5px;background:#eaeaea;"></div><div class="a" style="left:1873.2px;top:586.9px;width:13.5px;height:13.5px;background:#f6f6f6;"></div><div class="a" style="left:1664px;top:600.8px;width:13.5px;height:13.5px;background:#e2001a;"></div><div class="a" style="left:1678px;top:600.8px;width:13.5px;height:13.5px;background:#ec6a1e;"></div><div class="a" style="left:1691.9px;top:600.8px;width:13.5px;height:13.5px;background:#ffdd00;"></div><div class="a" style="left:1705.8px;top:600.8px;width:13.5px;height:13.5px;background:#2a9e3a;"></div><div class="a" style="left:1719.8px;top:600.8px;width:13.5px;height:13.5px;background:#1a3c9c;"></div><div class="a" style="left:1733.8px;top:600.8px;width:13.5px;height:13.5px;background:#7e2a9c;"></div><svg class="a" style="left:1667px;top:640.5px;" width="13" height="12" viewBox="0 0 13 12"><path d="M1 1V11M3.500 1V11M6 1.500L9 11" stroke="#d2d2d2" stroke-width="1.700"/><path d="M0 11.500H10" stroke="#d2d2d2" stroke-width="1"/></svg><svg class="a" style="left:1680px;top:649px;" width="5" height="3" viewBox="0 0 5 3"><path d="M0 0H5 L2.5 3Z" fill="#d8d8d8"/></svg><svg class="a" style="left:1696px;top:640.5px;" width="12" height="12" viewBox="0 0 12 12"><circle cx="3" cy="6" r="2" fill="none" stroke="#d2d2d2" stroke-width="1.300"/><circle cx="9" cy="2.200" r="1.700" fill="#d2d2d2"/><circle cx="9" cy="9.800" r="1.700" fill="#d2d2d2"/><path d="M4.500 5L8 2.500M4.500 7L8 9.500" stroke="#d2d2d2" stroke-width="1.200"/></svg><svg class="a" style="left:1774px;top:640.5px;" width="11" height="11" viewBox="0 0 11 11"><path d="M0 0H3V3H0ZM4 0H7V3H4ZM8 0H11V3H8ZM0 4H3V7H0ZM4 4H7V7H4ZM8 4H11V7H8ZM0 8H3V11H0ZM4 8H7V11H4ZM8 8H11V11H8Z" fill="#d2d2d2"/><path d="M4 4H7V7H4Z" fill="#333"/></svg><svg class="a" style="left:1786px;top:649px;" width="5" height="3" viewBox="0 0 5 3"><path d="M0 0H5 L2.5 3Z" fill="#d8d8d8"/></svg><svg class="a" style="left:1802px;top:641px;" width="11" height="11" viewBox="0 0 11 11"><rect x="0.500" y="0.500" width="10" height="10" fill="none" stroke="#d2d2d2" stroke-width="1.100"/><path d="M2 3.500H3.500M5 3.500H9M2 6H3.500M5 6H9M2 8.500H3.500M5 8.500H9" stroke="#d2d2d2" stroke-width="1"/></svg><svg class="a" style="left:1827.5px;top:641.5px;" width="13" height="10" viewBox="0 0 13 10"><path d="M0 1.500Q0 0.500 1 0.500H4.500L6 2H12Q13 2 13 3V9Q13 10 12 10H1Q0 10 0 9Z" fill="#b4b4b4"/></svg><svg class="a" style="left:1854px;top:640.5px;" width="12" height="12" viewBox="0 0 12 12"><path d="M1 1H11V11H5L1 7Z" fill="#c8c8c8"/><path d="M1 7H5V11Z" fill="#4b4b4b" stroke="#c8c8c8" stroke-width="0.8"/></svg><svg class="a" style="left:1879.5px;top:640px;" width="12" height="13" viewBox="0 0 12 13"><path d="M0.500 3.500H11.500M4 3V1.500H8V3" fill="none" stroke="#c8c8c8" stroke-width="1.2"/><path d="M1.500 4.500H10.500L9.500 12.500H2.500Z" fill="none" stroke="#c8c8c8" stroke-width="1.1"/><path d="M4.300 5.500V11.500M6 5.500V11.500M7.700 5.500V11.500" stroke="#c8c8c8" stroke-width="0.9"/></svg><svg class="a" style="left:1908px;top:645px;" width="10" height="10" viewBox="0 0 10 10"><path d="M8 0h1v1h-1zM6 2h1v1h-1zM8 2h1v1h-1zM4 4h1v1h-1zM6 4h1v1h-1zM8 4h1v1h-1zM2 6h1v1h-1zM4 6h1v1h-1zM6 6h1v1h-1zM8 6h1v1h-1zM0 8h1v1h-1zM2 8h1v1h-1zM4 8h1v1h-1zM6 8h1v1h-1zM8 8h1v1h-1z" fill="#262626"/></svg><div class="a" style="left:1658px;top:659px;width:262px;height:184px;background:#4a4a4a;"></div><div class="a" style="left:1658px;top:843px;width:262px;height:3px;background:#2c2c2c;"></div><div class="a" style="left:1658px;top:659px;width:262px;height:17px;background:#363636;"></div><div class="a" style="left:1658px;top:659px;width:46px;height:17px;background:#4a4a4a;border-top:1px solid #5e5e5e;border-right:1px solid #2a2a2a"></div><svg class="a" style="left:1901px;top:663.5px;" width="16" height="9" viewBox="0 0 16 9"><path d="M0 1.500H5L2.500 4.500Z" fill="#cfcfcf"/><path d="M6 1H15M6 3.500H15M6 6H15M6 8.500H15" stroke="#cfcfcf" stroke-width="1"/></svg><svg class="a" style="left:1663px;top:663.5px;" width="5" height="10" viewBox="0 0 5 10"><path d="M0.500 3.500L2.500 1L4.500 3.500M0.500 6.500L2.500 9L4.500 6.500" fill="none" stroke="#d8d8d8" stroke-width="1.1"/></svg><span class="t" style="left:1671.6px;top:663.0px;font-size:9.5px;line-height:9.5px;color:#ececec;letter-spacing:-0.23px;font-weight:bold;">Farbe</span><svg class="a" style="left:1663.5px;top:683px;" width="12" height="12" viewBox="0 0 12 12"><rect x="4.500" y="4.500" width="7" height="7" fill="#fff" stroke="#111"/><rect x="0.500" y="0.500" width="7" height="7" fill="#111" stroke="#e8e8e8"/></svg><svg class="a" style="left:1683px;top:683px;" width="11" height="11" viewBox="0 0 11 11"><path d="M2 3H7V9" fill="none" stroke="#d2d2d2" stroke-width="1.200"/><path d="M0 3L3 0.500V5.500ZM7 11L4.500 8H9.500Z" fill="#d2d2d2"/></svg><div class="a" style="left:1673px;top:710.5px;width:18.5px;height:18.5px;background:#fff;border:1px solid #2a2a2a"></div><svg class="a" style="left:1673px;top:710.5px;" width="18.5" height="18.5" viewBox="0 0 18.5 18.5"><rect x="5.55" y="5.55" width="7.4" height="7.4" fill="#4a4a4a"/><path d="M1 17.5L17.5 1" stroke="#d8121c" stroke-width="1.8"/></svg><div class="a" style="left:1663.5px;top:701px;width:18.5px;height:18.5px;background:#868686;border:1px solid #f2f2f2;outline:1px solid #2a2a2a"></div><svg class="a" style="left:1669px;top:744.5px;" width="12" height="13" viewBox="0 0 12 13"><path d="M6 0.500L11.500 3.500V9.500L6 12.500L0.500 9.500V3.500Z" fill="#6a6a6a" stroke="#aaa" stroke-width="0.900"/><path d="M0.500 3.500L6 6.500L11.500 3.500M6 6.500V12.500" fill="none" stroke="#aaa" stroke-width="0.900"/></svg><div class="a" style="left:1688px;top:744px;width:13.5px;height:13px;background:#8c8c8c;border:1px solid #e8e8e8"></div><span class="t" style="left:1709.7px;top:689.5px;font-size:10px;line-height:10px;color:#d4d4d4;">C</span><div class="a" style="left:1728.6px;top:691.5px;width:102px;height:5.5px;background:transparent;background:linear-gradient(90deg,#707070,#507a90 50%,#0a70a8);border-top:1px solid #333;box-shadow:0 1px 0 #5a5a5a"></div><svg class="a" style="left:1724.6px;top:697.5px;" width="8" height="7" viewBox="0 0 8 7"><path d="M4 0L7.500 4V6.500H0.500V4Z" fill="#c8c8c8" stroke="#333" stroke-width="0.600"/></svg><div class="a" style="left:1837.8px;top:685.6px;width:33px;height:18px;background:#a3a3a3;border:1px solid #2e2e2e;border-bottom-color:#6a6a6a;border-right-color:#555"></div><span class="t" style="left:1841.0px;top:690.3px;font-size:9.5px;line-height:9.5px;color:#111;">0</span><span class="t" style="left:1873.4px;top:690.1px;font-size:10px;line-height:10px;color:#dedede;">%</span><span class="t" style="left:1709.7px;top:714.3px;font-size:10px;line-height:10px;color:#d4d4d4;">M</span><div class="a" style="left:1728.6px;top:716.5px;width:102px;height:5.5px;background:transparent;background:linear-gradient(90deg,#707070,#8a5272 50%,#a4105c);border-top:1px solid #333;box-shadow:0 1px 0 #5a5a5a"></div><svg class="a" style="left:1724.6px;top:722.5px;" width="8" height="7" viewBox="0 0 8 7"><path d="M4 0L7.500 4V6.500H0.500V4Z" fill="#c8c8c8" stroke="#333" stroke-width="0.600"/></svg><div class="a" style="left:1837.8px;top:710.6px;width:33px;height:18px;background:#a3a3a3;border:1px solid #2e2e2e;border-bottom-color:#6a6a6a;border-right-color:#555"></div><span class="t" style="left:1841.0px;top:715.3px;font-size:9.5px;line-height:9.5px;color:#111;">0</span><span class="t" style="left:1873.4px;top:715.1px;font-size:10px;line-height:10px;color:#dedede;">%</span><span class="t" style="left:1709.7px;top:739.3px;font-size:10px;line-height:10px;color:#d4d4d4;">Y</span><div class="a" style="left:1728.6px;top:741.8px;width:102px;height:5.5px;background:transparent;background:linear-gradient(90deg,#707070,#8a8a4a 50%,#c4b410);border-top:1px solid #333;box-shadow:0 1px 0 #5a5a5a"></div><svg class="a" style="left:1724.6px;top:747.8px;" width="8" height="7" viewBox="0 0 8 7"><path d="M4 0L7.500 4V6.500H0.500V4Z" fill="#c8c8c8" stroke="#333" stroke-width="0.600"/></svg><div class="a" style="left:1837.8px;top:735.7px;width:33px;height:18px;background:#a3a3a3;border:1px solid #2e2e2e;border-bottom-color:#6a6a6a;border-right-color:#555"></div><span class="t" style="left:1841.0px;top:740.4px;font-size:9.5px;line-height:9.5px;color:#111;">0</span><span class="t" style="left:1873.4px;top:740.2px;font-size:10px;line-height:10px;color:#dedede;">%</span><span class="t" style="left:1709.7px;top:764.7px;font-size:10px;line-height:10px;color:#d4d4d4;">K</span><div class="a" style="left:1728.6px;top:766.5px;width:102px;height:5.5px;background:transparent;background:linear-gradient(90deg,#fff,#a0a0a0 50%,#222);border-top:1px solid #333;box-shadow:0 1px 0 #5a5a5a"></div><svg class="a" style="left:1785.3px;top:772.5px;" width="8" height="7" viewBox="0 0 8 7"><path d="M4 0L7.500 4V6.500H0.500V4Z" fill="#c8c8c8" stroke="#333" stroke-width="0.600"/></svg><div class="a" style="left:1837.8px;top:760.3px;width:33px;height:18px;background:#a3a3a3;border:1px solid #2e2e2e;border-bottom-color:#6a6a6a;border-right-color:#555"></div><span class="t" style="left:1841.0px;top:765.0px;font-size:9.5px;line-height:9.5px;color:#111;">60</span><span class="t" style="left:1873.4px;top:764.8px;font-size:10px;line-height:10px;color:#dedede;">%</span><div class="a" style="left:1663.5px;top:790.5px;width:13px;height:13px;background:#fff;"></div><svg class="a" style="left:1663.5px;top:790.5px;" width="13" height="13" viewBox="0 0 13 13"><path d="M0.500 12.500L12.500 0.500" stroke="#d8121c" stroke-width="1.600"/></svg><div class="a" style="left:1676.5px;top:790.5px;width:13px;height:13px;background:#000;"></div><div class="a" style="left:1689.5px;top:790.5px;width:13px;height:13px;background:#fff;"></div><div class="a" style="left:1664.5px;top:814.5px;width:237px;height:22px;background:transparent;border:1px solid #2a2a2a;background:linear-gradient(180deg,rgba(255,255,255,1) 0,rgba(255,255,255,0) 48%,rgba(0,0,0,0) 52%,rgba(0,0,0,0.950) 100%),linear-gradient(90deg,#e00020 0,#f08000 8%,#f8e000 16%,#80c010 28%,#10a040 38%,#20b4e8 50%,#1060d0 59%,#3020a0 68%,#8020a0 78%,#d01080 88%,#e00030 100%)"></div><svg class="a" style="left:1908px;top:831.5px;" width="10" height="10" viewBox="0 0 10 10"><path d="M8 0h1v1h-1zM6 2h1v1h-1zM8 2h1v1h-1zM4 4h1v1h-1zM6 4h1v1h-1zM8 4h1v1h-1zM2 6h1v1h-1zM4 6h1v1h-1zM6 6h1v1h-1zM8 6h1v1h-1zM0 8h1v1h-1zM2 8h1v1h-1zM4 8h1v1h-1zM6 8h1v1h-1zM8 8h1v1h-1z" fill="#262626"/></svg><div class="a" style="left:1658px;top:846px;width:262px;height:172px;background:#4a4a4a;"></div><div class="a" style="left:1658px;top:1018px;width:262px;height:3px;background:#2c2c2c;"></div><div class="a" style="left:1658px;top:846px;width:262px;height:17px;background:#363636;"></div><div class="a" style="left:1658px;top:846px;width:57px;height:17px;background:#4a4a4a;border-top:1px solid #5e5e5e;border-right:1px solid #2a2a2a"></div><svg class="a" style="left:1901px;top:850.5px;" width="16" height="9" viewBox="0 0 16 9"><path d="M0 1.500H5L2.500 4.500Z" fill="#cfcfcf"/><path d="M6 1H15M6 3.500H15M6 6H15M6 8.500H15" stroke="#cfcfcf" stroke-width="1"/></svg><span class="t" style="left:1665.5px;top:850.0px;font-size:9.5px;line-height:9.5px;color:#ececec;letter-spacing:-0.39px;font-weight:bold;">Aussehen</span><div class="a" style="left:1663.5px;top:868.5px;width:250px;height:130px;background:#484848;border:1px solid #303030"></div><div class="a" style="left:1664.5px;top:894.8px;width:248px;height:1px;background:#363636;"></div><div class="a" style="left:1664.5px;top:919.5px;width:248px;height:1px;background:#363636;"></div><div class="a" style="left:1664.5px;top:944.5px;width:248px;height:1px;background:#363636;"></div><div class="a" style="left:1664.5px;top:969.3px;width:248px;height:1px;background:#363636;"></div><div class="a" style="left:1688.5px;top:895.5px;width:1px;height:74px;background:#363636;"></div><div class="a" style="left:1667px;top:873.5px;width:18.5px;height:17.5px;background:#868686;border:2px solid #fff;outline:1px solid #222"></div><span class="t" style="left:1711.3px;top:876.7px;font-size:10px;line-height:10px;color:#f0f0f0;letter-spacing:0.31px;font-weight:bold;">Pfad</span><svg class="a" style="left:1669.5px;top:902.5px" width="12.5" height="8.03571" viewBox="0 0 14 9"><path d="M0.600 4.500Q7 -2.300 13.400 4.500Q7 11.300 0.600 4.500Z" fill="none" stroke="#d6d6d6" stroke-width="1.350"/><circle cx="7" cy="4.400" r="2.900" fill="#242424"/><circle cx="8" cy="3.300" r="0.900" fill="#d6d6d6"/></svg><svg class="a" style="left:1669.5px;top:927.5px" width="12.5" height="8.03571" viewBox="0 0 14 9"><path d="M0.600 4.500Q7 -2.300 13.400 4.500Q7 11.300 0.600 4.500Z" fill="none" stroke="#d6d6d6" stroke-width="1.350"/><circle cx="7" cy="4.400" r="2.900" fill="#242424"/><circle cx="8" cy="3.300" r="0.900" fill="#d6d6d6"/></svg><svg class="a" style="left:1669.5px;top:952.5px" width="12.5" height="8.03571" viewBox="0 0 14 9"><path d="M0.600 4.500Q7 -2.300 13.400 4.500Q7 11.300 0.600 4.500Z" fill="none" stroke="#5c5c5c" stroke-width="1.350"/><circle cx="7" cy="4.400" r="2.900" fill="#444"/><circle cx="8" cy="3.300" r="0.900" fill="#5c5c5c"/></svg><svg class="a" style="left:1694px;top:902.5px;" width="6" height="9" viewBox="0 0 6 9"><path d="M0 0V9 L6 4.5Z" fill="#e0e0e0"/></svg><svg class="a" style="left:1694px;top:927.5px;" width="6" height="9" viewBox="0 0 6 9"><path d="M0 0V9 L6 4.5Z" fill="#e0e0e0"/></svg><span class="t" style="left:1711.3px;top:901.8px;font-size:10px;line-height:10px;color:#e8983a;letter-spacing:0.07px;">Kontur:</span><div class="a" style="left:1711px;top:912.5px;width:34px;height:1px;background:transparent;border-top:1px dotted #e8983a"></div><div class="a" style="left:1789px;top:899px;width:16px;height:16px;background:#fff;border:1px solid #fff;outline:1px solid #111;box-shadow:inset 0 0 0 1px #333"></div><svg class="a" style="left:1789px;top:899px;" width="16" height="16" viewBox="0 0 16 16"><path d="M4 12L12 4" stroke="#d8123c" stroke-width="2"/></svg><span class="t" style="left:1711.3px;top:926.8px;font-size:10px;line-height:10px;color:#dedede;letter-spacing:-0.31px;">Fläche:</span><div class="a" style="left:1789px;top:924px;width:16px;height:16px;background:#868686;border:1px solid #fff;outline:1px solid #111;box-shadow:inset 0 0 0 1px #222,inset 0 0 0 2px #fff"></div><span class="t" style="left:1711.3px;top:951.4px;font-size:10px;line-height:10px;color:#e8983a;letter-spacing:-0.00px;">Deckkraft:</span><div class="a" style="left:1711px;top:962px;width:46px;height:1px;background:transparent;border-top:1px dotted #e8983a"></div><span class="t" style="left:1788.0px;top:951.4px;font-size:10px;line-height:10px;color:#f0f0f0;letter-spacing:-0.01px;">Standard</span><svg class="a" style="left:1669.5px;top:1003px;" width="11" height="11" viewBox="0 0 11 11"><rect x="1" y="1" width="9" height="9" fill="none" stroke="#e8e8e8" stroke-width="1.700"/></svg><svg class="a" style="left:1695.5px;top:1003px;" width="11" height="11" viewBox="0 0 11 11"><rect x="0.500" y="0.500" width="10" height="10" fill="none" stroke="#d2d2d2"/><rect x="2.500" y="2.500" width="6" height="6" fill="#b8b8b8"/></svg><span class="t" style="left:1720.0px;top:1002.3px;font-size:12px;line-height:12px;color:#d8d8d8;letter-spacing:0.83px;font-style:italic;">fx</span><svg class="a" style="left:1732px;top:1011px;" width="5" height="3" viewBox="0 0 5 3"><path d="M0 0H5 L2.5 3Z" fill="#d8d8d8"/></svg><svg class="a" style="left:1827.5px;top:1002.5px;" width="12" height="12" viewBox="0 0 12 12"><circle cx="6" cy="6" r="4.800" fill="none" stroke="#e0e0e0" stroke-width="1.500"/><path d="M2.700 2.700L9.300 9.300" stroke="#e0e0e0" stroke-width="1.500"/></svg><svg class="a" style="left:1854px;top:1002.5px;" width="12" height="12" viewBox="0 0 12 12"><path d="M1 1H11V11H5L1 7Z" fill="#6e6e6e"/><path d="M1 7H5V11Z" fill="#4b4b4b" stroke="#6e6e6e" stroke-width="0.8"/></svg><svg class="a" style="left:1879.5px;top:1002px;" width="12" height="13" viewBox="0 0 12 13"><path d="M0.500 3.500H11.500M4 3V1.500H8V3" fill="none" stroke="#6e6e6e" stroke-width="1.2"/><path d="M1.500 4.500H10.500L9.500 12.500H2.500Z" fill="none" stroke="#6e6e6e" stroke-width="1.1"/><path d="M4.300 5.500V11.500M6 5.500V11.500M7.700 5.500V11.500" stroke="#6e6e6e" stroke-width="0.9"/></svg><div class="a" style="left:1658px;top:1021px;width:262px;height:18px;background:#363636;"></div><div class="a" style="left:1658px;top:1021px;width:56px;height:18px;background:#4a4a4a;border-top:1px solid #5e5e5e;border-right:1px solid #2a2a2a"></div><svg class="a" style="left:1663px;top:1025.5px;" width="5" height="10" viewBox="0 0 5 10"><path d="M0.500 3.500L2.500 1L4.500 3.500M0.500 6.500L2.500 9L4.500 6.500" fill="none" stroke="#d8d8d8" stroke-width="1.1"/></svg><span class="t" style="left:1671.2px;top:1025.0px;font-size:9.5px;line-height:9.5px;color:#ececec;letter-spacing:-0.03px;font-weight:bold;">Zeichen</span><div class="a" style="left:1759px;top:1022px;width:1px;height:17px;background:#2c2c2c;"></div><div class="a" style="left:1822px;top:1022px;width:1px;height:17px;background:#2c2c2c;"></div><span class="t" style="left:1721.3px;top:1025.0px;font-size:9.5px;line-height:9.5px;color:#8e8e8e;letter-spacing:-0.07px;font-weight:bold;">Absatz</span><span class="t" style="left:1767.0px;top:1025.0px;font-size:9.5px;line-height:9.5px;color:#8e8e8e;letter-spacing:0.19px;font-weight:bold;">OpenType</span><svg class="a" style="left:1901px;top:1026px;" width="16" height="9" viewBox="0 0 16 9"><path d="M0 1.500H5L2.500 4.500Z" fill="#cfcfcf"/><path d="M6 1H15M6 3.500H15M6 6H15M6 8.500H15" stroke="#cfcfcf" stroke-width="1"/></svg><div class="a" style="left:133px;top:751px;width:235px;height:245px;background:rgba(0,0,0,0.18);border-radius:3px"></div><div class="a" style="left:134px;top:752px;width:232px;height:242px;background:#4a4a4a;border:1px solid #2a2a2a;border-radius:3px 3px 0 0"></div><div class="a" style="left:135px;top:753px;width:230px;height:13px;background:#2c2c2c;border-radius:2px 2px 0 0"></div><svg class="a" style="left:337px;top:756px;" width="8" height="6" viewBox="0 0 8 6"><path d="M3.500 0V6L0 3ZM8 0V6L4.500 3Z" fill="#cfcfcf"/></svg><svg class="a" style="left:353.5px;top:755.5px;" width="7" height="7" viewBox="0 0 7 7"><path d="M0.500 0.500L6 6M6 0.500L0.500 6" stroke="#e0e0e0" stroke-width="1.500"/></svg><div class="a" style="left:135px;top:766px;width:230px;height:17px;background:#383838;"></div><div class="a" style="left:135px;top:766px;width:91px;height:17px;background:#4a4a4a;border-right:1px solid #2a2a2a"></div><svg class="a" style="left:140px;top:771.5px;" width="5" height="10" viewBox="0 0 5 10"><path d="M0.500 3.500L2.500 1L4.500 3.500M0.500 6.500L2.500 9L4.500 6.500" fill="none" stroke="#d8d8d8" stroke-width="1.1"/></svg><span class="t" style="left:148.0px;top:769.5px;font-size:9.5px;line-height:9.5px;color:#ececec;letter-spacing:0.12px;font-weight:bold;">Transformieren</span><div class="a" style="left:290px;top:767px;width:1px;height:15px;background:#2e2e2e;"></div><span class="t" style="left:233.3px;top:769.5px;font-size:9.5px;line-height:9.5px;color:#8e8e8e;letter-spacing:-0.04px;font-weight:bold;">Ausrichten</span><svg class="a" style="left:347px;top:770.5px;" width="16" height="9" viewBox="0 0 16 9"><path d="M0 1.500H5L2.500 4.500Z" fill="#cfcfcf"/><path d="M6 1H15M6 3.500H15M6 6H15M6 8.500H15" stroke="#cfcfcf" stroke-width="1"/></svg><svg class="a" style="left:140px;top:803px;" width="19" height="19" viewBox="0 0 19 19"><rect x="0.5" y="0.5" width="4" height="4" fill="none" stroke="#d8d8d8"/><rect x="0.5" y="7.5" width="4" height="4" fill="none" stroke="#d8d8d8"/><rect x="0.5" y="14.5" width="4" height="4" fill="none" stroke="#d8d8d8"/><rect x="7.5" y="0.5" width="4" height="4" fill="none" stroke="#d8d8d8"/><rect x="7.5" y="7.5" width="4" height="4" fill="none" stroke="#d8d8d8"/><rect x="7.5" y="14.5" width="4" height="4" fill="none" stroke="#d8d8d8"/><rect x="14.5" y="0.5" width="4" height="4" fill="none" stroke="#d8d8d8"/><rect x="14.5" y="7.5" width="4" height="4" fill="#d8d8d8" stroke="#d8d8d8"/><rect x="14.5" y="14.5" width="4" height="4" fill="none" stroke="#d8d8d8"/><path d="M5 2.500H7M12 2.500H14M5 9.500H7M12 9.500H14M5 16.500H7M12 16.500H14M2.500 5V7M2.500 12V14M9.500 5V7M9.500 12V14M16.500 5V7M16.500 12V14" stroke="#d8d8d8"/></svg><span class="t" style="left:173.0px;top:794.0px;font-size:10px;line-height:10px;color:#dedede;letter-spacing:-0.45px;font-weight:bold;">x:</span><div class="a" style="left:187.5px;top:790.8px;width:56px;height:17.5px;background:#a3a3a3;border:1px solid #2e2e2e;border-bottom-color:#666;border-right-color:#555"></div><span class="t" style="left:191.5px;top:794.8px;font-size:10px;line-height:10px;color:#111;letter-spacing:-0.39px;">46,322 mm</span><span class="t" style="left:251.3px;top:794.0px;font-size:10px;line-height:10px;color:#dedede;letter-spacing:-1.03px;font-weight:bold;">B:</span><div class="a" style="left:266.3px;top:790.8px;width:56px;height:17.5px;background:#a3a3a3;border:1px solid #2e2e2e;border-bottom-color:#666;border-right-color:#555"></div><span class="t" style="left:270.3px;top:794.8px;font-size:10px;line-height:10px;color:#111;letter-spacing:-0.39px;">37,643 mm</span><span class="t" style="left:173.0px;top:820.3px;font-size:10px;line-height:10px;color:#dedede;letter-spacing:-0.45px;font-weight:bold;">y:</span><div class="a" style="left:187.5px;top:817px;width:56px;height:17.5px;background:#a3a3a3;border:1px solid #2e2e2e;border-bottom-color:#666;border-right-color:#555"></div><span class="t" style="left:191.5px;top:821.0px;font-size:10px;line-height:10px;color:#111;letter-spacing:-0.31px;">11,773 mm</span><span class="t" style="left:251.3px;top:820.3px;font-size:10px;line-height:10px;color:#dedede;letter-spacing:-0.78px;font-weight:bold;">H:</span><div class="a" style="left:266.3px;top:817px;width:56px;height:17.5px;background:#a3a3a3;border:1px solid #2e2e2e;border-bottom-color:#666;border-right-color:#555"></div><span class="t" style="left:270.3px;top:821.0px;font-size:10px;line-height:10px;color:#111;letter-spacing:-0.31px;">11,946 mm</span><div class="a" style="left:328.5px;top:800px;width:23px;height:24px;background:#323232;border-radius:2px"></div><svg class="a" style="left:335px;top:804px;" width="10" height="16" viewBox="0 0 10 16"><rect x="2" y="1" width="6" height="8" rx="3" fill="none" stroke="#f0f0f0" stroke-width="1.700"/><rect x="2" y="7" width="6" height="8" rx="3" fill="none" stroke="#f0f0f0" stroke-width="1.700"/></svg><svg class="a" style="left:167.5px;top:846px;" width="11" height="9" viewBox="0 0 11 9"><path d="M0.500 8.500H10.500L7 1Z" fill="none" stroke="#d0d0d0" stroke-width="1"/></svg><span class="t" style="left:178.5px;top:846.5px;font-size:10px;line-height:10px;color:#dedede;">:</span><div class="a" style="left:187.5px;top:842.5px;width:39px;height:17.5px;background:#a3a3a3;border:1px solid #2e2e2e;border-bottom-color:#666;border-right-color:#555"></div><span class="t" style="left:191.5px;top:846.5px;font-size:10px;line-height:10px;color:#111;letter-spacing:-0.28px;">0°</span><div class="a" style="left:226.5px;top:842.5px;width:15px;height:17.5px;background:#505050;border:1px solid #2e2e2e"></div><svg class="a" style="left:230px;top:849.5px;" width="8" height="5" viewBox="0 0 8 5"><path d="M0 0H8 L4 5Z" fill="#e8e8e8"/></svg><svg class="a" style="left:249.5px;top:846px;" width="12" height="9" viewBox="0 0 12 9"><path d="M0.500 8.500L4 0.500H11.500L8 8.500Z" fill="none" stroke="#d0d0d0" stroke-width="1"/></svg><span class="t" style="left:260.0px;top:846.5px;font-size:10px;line-height:10px;color:#dedede;">:</span><div class="a" style="left:268.3px;top:842.5px;width:39px;height:17.5px;background:#a3a3a3;border:1px solid #2e2e2e;border-bottom-color:#666;border-right-color:#555"></div><span class="t" style="left:272.3px;top:846.5px;font-size:10px;line-height:10px;color:#111;letter-spacing:-0.28px;">0°</span><div class="a" style="left:307.3px;top:842.5px;width:15px;height:17.5px;background:#505050;border:1px solid #2e2e2e"></div><svg class="a" style="left:311px;top:849.5px;" width="8" height="5" viewBox="0 0 8 5"><path d="M0 0H8 L4 5Z" fill="#e8e8e8"/></svg><div class="a" style="left:135px;top:866px;width:230px;height:4px;background:#2c2c2c;"></div><div class="a" style="left:135px;top:870px;width:230px;height:16.5px;background:#383838;"></div><div class="a" style="left:135px;top:870px;width:64px;height:16.5px;background:#4a4a4a;border-right:1px solid #2a2a2a"></div><span class="t" style="left:142.0px;top:873.3px;font-size:9.5px;line-height:9.5px;color:#ececec;letter-spacing:0.18px;font-weight:bold;">Pathfinder</span><svg class="a" style="left:347px;top:874.5px;" width="16" height="9" viewBox="0 0 16 9"><path d="M0 1.500H5L2.500 4.500Z" fill="#cfcfcf"/><path d="M6 1H15M6 3.500H15M6 6H15M6 8.500H15" stroke="#cfcfcf" stroke-width="1"/></svg><span class="t" style="left:140.0px;top:893.5px;font-size:10px;line-height:10px;color:#dedede;letter-spacing:-0.16px;">Formmodi:</span><svg class="a" style="left:145.5px;top:917px;" width="15" height="15" viewBox="0 0 15 15"><rect x="0.500" y="0.500" width="9" height="9" fill="#9a9a9a" stroke="#c8c8c8"/><rect x="4.500" y="4.500" width="9" height="9" fill="#9a9a9a" stroke="#c8c8c8"/></svg><svg class="a" style="left:177.5px;top:917px;" width="15" height="15" viewBox="0 0 15 15"><rect x="4.500" y="4.500" width="9" height="9" fill="none" stroke="#777"/><rect x="0.500" y="0.500" width="9" height="9" fill="#4a4a4a" stroke="#c8c8c8"/><path d="M4.500 9.500V4.500H9.500" fill="none" stroke="#c8c8c8"/></svg><svg class="a" style="left:210px;top:917px;" width="15" height="15" viewBox="0 0 15 15"><rect x="0.500" y="0.500" width="9" height="9" fill="none" stroke="#c8c8c8"/><rect x="4.500" y="4.500" width="9" height="9" fill="none" stroke="#c8c8c8"/><rect x="4.500" y="4.500" width="5" height="5" fill="#9a9a9a"/></svg><svg class="a" style="left:242.5px;top:917px;" width="15" height="15" viewBox="0 0 15 15"><rect x="0.500" y="0.500" width="9" height="9" fill="#9a9a9a" stroke="#c8c8c8"/><rect x="4.500" y="4.500" width="9" height="9" fill="#9a9a9a" stroke="#c8c8c8"/><rect x="5" y="5" width="4.500" height="4.500" fill="#4a4a4a"/></svg><div class="a" style="left:271.5px;top:916px;width:87px;height:17.5px;background:#515151;border:1px solid #3a3a3a;border-radius:2px"></div><span class="t" style="left:288.0px;top:919.5px;font-size:10px;line-height:10px;color:#868686;letter-spacing:-0.17px;">Umwandeln</span><span class="t" style="left:140.0px;top:943.5px;font-size:10px;line-height:10px;color:#dedede;letter-spacing:0.04px;">Pathfinder:</span><svg class="a" style="left:148px;top:967.5px;" width="15" height="15" viewBox="0 0 15 15"><rect x="0.500" y="0.500" width="6" height="6" fill="none" stroke="#c8c8c8"/><rect x="4.500" y="4.500" width="6" height="6" fill="#4a4a4a" stroke="#c8c8c8"/><rect x="8.500" y="8.500" width="6" height="6" fill="#4a4a4a" stroke="#c8c8c8"/></svg><svg class="a" style="left:185.5px;top:967.5px;" width="15" height="15" viewBox="0 0 15 15"><rect x="0" y="0" width="6" height="6" fill="#c8c8c8"/><rect x="4" y="4" width="6" height="6" fill="#bbb"/><rect x="6" y="6" width="9" height="9" fill="#c8c8c8"/></svg><svg class="a" style="left:222.5px;top:967.5px;" width="15" height="15" viewBox="0 0 15 15"><rect x="4" y="4" width="11" height="11" fill="#8a8a8a"/><rect x="0" y="0" width="10" height="10" fill="#c8c8c8"/></svg><svg class="a" style="left:259px;top:967.5px;" width="15" height="15" viewBox="0 0 15 15"><rect x="0" y="0" width="10" height="10" fill="#585858"/><rect x="4" y="4" width="11" height="11" fill="#585858"/><rect x="4" y="4" width="6" height="6" fill="#c8c8c8"/></svg><svg class="a" style="left:297.5px;top:967.5px;" width="15" height="15" viewBox="0 0 15 15"><rect x="0.500" y="0.500" width="8" height="8" fill="none" stroke="#c8c8c8"/><rect x="5.500" y="5.500" width="9" height="9" fill="none" stroke="#c8c8c8"/><rect x="5.500" y="5.500" width="3" height="3" fill="#4a4a4a" stroke="#c8c8c8"/></svg><svg class="a" style="left:335.5px;top:967.5px;" width="15" height="15" viewBox="0 0 15 15"><rect x="0.500" y="0.500" width="9" height="9" fill="#444" stroke="#666"/><path d="M12.500 3V12.500H3" fill="none" stroke="#c8c8c8" stroke-width="2.500"/></svg></div></body></html>
